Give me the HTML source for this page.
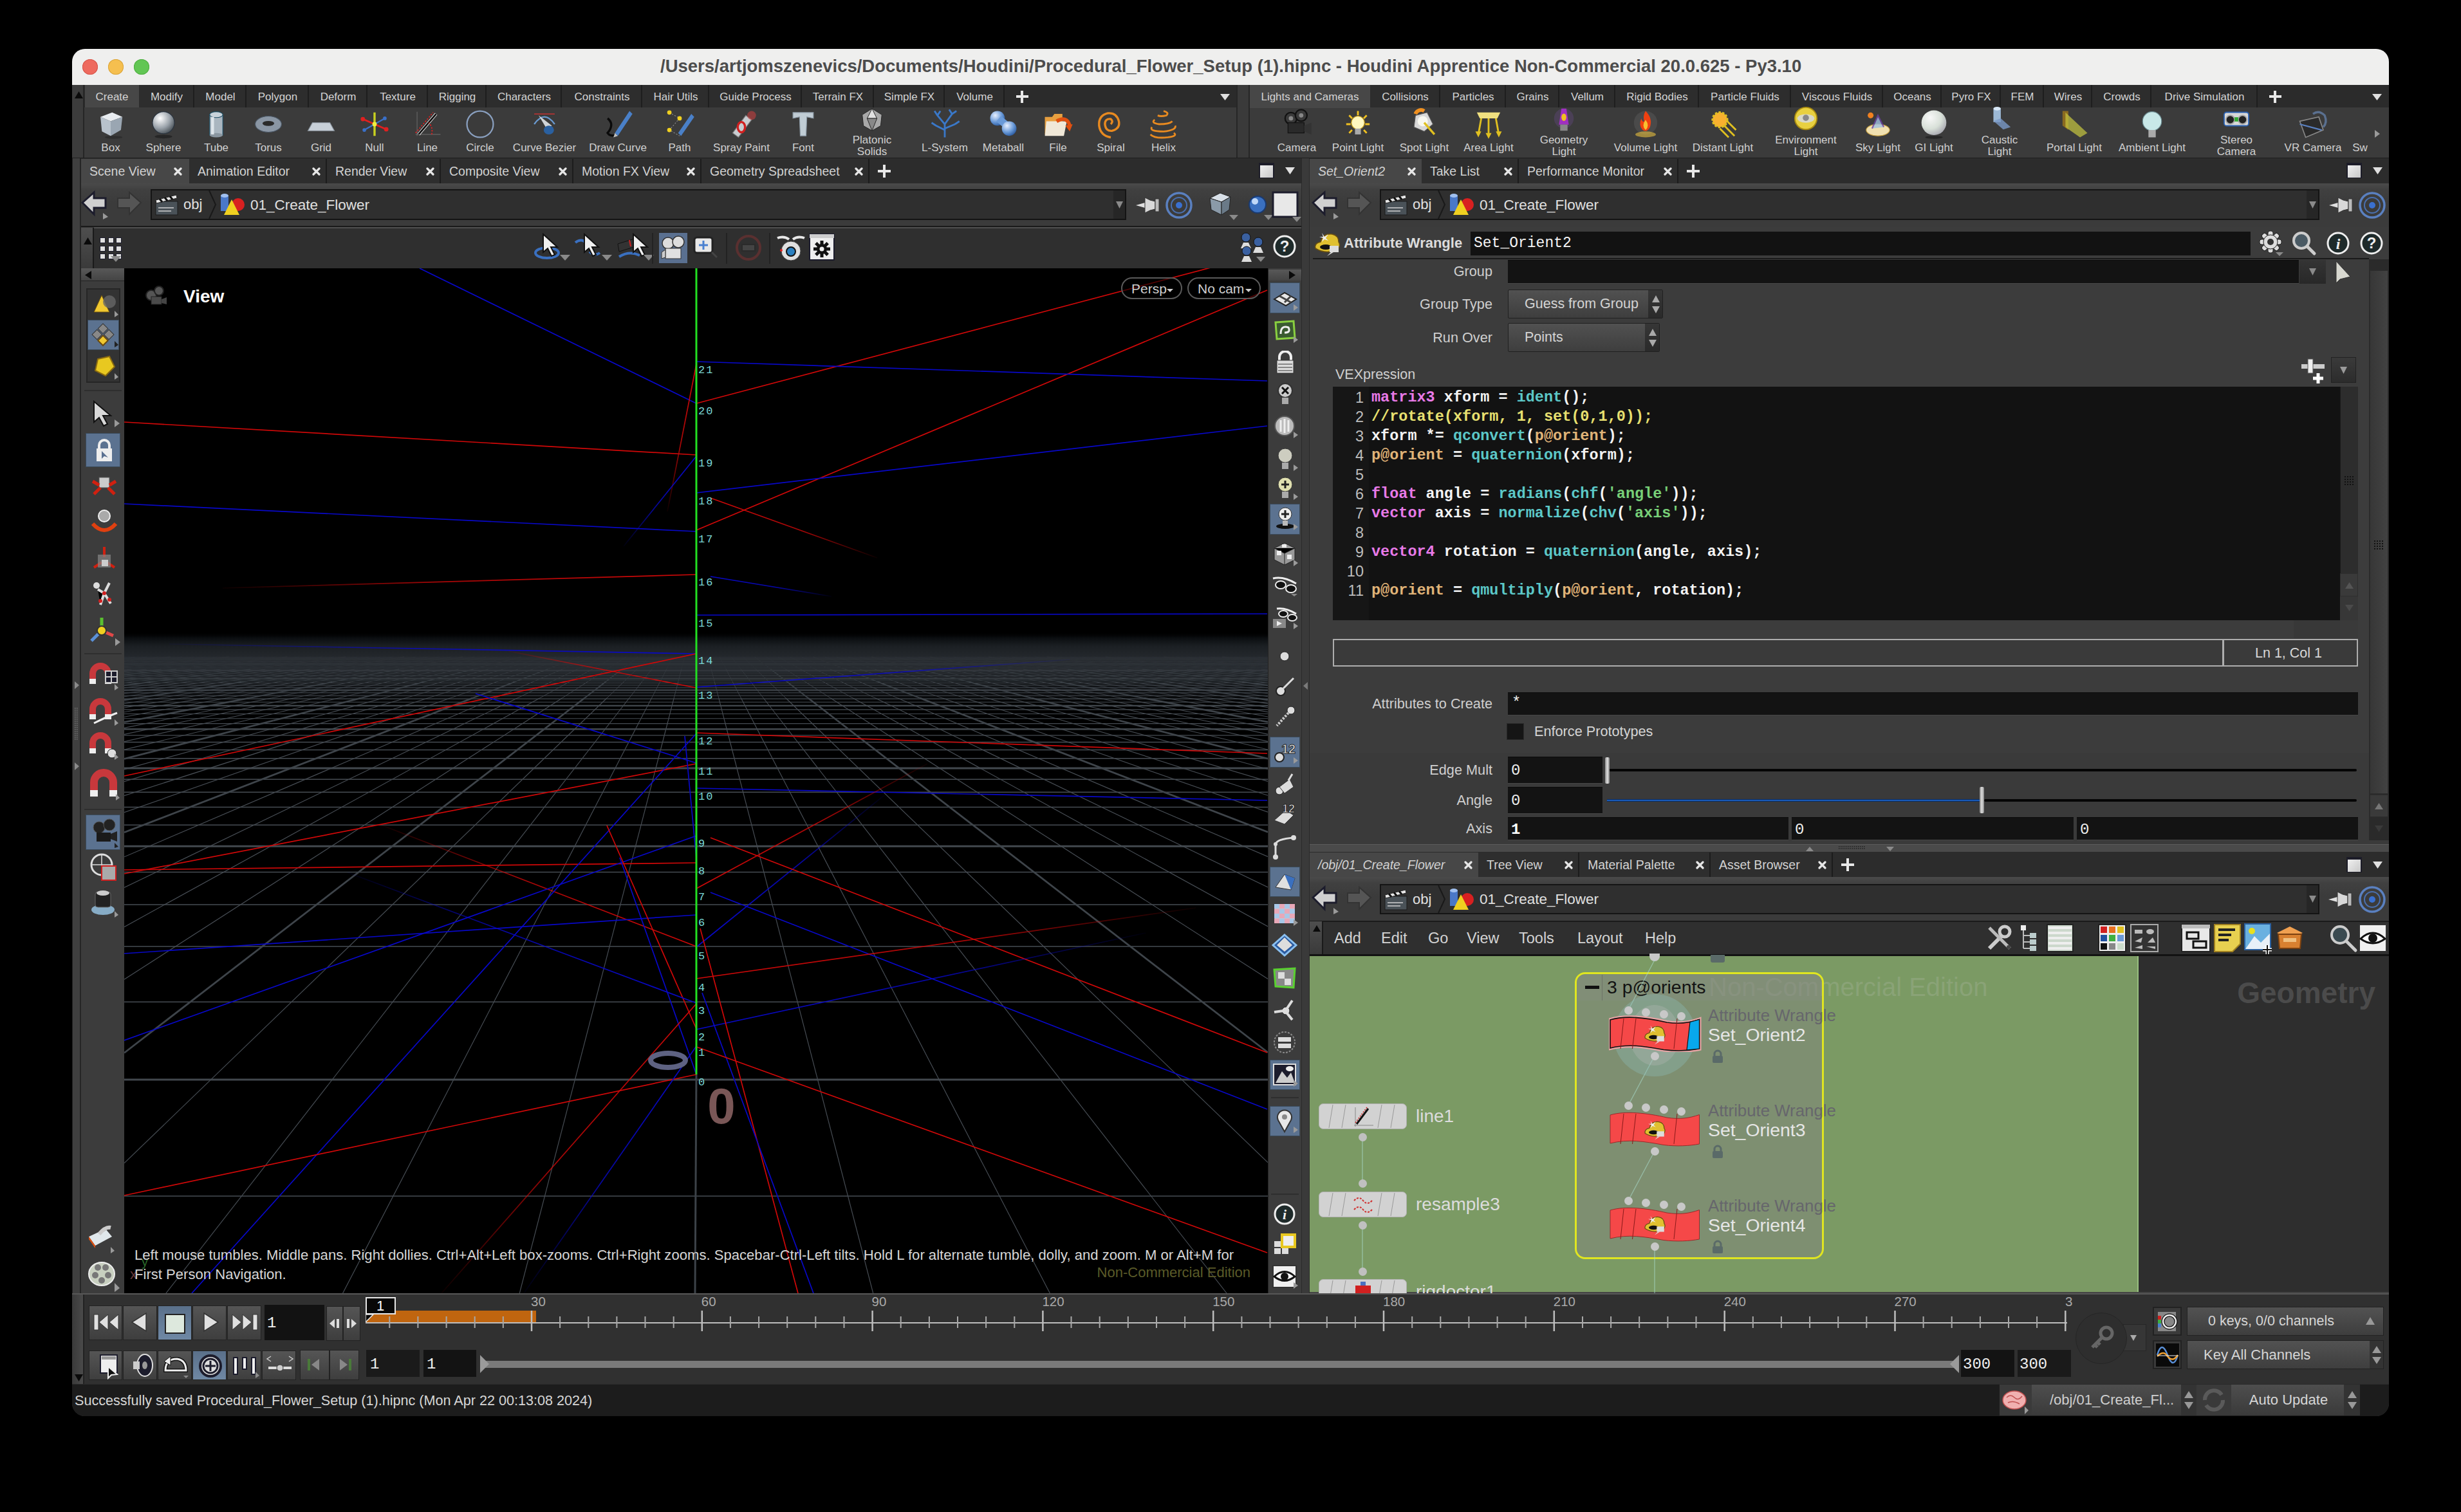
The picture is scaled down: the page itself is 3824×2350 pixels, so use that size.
<!DOCTYPE html>
<html><head><meta charset="utf-8"><title>Houdini</title>
<style>
html,body{margin:0;padding:0;background:#000;width:3824px;height:2350px;overflow:hidden;}
#win{position:absolute;left:0;top:0;width:3824px;height:2350px;}
#clip{position:absolute;left:112px;top:76px;width:3600px;height:2125px;border-radius:20px;overflow:hidden;background:#3a3a3a;}
#inner{position:absolute;left:-112px;top:-76px;width:3824px;height:2350px;}
</style></head><body><div id="win"><div id="clip"><div id="inner">
<div style="position:absolute;left:112px;top:76px;width:3600px;height:56px;background:#efefee;"></div>
<div style="position:absolute;left:128px;top:92px;width:24px;height:24px;background:#ee6a5e;border-radius:50%;box-shadow:inset 0 0 0 1px #d5564b;"></div>
<div style="position:absolute;left:168px;top:92px;width:24px;height:24px;background:#f5bf4f;border-radius:50%;box-shadow:inset 0 0 0 1px #d9a43b;"></div>
<div style="position:absolute;left:208px;top:92px;width:24px;height:24px;background:#62c654;border-radius:50%;box-shadow:inset 0 0 0 1px #4fae41;"></div>
<div style="position:absolute;top:85.0px;height:35px;line-height:35px;font-family:'Liberation Sans', sans-serif;font-size:27.5px;color:#4c4c4c;font-weight:bold;font-style:normal;white-space:pre;left:1026.0px;">/Users/artjomszenevics/Documents/Houdini/Procedural_Flower_Setup (1).hipnc - Houdini Apprentice Non-Commercial 20.0.625 - Py3.10</div>
<div style="position:absolute;left:112px;top:132px;width:3600px;height:114px;background:#3b3b3b;"></div>
<div style="position:absolute;left:112px;top:132px;width:19px;height:114px;background:#3c3c3c;border-right:2px solid #262626;box-sizing:border-box;"></div>
<svg style="position:absolute;left:115.5px;top:141.5px;" width="13" height="11" viewBox="0 0 13 11"><polygon points="0,11 13,11 6.5,0" fill="#0a0a0a"/></svg>
<div style="position:absolute;left:131px;top:132px;width:1790px;height:35px;background:#2b2b2b;"></div>
<div style="position:absolute;left:132px;top:132px;width:84px;height:36px;background:#474747;"></div>
<div style="position:absolute;top:139.5px;height:22px;line-height:22px;font-family:'Liberation Sans', sans-serif;font-size:17px;color:#d4d4d4;font-weight:normal;font-style:normal;white-space:pre;left:-826.0px;width:2000px;text-align:center;">Create</div>
<div style="position:absolute;left:216px;top:132px;width:86px;height:35px;background:#2d2d2d;border-right:2px solid #1e1e1e;box-sizing:border-box;"></div>
<div style="position:absolute;top:139.5px;height:22px;line-height:22px;font-family:'Liberation Sans', sans-serif;font-size:17px;color:#d4d4d4;font-weight:normal;font-style:normal;white-space:pre;left:-741.0px;width:2000px;text-align:center;">Modify</div>
<div style="position:absolute;left:302px;top:132px;width:81px;height:35px;background:#2d2d2d;border-right:2px solid #1e1e1e;box-sizing:border-box;"></div>
<div style="position:absolute;top:139.5px;height:22px;line-height:22px;font-family:'Liberation Sans', sans-serif;font-size:17px;color:#d4d4d4;font-weight:normal;font-style:normal;white-space:pre;left:-657.5px;width:2000px;text-align:center;">Model</div>
<div style="position:absolute;left:383px;top:132px;width:97px;height:35px;background:#2d2d2d;border-right:2px solid #1e1e1e;box-sizing:border-box;"></div>
<div style="position:absolute;top:139.5px;height:22px;line-height:22px;font-family:'Liberation Sans', sans-serif;font-size:17px;color:#d4d4d4;font-weight:normal;font-style:normal;white-space:pre;left:-568.5px;width:2000px;text-align:center;">Polygon</div>
<div style="position:absolute;left:480px;top:132px;width:91px;height:35px;background:#2d2d2d;border-right:2px solid #1e1e1e;box-sizing:border-box;"></div>
<div style="position:absolute;top:139.5px;height:22px;line-height:22px;font-family:'Liberation Sans', sans-serif;font-size:17px;color:#d4d4d4;font-weight:normal;font-style:normal;white-space:pre;left:-474.5px;width:2000px;text-align:center;">Deform</div>
<div style="position:absolute;left:571px;top:132px;width:94px;height:35px;background:#2d2d2d;border-right:2px solid #1e1e1e;box-sizing:border-box;"></div>
<div style="position:absolute;top:139.5px;height:22px;line-height:22px;font-family:'Liberation Sans', sans-serif;font-size:17px;color:#d4d4d4;font-weight:normal;font-style:normal;white-space:pre;left:-382.0px;width:2000px;text-align:center;">Texture</div>
<div style="position:absolute;left:665px;top:132px;width:91px;height:35px;background:#2d2d2d;border-right:2px solid #1e1e1e;box-sizing:border-box;"></div>
<div style="position:absolute;top:139.5px;height:22px;line-height:22px;font-family:'Liberation Sans', sans-serif;font-size:17px;color:#d4d4d4;font-weight:normal;font-style:normal;white-space:pre;left:-289.5px;width:2000px;text-align:center;">Rigging</div>
<div style="position:absolute;left:756px;top:132px;width:117px;height:35px;background:#2d2d2d;border-right:2px solid #1e1e1e;box-sizing:border-box;"></div>
<div style="position:absolute;top:139.5px;height:22px;line-height:22px;font-family:'Liberation Sans', sans-serif;font-size:17px;color:#d4d4d4;font-weight:normal;font-style:normal;white-space:pre;left:-185.5px;width:2000px;text-align:center;">Characters</div>
<div style="position:absolute;left:873px;top:132px;width:125px;height:35px;background:#2d2d2d;border-right:2px solid #1e1e1e;box-sizing:border-box;"></div>
<div style="position:absolute;top:139.5px;height:22px;line-height:22px;font-family:'Liberation Sans', sans-serif;font-size:17px;color:#d4d4d4;font-weight:normal;font-style:normal;white-space:pre;left:-64.5px;width:2000px;text-align:center;">Constraints</div>
<div style="position:absolute;left:998px;top:132px;width:104px;height:35px;background:#2d2d2d;border-right:2px solid #1e1e1e;box-sizing:border-box;"></div>
<div style="position:absolute;top:139.5px;height:22px;line-height:22px;font-family:'Liberation Sans', sans-serif;font-size:17px;color:#d4d4d4;font-weight:normal;font-style:normal;white-space:pre;left:50.0px;width:2000px;text-align:center;">Hair Utils</div>
<div style="position:absolute;left:1102px;top:132px;width:144px;height:35px;background:#2d2d2d;border-right:2px solid #1e1e1e;box-sizing:border-box;"></div>
<div style="position:absolute;top:139.5px;height:22px;line-height:22px;font-family:'Liberation Sans', sans-serif;font-size:17px;color:#d4d4d4;font-weight:normal;font-style:normal;white-space:pre;left:174.0px;width:2000px;text-align:center;">Guide Process</div>
<div style="position:absolute;left:1246px;top:132px;width:112px;height:35px;background:#2d2d2d;border-right:2px solid #1e1e1e;box-sizing:border-box;"></div>
<div style="position:absolute;top:139.5px;height:22px;line-height:22px;font-family:'Liberation Sans', sans-serif;font-size:17px;color:#d4d4d4;font-weight:normal;font-style:normal;white-space:pre;left:302.0px;width:2000px;text-align:center;">Terrain FX</div>
<div style="position:absolute;left:1358px;top:132px;width:110px;height:35px;background:#2d2d2d;border-right:2px solid #1e1e1e;box-sizing:border-box;"></div>
<div style="position:absolute;top:139.5px;height:22px;line-height:22px;font-family:'Liberation Sans', sans-serif;font-size:17px;color:#d4d4d4;font-weight:normal;font-style:normal;white-space:pre;left:413.0px;width:2000px;text-align:center;">Simple FX</div>
<div style="position:absolute;left:1468px;top:132px;width:93px;height:35px;background:#2d2d2d;border-right:2px solid #1e1e1e;box-sizing:border-box;"></div>
<div style="position:absolute;top:139.5px;height:22px;line-height:22px;font-family:'Liberation Sans', sans-serif;font-size:17px;color:#d4d4d4;font-weight:normal;font-style:normal;white-space:pre;left:514.5px;width:2000px;text-align:center;">Volume</div>
<div style="position:absolute;left:1578.5px;top:147.75px;width:19.0px;height:4.5px;background:#e8e8e8;"></div>
<div style="position:absolute;left:1585.75px;top:140.5px;width:4.5px;height:19.0px;background:#e8e8e8;"></div>
<svg style="position:absolute;left:1895.5px;top:146.0px;" width="15" height="10" viewBox="0 0 15 10"><polygon points="0,0 15,0 7.5,10" fill="#e0e0e0"/></svg>
<div style="position:absolute;left:131px;top:167px;width:1790px;height:79px;background:#3b3b3b;"></div>
<div style="position:absolute;left:1921px;top:132px;width:21px;height:114px;background:#3a3a3a;border-left:2px solid #262626;border-right:2px solid #262626;box-sizing:border-box;"></div>
<div style="position:absolute;left:1942px;top:132px;width:1770px;height:35px;background:#2b2b2b;"></div>
<div style="position:absolute;left:1942px;top:132px;width:187px;height:36px;background:#474747;"></div>
<div style="position:absolute;top:139.5px;height:22px;line-height:22px;font-family:'Liberation Sans', sans-serif;font-size:17px;color:#d4d4d4;font-weight:normal;font-style:normal;white-space:pre;left:1035.5px;width:2000px;text-align:center;">Lights and Cameras</div>
<div style="position:absolute;left:2129px;top:132px;width:109px;height:35px;background:#2d2d2d;border-right:2px solid #1e1e1e;box-sizing:border-box;"></div>
<div style="position:absolute;top:139.5px;height:22px;line-height:22px;font-family:'Liberation Sans', sans-serif;font-size:17px;color:#d4d4d4;font-weight:normal;font-style:normal;white-space:pre;left:1183.5px;width:2000px;text-align:center;">Collisions</div>
<div style="position:absolute;left:2238px;top:132px;width:102px;height:35px;background:#2d2d2d;border-right:2px solid #1e1e1e;box-sizing:border-box;"></div>
<div style="position:absolute;top:139.5px;height:22px;line-height:22px;font-family:'Liberation Sans', sans-serif;font-size:17px;color:#d4d4d4;font-weight:normal;font-style:normal;white-space:pre;left:1289.0px;width:2000px;text-align:center;">Particles</div>
<div style="position:absolute;left:2340px;top:132px;width:83px;height:35px;background:#2d2d2d;border-right:2px solid #1e1e1e;box-sizing:border-box;"></div>
<div style="position:absolute;top:139.5px;height:22px;line-height:22px;font-family:'Liberation Sans', sans-serif;font-size:17px;color:#d4d4d4;font-weight:normal;font-style:normal;white-space:pre;left:1381.5px;width:2000px;text-align:center;">Grains</div>
<div style="position:absolute;left:2423px;top:132px;width:87px;height:35px;background:#2d2d2d;border-right:2px solid #1e1e1e;box-sizing:border-box;"></div>
<div style="position:absolute;top:139.5px;height:22px;line-height:22px;font-family:'Liberation Sans', sans-serif;font-size:17px;color:#d4d4d4;font-weight:normal;font-style:normal;white-space:pre;left:1466.5px;width:2000px;text-align:center;">Vellum</div>
<div style="position:absolute;left:2510px;top:132px;width:130px;height:35px;background:#2d2d2d;border-right:2px solid #1e1e1e;box-sizing:border-box;"></div>
<div style="position:absolute;top:139.5px;height:22px;line-height:22px;font-family:'Liberation Sans', sans-serif;font-size:17px;color:#d4d4d4;font-weight:normal;font-style:normal;white-space:pre;left:1575.0px;width:2000px;text-align:center;">Rigid Bodies</div>
<div style="position:absolute;left:2640px;top:132px;width:143px;height:35px;background:#2d2d2d;border-right:2px solid #1e1e1e;box-sizing:border-box;"></div>
<div style="position:absolute;top:139.5px;height:22px;line-height:22px;font-family:'Liberation Sans', sans-serif;font-size:17px;color:#d4d4d4;font-weight:normal;font-style:normal;white-space:pre;left:1711.5px;width:2000px;text-align:center;">Particle Fluids</div>
<div style="position:absolute;left:2783px;top:132px;width:143px;height:35px;background:#2d2d2d;border-right:2px solid #1e1e1e;box-sizing:border-box;"></div>
<div style="position:absolute;top:139.5px;height:22px;line-height:22px;font-family:'Liberation Sans', sans-serif;font-size:17px;color:#d4d4d4;font-weight:normal;font-style:normal;white-space:pre;left:1854.5px;width:2000px;text-align:center;">Viscous Fluids</div>
<div style="position:absolute;left:2926px;top:132px;width:91px;height:35px;background:#2d2d2d;border-right:2px solid #1e1e1e;box-sizing:border-box;"></div>
<div style="position:absolute;top:139.5px;height:22px;line-height:22px;font-family:'Liberation Sans', sans-serif;font-size:17px;color:#d4d4d4;font-weight:normal;font-style:normal;white-space:pre;left:1971.5px;width:2000px;text-align:center;">Oceans</div>
<div style="position:absolute;left:3017px;top:132px;width:92px;height:35px;background:#2d2d2d;border-right:2px solid #1e1e1e;box-sizing:border-box;"></div>
<div style="position:absolute;top:139.5px;height:22px;line-height:22px;font-family:'Liberation Sans', sans-serif;font-size:17px;color:#d4d4d4;font-weight:normal;font-style:normal;white-space:pre;left:2063.0px;width:2000px;text-align:center;">Pyro FX</div>
<div style="position:absolute;left:3109px;top:132px;width:67px;height:35px;background:#2d2d2d;border-right:2px solid #1e1e1e;box-sizing:border-box;"></div>
<div style="position:absolute;top:139.5px;height:22px;line-height:22px;font-family:'Liberation Sans', sans-serif;font-size:17px;color:#d4d4d4;font-weight:normal;font-style:normal;white-space:pre;left:2142.5px;width:2000px;text-align:center;">FEM</div>
<div style="position:absolute;left:3176px;top:132px;width:75px;height:35px;background:#2d2d2d;border-right:2px solid #1e1e1e;box-sizing:border-box;"></div>
<div style="position:absolute;top:139.5px;height:22px;line-height:22px;font-family:'Liberation Sans', sans-serif;font-size:17px;color:#d4d4d4;font-weight:normal;font-style:normal;white-space:pre;left:2213.5px;width:2000px;text-align:center;">Wires</div>
<div style="position:absolute;left:3251px;top:132px;width:92px;height:35px;background:#2d2d2d;border-right:2px solid #1e1e1e;box-sizing:border-box;"></div>
<div style="position:absolute;top:139.5px;height:22px;line-height:22px;font-family:'Liberation Sans', sans-serif;font-size:17px;color:#d4d4d4;font-weight:normal;font-style:normal;white-space:pre;left:2297.0px;width:2000px;text-align:center;">Crowds</div>
<div style="position:absolute;left:3343px;top:132px;width:165px;height:35px;background:#2d2d2d;border-right:2px solid #1e1e1e;box-sizing:border-box;"></div>
<div style="position:absolute;top:139.5px;height:22px;line-height:22px;font-family:'Liberation Sans', sans-serif;font-size:17px;color:#d4d4d4;font-weight:normal;font-style:normal;white-space:pre;left:2425.5px;width:2000px;text-align:center;">Drive Simulation</div>
<div style="position:absolute;left:3525.5px;top:147.75px;width:19.0px;height:4.5px;background:#e8e8e8;"></div>
<div style="position:absolute;left:3532.75px;top:140.5px;width:4.5px;height:19.0px;background:#e8e8e8;"></div>
<svg style="position:absolute;left:3685.5px;top:146.0px;" width="15" height="10" viewBox="0 0 15 10"><polygon points="0,0 15,0 7.5,10" fill="#e0e0e0"/></svg>
<div style="position:absolute;left:112px;top:245px;width:3600px;height:2px;background:#1e1e1e;"></div>
<div style="position:absolute;top:219.0px;height:22px;line-height:22px;font-family:'Liberation Sans', sans-serif;font-size:17px;color:#d0d0d0;font-weight:normal;font-style:normal;white-space:pre;left:-828.0px;width:2000px;text-align:center;">Box</div>
<div style="position:absolute;top:219.0px;height:22px;line-height:22px;font-family:'Liberation Sans', sans-serif;font-size:17px;color:#d0d0d0;font-weight:normal;font-style:normal;white-space:pre;left:-746.0px;width:2000px;text-align:center;">Sphere</div>
<div style="position:absolute;top:219.0px;height:22px;line-height:22px;font-family:'Liberation Sans', sans-serif;font-size:17px;color:#d0d0d0;font-weight:normal;font-style:normal;white-space:pre;left:-664.0px;width:2000px;text-align:center;">Tube</div>
<div style="position:absolute;top:219.0px;height:22px;line-height:22px;font-family:'Liberation Sans', sans-serif;font-size:17px;color:#d0d0d0;font-weight:normal;font-style:normal;white-space:pre;left:-583.0px;width:2000px;text-align:center;">Torus</div>
<div style="position:absolute;top:219.0px;height:22px;line-height:22px;font-family:'Liberation Sans', sans-serif;font-size:17px;color:#d0d0d0;font-weight:normal;font-style:normal;white-space:pre;left:-501.0px;width:2000px;text-align:center;">Grid</div>
<div style="position:absolute;top:219.0px;height:22px;line-height:22px;font-family:'Liberation Sans', sans-serif;font-size:17px;color:#d0d0d0;font-weight:normal;font-style:normal;white-space:pre;left:-418.0px;width:2000px;text-align:center;">Null</div>
<div style="position:absolute;top:219.0px;height:22px;line-height:22px;font-family:'Liberation Sans', sans-serif;font-size:17px;color:#d0d0d0;font-weight:normal;font-style:normal;white-space:pre;left:-336.0px;width:2000px;text-align:center;">Line</div>
<div style="position:absolute;top:219.0px;height:22px;line-height:22px;font-family:'Liberation Sans', sans-serif;font-size:17px;color:#d0d0d0;font-weight:normal;font-style:normal;white-space:pre;left:-254.0px;width:2000px;text-align:center;">Circle</div>
<div style="position:absolute;top:219.0px;height:22px;line-height:22px;font-family:'Liberation Sans', sans-serif;font-size:17px;color:#d0d0d0;font-weight:normal;font-style:normal;white-space:pre;left:-154.0px;width:2000px;text-align:center;">Curve Bezier</div>
<div style="position:absolute;top:219.0px;height:22px;line-height:22px;font-family:'Liberation Sans', sans-serif;font-size:17px;color:#d0d0d0;font-weight:normal;font-style:normal;white-space:pre;left:-40.0px;width:2000px;text-align:center;">Draw Curve</div>
<div style="position:absolute;top:219.0px;height:22px;line-height:22px;font-family:'Liberation Sans', sans-serif;font-size:17px;color:#d0d0d0;font-weight:normal;font-style:normal;white-space:pre;left:56.0px;width:2000px;text-align:center;">Path</div>
<div style="position:absolute;top:219.0px;height:22px;line-height:22px;font-family:'Liberation Sans', sans-serif;font-size:17px;color:#d0d0d0;font-weight:normal;font-style:normal;white-space:pre;left:152.0px;width:2000px;text-align:center;">Spray Paint</div>
<div style="position:absolute;top:219.0px;height:22px;line-height:22px;font-family:'Liberation Sans', sans-serif;font-size:17px;color:#d0d0d0;font-weight:normal;font-style:normal;white-space:pre;left:248.0px;width:2000px;text-align:center;">Font</div>
<div style="position:absolute;top:206.5px;height:22px;line-height:22px;font-family:'Liberation Sans', sans-serif;font-size:17px;color:#d0d0d0;font-weight:normal;font-style:normal;white-space:pre;left:355.0px;width:2000px;text-align:center;">Platonic</div>
<div style="position:absolute;top:224.5px;height:22px;line-height:22px;font-family:'Liberation Sans', sans-serif;font-size:17px;color:#d0d0d0;font-weight:normal;font-style:normal;white-space:pre;left:355.0px;width:2000px;text-align:center;">Solids</div>
<div style="position:absolute;top:219.0px;height:22px;line-height:22px;font-family:'Liberation Sans', sans-serif;font-size:17px;color:#d0d0d0;font-weight:normal;font-style:normal;white-space:pre;left:468.0px;width:2000px;text-align:center;">L-System</div>
<div style="position:absolute;top:219.0px;height:22px;line-height:22px;font-family:'Liberation Sans', sans-serif;font-size:17px;color:#d0d0d0;font-weight:normal;font-style:normal;white-space:pre;left:559.0px;width:2000px;text-align:center;">Metaball</div>
<div style="position:absolute;top:219.0px;height:22px;line-height:22px;font-family:'Liberation Sans', sans-serif;font-size:17px;color:#d0d0d0;font-weight:normal;font-style:normal;white-space:pre;left:644.0px;width:2000px;text-align:center;">File</div>
<div style="position:absolute;top:219.0px;height:22px;line-height:22px;font-family:'Liberation Sans', sans-serif;font-size:17px;color:#d0d0d0;font-weight:normal;font-style:normal;white-space:pre;left:726.0px;width:2000px;text-align:center;">Spiral</div>
<div style="position:absolute;top:219.0px;height:22px;line-height:22px;font-family:'Liberation Sans', sans-serif;font-size:17px;color:#d0d0d0;font-weight:normal;font-style:normal;white-space:pre;left:808.0px;width:2000px;text-align:center;">Helix</div>
<div style="position:absolute;top:219.0px;height:22px;line-height:22px;font-family:'Liberation Sans', sans-serif;font-size:17px;color:#d0d0d0;font-weight:normal;font-style:normal;white-space:pre;left:1015.0px;width:2000px;text-align:center;">Camera</div>
<div style="position:absolute;top:219.0px;height:22px;line-height:22px;font-family:'Liberation Sans', sans-serif;font-size:17px;color:#d0d0d0;font-weight:normal;font-style:normal;white-space:pre;left:1110.0px;width:2000px;text-align:center;">Point Light</div>
<div style="position:absolute;top:219.0px;height:22px;line-height:22px;font-family:'Liberation Sans', sans-serif;font-size:17px;color:#d0d0d0;font-weight:normal;font-style:normal;white-space:pre;left:1213.0px;width:2000px;text-align:center;">Spot Light</div>
<div style="position:absolute;top:219.0px;height:22px;line-height:22px;font-family:'Liberation Sans', sans-serif;font-size:17px;color:#d0d0d0;font-weight:normal;font-style:normal;white-space:pre;left:1313.0px;width:2000px;text-align:center;">Area Light</div>
<div style="position:absolute;top:206.5px;height:22px;line-height:22px;font-family:'Liberation Sans', sans-serif;font-size:17px;color:#d0d0d0;font-weight:normal;font-style:normal;white-space:pre;left:1430.0px;width:2000px;text-align:center;">Geometry</div>
<div style="position:absolute;top:224.5px;height:22px;line-height:22px;font-family:'Liberation Sans', sans-serif;font-size:17px;color:#d0d0d0;font-weight:normal;font-style:normal;white-space:pre;left:1430.0px;width:2000px;text-align:center;">Light</div>
<div style="position:absolute;top:219.0px;height:22px;line-height:22px;font-family:'Liberation Sans', sans-serif;font-size:17px;color:#d0d0d0;font-weight:normal;font-style:normal;white-space:pre;left:1557.0px;width:2000px;text-align:center;">Volume Light</div>
<div style="position:absolute;top:219.0px;height:22px;line-height:22px;font-family:'Liberation Sans', sans-serif;font-size:17px;color:#d0d0d0;font-weight:normal;font-style:normal;white-space:pre;left:1677.0px;width:2000px;text-align:center;">Distant Light</div>
<div style="position:absolute;top:206.5px;height:22px;line-height:22px;font-family:'Liberation Sans', sans-serif;font-size:17px;color:#d0d0d0;font-weight:normal;font-style:normal;white-space:pre;left:1806.0px;width:2000px;text-align:center;">Environment</div>
<div style="position:absolute;top:224.5px;height:22px;line-height:22px;font-family:'Liberation Sans', sans-serif;font-size:17px;color:#d0d0d0;font-weight:normal;font-style:normal;white-space:pre;left:1806.0px;width:2000px;text-align:center;">Light</div>
<div style="position:absolute;top:219.0px;height:22px;line-height:22px;font-family:'Liberation Sans', sans-serif;font-size:17px;color:#d0d0d0;font-weight:normal;font-style:normal;white-space:pre;left:1918.0px;width:2000px;text-align:center;">Sky Light</div>
<div style="position:absolute;top:219.0px;height:22px;line-height:22px;font-family:'Liberation Sans', sans-serif;font-size:17px;color:#d0d0d0;font-weight:normal;font-style:normal;white-space:pre;left:2005.0px;width:2000px;text-align:center;">GI Light</div>
<div style="position:absolute;top:206.5px;height:22px;line-height:22px;font-family:'Liberation Sans', sans-serif;font-size:17px;color:#d0d0d0;font-weight:normal;font-style:normal;white-space:pre;left:2107.0px;width:2000px;text-align:center;">Caustic</div>
<div style="position:absolute;top:224.5px;height:22px;line-height:22px;font-family:'Liberation Sans', sans-serif;font-size:17px;color:#d0d0d0;font-weight:normal;font-style:normal;white-space:pre;left:2107.0px;width:2000px;text-align:center;">Light</div>
<div style="position:absolute;top:219.0px;height:22px;line-height:22px;font-family:'Liberation Sans', sans-serif;font-size:17px;color:#d0d0d0;font-weight:normal;font-style:normal;white-space:pre;left:2223.0px;width:2000px;text-align:center;">Portal Light</div>
<div style="position:absolute;top:219.0px;height:22px;line-height:22px;font-family:'Liberation Sans', sans-serif;font-size:17px;color:#d0d0d0;font-weight:normal;font-style:normal;white-space:pre;left:2344.0px;width:2000px;text-align:center;">Ambient Light</div>
<div style="position:absolute;top:206.5px;height:22px;line-height:22px;font-family:'Liberation Sans', sans-serif;font-size:17px;color:#d0d0d0;font-weight:normal;font-style:normal;white-space:pre;left:2475.0px;width:2000px;text-align:center;">Stereo</div>
<div style="position:absolute;top:224.5px;height:22px;line-height:22px;font-family:'Liberation Sans', sans-serif;font-size:17px;color:#d0d0d0;font-weight:normal;font-style:normal;white-space:pre;left:2475.0px;width:2000px;text-align:center;">Camera</div>
<div style="position:absolute;top:219.0px;height:22px;line-height:22px;font-family:'Liberation Sans', sans-serif;font-size:17px;color:#d0d0d0;font-weight:normal;font-style:normal;white-space:pre;left:2594.0px;width:2000px;text-align:center;">VR Camera</div>
<div style="position:absolute;top:219.0px;height:22px;line-height:22px;font-family:'Liberation Sans', sans-serif;font-size:17px;color:#d0d0d0;font-weight:normal;font-style:normal;white-space:pre;left:2667.0px;width:2000px;text-align:center;">Sw</div>
<svg style="position:absolute;left:3690.0px;top:202.0px;" width="8" height="12" viewBox="0 0 8 12"><polygon points="0,0 0,12 8,6.0" fill="#9a9a9a"/></svg>
<svg style="position:absolute;left:150px;top:171px;transform:scale(1.1363636363636365);transform-origin:center;" width="44" height="44" viewBox="0 0 44 44"><polygon points="8,12 24,6 38,12 22,18" fill="#e8ecf0"/><polygon points="8,12 22,18 22,38 10,32" fill="#b8c2cc"/><polygon points="22,18 38,12 36,30 22,38" fill="#9aa6b2"/><ellipse cx="26" cy="40" rx="12" ry="2" fill="#222" opacity="0.5"/></svg>
<svg style="position:absolute;left:232px;top:171px;transform:scale(1.1363636363636365);transform-origin:center;" width="44" height="44" viewBox="0 0 44 44"><defs><radialGradient id="g1" cx="0.35" cy="0.3" r="0.75"><stop offset="0" stop-color="#ffffff"/><stop offset="0.6" stop-color="#9aa2aa"/><stop offset="1" stop-color="#4a5258"/></radialGradient></defs><circle cx="22" cy="20" r="15" fill="url(#g1)" stroke="#2a3440" stroke-width="1"/><ellipse cx="22" cy="39" rx="12" ry="2.5" fill="#111" opacity="0.5"/></svg>
<svg style="position:absolute;left:314px;top:171px;transform:scale(1.1363636363636365);transform-origin:center;" width="44" height="44" viewBox="0 0 44 44"><rect x="13" y="9" width="18" height="28" fill="#aab6c0" stroke="#1a4a60" stroke-width="1"/><ellipse cx="22" cy="9" rx="9" ry="4" fill="#c8d2da" stroke="#1a4a60" stroke-width="1"/><ellipse cx="22" cy="37" rx="9" ry="3" fill="#8a96a0"/><rect x="15" y="12" width="4" height="24" fill="#dde4ea"/></svg>
<svg style="position:absolute;left:395px;top:171px;transform:scale(1.1363636363636365);transform-origin:center;" width="44" height="44" viewBox="0 0 44 44"><ellipse cx="22" cy="22" rx="18" ry="11" fill="#8a96a4" stroke="#4a5664" stroke-width="1"/><ellipse cx="22" cy="21" rx="8" ry="3.5" fill="#2a2a2a"/></svg>
<svg style="position:absolute;left:477px;top:171px;transform:scale(1.1363636363636365);transform-origin:center;" width="44" height="44" viewBox="0 0 44 44"><polygon points="10,20 34,20 40,31 4,31" fill="#c8d0d8" stroke="#8a949e" stroke-width="1"/></svg>
<svg style="position:absolute;left:560px;top:171px;transform:scale(1.1363636363636365);transform-origin:center;" width="44" height="44" viewBox="0 0 44 44"><line x1="22" y1="6" x2="22" y2="38" stroke="#c8d020" stroke-width="3"/><line x1="6" y1="15" x2="38" y2="29" stroke="#e02020" stroke-width="2.5"/><line x1="8" y1="30" x2="36" y2="14" stroke="#3a70c8" stroke-width="2"/><circle cx="6" cy="15" r="3" fill="#e02020"/><circle cx="38" cy="29" r="3" fill="#e02020"/><circle cx="8" cy="30" r="2.5" fill="#3a70c8"/><circle cx="36" cy="14" r="2.5" fill="#3a70c8"/><circle cx="22" cy="22" r="3" fill="#f0f040"/></svg>
<svg style="position:absolute;left:642px;top:171px;transform:scale(1.1363636363636365);transform-origin:center;" width="44" height="44" viewBox="0 0 44 44"><line x1="8" y1="5" x2="8" y2="38" stroke="#666" stroke-width="1"/><line x1="6" y1="36" x2="40" y2="36" stroke="#666" stroke-width="1"/><line x1="10" y1="36" x2="34" y2="8" stroke="#f0f0f0" stroke-width="4"/><line x1="10" y1="36" x2="34" y2="8" stroke="#111" stroke-width="2.5"/><path d="M6,34 L30,6" stroke="#e02020" stroke-width="1.5" stroke-dasharray="2,2"/><path d="M28,36 Q30,26 24,20" stroke="#e02020" stroke-width="1.5" fill="none" stroke-dasharray="2,2"/></svg>
<svg style="position:absolute;left:724px;top:171px;transform:scale(1.1363636363636365);transform-origin:center;" width="44" height="44" viewBox="0 0 44 44"><circle cx="22" cy="22" r="18" fill="none" stroke="#8aa0c0" stroke-width="2"/></svg>
<svg style="position:absolute;left:824px;top:171px;transform:scale(1.1363636363636365);transform-origin:center;" width="44" height="44" viewBox="0 0 44 44"><path d="M8,22 Q22,2 36,22" stroke="#6a9ad0" stroke-width="2" fill="none"/><line x1="8" y1="8" x2="36" y2="8" stroke="#e03030" stroke-width="1"/><polygon points="14,10 26,30 32,24" fill="#d0d4d8"/><ellipse cx="28" cy="30" rx="7" ry="6" fill="#2a60a0"/></svg>
<svg style="position:absolute;left:938px;top:171px;transform:scale(1.1363636363636365);transform-origin:center;" width="44" height="44" viewBox="0 0 44 44"><path d="M8,14 Q18,22 8,34 Q12,40 22,36" stroke="#0a0a0a" stroke-width="3" fill="none"/><polygon points="38,4 42,8 22,38 18,34" fill="#4a80c8"/><polygon points="18,34 22,38 16,40" fill="#c0c0c0"/></svg>
<svg style="position:absolute;left:1034px;top:171px;transform:scale(1.1363636363636365);transform-origin:center;" width="44" height="44" viewBox="0 0 44 44"><path d="M8,6 L22,14 L8,30 L22,38" stroke="#888" stroke-width="1" fill="none" stroke-dasharray="2,2"/><circle cx="8" cy="6" r="3" fill="#f0d020"/><circle cx="22" cy="14" r="3" fill="#f0d020"/><circle cx="8" cy="30" r="3" fill="#f0d020"/><polygon points="38,8 42,12 24,38 20,34" fill="#4a80c8"/></svg>
<svg style="position:absolute;left:1130px;top:171px;transform:scale(1.1363636363636365);transform-origin:center;" width="44" height="44" viewBox="0 0 44 44"><polygon points="10,34 28,10 36,16 18,40" fill="#c8ccd0" stroke="#777" stroke-width="1"/><ellipse cx="22" cy="26" rx="5" ry="7" fill="none" stroke="#d02020" stroke-width="3"/><circle cx="36" cy="10" r="6" fill="#e04040" opacity="0.5"/></svg>
<svg style="position:absolute;left:1226px;top:171px;transform:scale(1.1363636363636365);transform-origin:center;" width="44" height="44" viewBox="0 0 44 44"><path d="M8,6 L36,6 L36,14 L27,12 L26,38 L18,38 L17,12 L8,14 Z" fill="#c0ccd4" stroke="#8a98a4" stroke-width="1"/></svg>
<svg style="position:absolute;left:1333px;top:164px;transform:scale(0.9545454545454546);transform-origin:center;" width="44" height="44" viewBox="0 0 44 44"><polygon points="22,4 38,14 36,32 22,40 8,32 6,14" fill="#a8a8a8" stroke="#222" stroke-width="1"/><polygon points="22,4 30,20 14,20" fill="#e0e0e0" stroke="#222" stroke-width="1"/><polygon points="14,20 30,20 22,40" fill="#888" stroke="#222" stroke-width="1"/></svg>
<svg style="position:absolute;left:1446px;top:171px;transform:scale(1.1363636363636365);transform-origin:center;" width="44" height="44" viewBox="0 0 44 44"><path d="M22,40 L22,22 L12,10 M22,22 L32,8 M22,30 L10,24 M22,28 L36,22 M12,10 L8,4 M12,10 L16,4 M32,8 L28,2 M32,8 L38,4 M10,24 L4,20 M36,22 L42,18" stroke="#3a78c8" stroke-width="2.5" fill="none"/></svg>
<svg style="position:absolute;left:1537px;top:171px;transform:scale(1.1363636363636365);transform-origin:center;" width="44" height="44" viewBox="0 0 44 44"><defs><radialGradient id="g2" cx="0.35" cy="0.3" r="0.75"><stop offset="0" stop-color="#e8f0ff"/><stop offset="0.6" stop-color="#6a9ad8"/><stop offset="1" stop-color="#2a5aa0"/></radialGradient></defs><circle cx="14" cy="14" r="10" fill="url(#g2)"/><rect x="14" y="14" width="14" height="10" transform="rotate(40 21 19)" fill="#6a9ad8"/><circle cx="30" cy="28" r="10" fill="url(#g2)"/></svg>
<svg style="position:absolute;left:1622px;top:171px;transform:scale(1.1363636363636365);transform-origin:center;" width="44" height="44" viewBox="0 0 44 44"><path d="M4,12 L14,12 L17,8 L28,8 L28,36 L4,36 Z" fill="#e8a040"/><polygon points="6,18 34,18 30,38 4,38" fill="#f0e8d8"/><path d="M20,18 Q34,10 38,24" stroke="#e05010" stroke-width="5" fill="none"/><polygon points="32,24 42,22 38,32" fill="#e05010"/></svg>
<svg style="position:absolute;left:1704px;top:171px;transform:scale(1.1363636363636365);transform-origin:center;" width="44" height="44" viewBox="0 0 44 44"><path d="M22,22 Q26,18 22,15 Q14,14 14,22 Q15,32 24,31 Q35,28 33,18 Q30,6 18,7 Q5,10 6,24 Q8,38 22,40" stroke="#e88a20" stroke-width="3" fill="none"/></svg>
<svg style="position:absolute;left:1786px;top:171px;transform:scale(1.1363636363636365);transform-origin:center;" width="44" height="44" viewBox="0 0 44 44"><path d="M22,4 Q30,6 26,10 Q18,12 14,10 M10,16 Q4,20 16,22 Q30,22 34,18 M6,26 Q2,32 22,32 Q40,30 38,24 M4,36 Q10,42 28,40 Q42,38 36,34" stroke="#e88a20" stroke-width="2.5" fill="none"/></svg>
<svg style="position:absolute;left:1993px;top:171px;transform:scale(1.1363636363636365);transform-origin:center;" width="44" height="44" viewBox="0 0 44 44"><circle cx="14" cy="14" r="8" fill="#3a3a3a" stroke="#111" stroke-width="2"/><circle cx="28" cy="10" r="8" fill="#3a3a3a" stroke="#111" stroke-width="2"/><rect x="10" y="20" width="22" height="14" fill="#2a2a2a" stroke="#111"/><polygon points="32,24 42,20 42,36 32,32" fill="#333"/><circle cx="14" cy="14" r="3" fill="#888"/><circle cx="28" cy="10" r="3" fill="#888"/></svg>
<svg style="position:absolute;left:2088px;top:171px;transform:scale(1.1363636363636365);transform-origin:center;" width="44" height="44" viewBox="0 0 44 44"><path d="M22,4 L22,10 M6,22 L12,22 M32,22 L38,22 M10,10 L14,14 M34,10 L30,14 M10,34 L14,30 M34,34 L30,30" stroke="#f0c020" stroke-width="2.5"/><circle cx="22" cy="20" r="9" fill="#fff8c0" stroke="#c8a020"/><rect x="18" y="28" width="8" height="8" fill="#aaa"/></svg>
<svg style="position:absolute;left:2191px;top:171px;transform:scale(1.1363636363636365);transform-origin:center;" width="44" height="44" viewBox="0 0 44 44"><polygon points="10,10 26,6 34,22 22,32 8,26" fill="#d8d8d8" stroke="#555"/><circle cx="20" cy="18" r="7" fill="#f8f8f0"/><path d="M10,8 A8,8 0 0 1 22,4" stroke="#f09020" stroke-width="5" fill="none"/><line x1="22" y1="20" x2="36" y2="36" stroke="#e0c020" stroke-width="3"/></svg>
<svg style="position:absolute;left:2291px;top:171px;transform:scale(1.1363636363636365);transform-origin:center;" width="44" height="44" viewBox="0 0 44 44"><polygon points="6,6 38,6 34,14 10,14" fill="#f0e080"/><path d="M12,14 L8,36 M22,14 L22,38 M32,14 L36,36" stroke="#e0c020" stroke-width="2.5"/><polygon points="4,32 12,32 8,40" fill="#e0c020"/><polygon points="18,34 26,34 22,42" fill="#e0c020"/><polygon points="32,32 40,32 36,40" fill="#e0c020"/></svg>
<svg style="position:absolute;left:2408px;top:164px;transform:scale(0.9545454545454546);transform-origin:center;" width="44" height="44" viewBox="0 0 44 44"><circle cx="22" cy="20" r="16" fill="#6a4a8a" opacity="0.35"/><polygon points="18,4 26,4 30,30 14,30" fill="#a030c0"/><ellipse cx="22" cy="18" rx="4" ry="6" fill="#f0c020"/><rect x="16" y="30" width="12" height="10" fill="#888"/></svg>
<svg style="position:absolute;left:2535px;top:171px;transform:scale(1.1363636363636365);transform-origin:center;" width="44" height="44" viewBox="0 0 44 44"><circle cx="22" cy="20" r="16" fill="#5a5a5a" opacity="0.5"/><ellipse cx="22" cy="36" rx="14" ry="4" fill="#e8c040" opacity="0.6"/><path d="M22,4 Q32,14 28,26 Q24,34 18,30 Q12,24 16,14 Q18,20 20,18 Q18,10 22,4 Z" fill="#f04010"/><path d="M22,16 Q28,24 22,30 Q16,24 22,16Z" fill="#f8c030"/></svg>
<svg style="position:absolute;left:2655px;top:171px;transform:scale(1.1363636363636365);transform-origin:center;" width="44" height="44" viewBox="0 0 44 44"><circle cx="18" cy="16" r="10" fill="#f8b030" stroke="#e0c020" stroke-width="3" stroke-dasharray="3,2"/><path d="M24,24 L38,38 M18,28 L30,40 M28,18 L40,30" stroke="#e0c020" stroke-width="2.5"/></svg>
<svg style="position:absolute;left:2784px;top:164px;transform:scale(0.9545454545454546);transform-origin:center;" width="44" height="44" viewBox="0 0 44 44"><circle cx="22" cy="20" r="18" fill="#e8d040" stroke="#a88a10" stroke-width="2"/><ellipse cx="22" cy="20" rx="14" ry="7" fill="#d8d8c8"/><circle cx="22" cy="19" r="5" fill="#888"/></svg>
<svg style="position:absolute;left:2896px;top:171px;transform:scale(1.1363636363636365);transform-origin:center;" width="44" height="44" viewBox="0 0 44 44"><ellipse cx="22" cy="30" rx="16" ry="8" fill="#f0e0b0" stroke="#c8a040"/><path d="M14,28 L22,10 L30,26" stroke="#6a40a0" stroke-width="2" fill="#a0c0e0" opacity="0.8"/><circle cx="12" cy="10" r="4" fill="#f08020"/></svg>
<svg style="position:absolute;left:2983px;top:171px;transform:scale(1.1363636363636365);transform-origin:center;" width="44" height="44" viewBox="0 0 44 44"><defs><radialGradient id="g3" cx="0.35" cy="0.3" r="0.75"><stop offset="0" stop-color="#f8f8f8"/><stop offset="0.6" stop-color="#d8e0d8"/><stop offset="1" stop-color="#a8a8b0"/></radialGradient></defs><circle cx="22" cy="20" r="17" fill="url(#g3)"/><ellipse cx="22" cy="40" rx="12" ry="2" fill="#111" opacity="0.5"/></svg>
<svg style="position:absolute;left:3085px;top:164px;transform:scale(0.9545454545454546);transform-origin:center;" width="44" height="44" viewBox="0 0 44 44"><rect x="12" y="4" width="12" height="22" fill="#a8c8e8" opacity="0.9"/><ellipse cx="18" cy="4" rx="6" ry="3" fill="#d8e8f8"/><polygon points="12,24 24,20 40,34 28,38" fill="#7a9ac8" opacity="0.8"/></svg>
<svg style="position:absolute;left:3201px;top:171px;transform:scale(1.1363636363636365);transform-origin:center;" width="44" height="44" viewBox="0 0 44 44"><polygon points="6,4 14,4 14,30 6,24" fill="#8a6a20"/><polygon points="10,6 40,34 30,40 10,26" fill="#c8c840" opacity="0.7"/></svg>
<svg style="position:absolute;left:3322px;top:171px;transform:scale(1.1363636363636365);transform-origin:center;" width="44" height="44" viewBox="0 0 44 44"><circle cx="22" cy="18" r="13" fill="#c8e8e8" stroke="#6a8a90"/><rect x="17" y="30" width="10" height="10" fill="#aaa"/></svg>
<svg style="position:absolute;left:3453px;top:164px;transform:scale(0.9545454545454546);transform-origin:center;" width="44" height="44" viewBox="0 0 44 44"><rect x="2" y="10" width="40" height="22" rx="4" fill="#d8d8d8" stroke="#2a60b0" stroke-width="2"/><circle cx="12" cy="22" r="7" fill="#222" stroke="#aaa" stroke-width="2"/><circle cx="32" cy="22" r="7" fill="#222" stroke="#aaa" stroke-width="2"/><rect x="19" y="18" width="6" height="7" fill="#3a3" /></svg>
<svg style="position:absolute;left:3572px;top:171px;transform:scale(1.1363636363636365);transform-origin:center;" width="44" height="44" viewBox="0 0 44 44"><path d="M22,8 Q30,2 38,10 Q42,20 36,26" stroke="#5a7090" stroke-width="3" fill="none"/><polygon points="4,18 30,12 36,30 12,40" fill="#2a2a2a" stroke="#888" stroke-width="1.5"/><path d="M4,22 L34,30" stroke="#5a80c0" stroke-width="2"/></svg>
<div style="position:absolute;left:112px;top:246px;width:14px;height:1764px;background:#3f3f3f;border-left:1px solid #222;border-right:2px solid #262626;box-sizing:border-box;"></div>
<svg style="position:absolute;left:116px;top:1100px;" width="6" height="52" viewBox="0 0 6 52"><rect x="0" y="0" width="1.5" height="1.5" fill="#777"/><rect x="0" y="3" width="1.5" height="1.5" fill="#777"/><rect x="0" y="6" width="1.5" height="1.5" fill="#777"/><rect x="0" y="9" width="1.5" height="1.5" fill="#777"/><rect x="0" y="12" width="1.5" height="1.5" fill="#777"/><rect x="0" y="15" width="1.5" height="1.5" fill="#777"/><rect x="0" y="18" width="1.5" height="1.5" fill="#777"/><rect x="0" y="21" width="1.5" height="1.5" fill="#777"/><rect x="0" y="24" width="1.5" height="1.5" fill="#777"/><rect x="0" y="27" width="1.5" height="1.5" fill="#777"/><rect x="0" y="30" width="1.5" height="1.5" fill="#777"/><rect x="0" y="33" width="1.5" height="1.5" fill="#777"/><rect x="0" y="36" width="1.5" height="1.5" fill="#777"/><rect x="0" y="39" width="1.5" height="1.5" fill="#777"/><rect x="0" y="42" width="1.5" height="1.5" fill="#777"/><rect x="0" y="45" width="1.5" height="1.5" fill="#777"/><rect x="0" y="48" width="1.5" height="1.5" fill="#777"/><rect x="3" y="0" width="1.5" height="1.5" fill="#777"/><rect x="3" y="3" width="1.5" height="1.5" fill="#777"/><rect x="3" y="6" width="1.5" height="1.5" fill="#777"/><rect x="3" y="9" width="1.5" height="1.5" fill="#777"/><rect x="3" y="12" width="1.5" height="1.5" fill="#777"/><rect x="3" y="15" width="1.5" height="1.5" fill="#777"/><rect x="3" y="18" width="1.5" height="1.5" fill="#777"/><rect x="3" y="21" width="1.5" height="1.5" fill="#777"/><rect x="3" y="24" width="1.5" height="1.5" fill="#777"/><rect x="3" y="27" width="1.5" height="1.5" fill="#777"/><rect x="3" y="30" width="1.5" height="1.5" fill="#777"/><rect x="3" y="33" width="1.5" height="1.5" fill="#777"/><rect x="3" y="36" width="1.5" height="1.5" fill="#777"/><rect x="3" y="39" width="1.5" height="1.5" fill="#777"/><rect x="3" y="42" width="1.5" height="1.5" fill="#777"/><rect x="3" y="45" width="1.5" height="1.5" fill="#777"/><rect x="3" y="48" width="1.5" height="1.5" fill="#777"/></svg>
<div style="position:absolute;left:126px;top:246px;width:1896px;height:39px;background:#2c2c2c;"></div>
<div style="position:absolute;left:126px;top:247px;width:168px;height:38px;background:#474747;"></div>
<div style="position:absolute;top:253.5px;height:25px;line-height:25px;font-family:'Liberation Sans', sans-serif;font-size:19.5px;color:#d2d2d2;font-weight:normal;font-style:normal;white-space:pre;left:139.0px;">Scene View</div>
<svg style="position:absolute;left:269.5px;top:259.5px;" width="13" height="13" viewBox="0 0 13 13"><path d="M2,2 L11,11 M11,2 L2,11" stroke="#e6e6e6" stroke-width="3.2" stroke-linecap="round"/></svg>
<div style="position:absolute;left:294px;top:247px;width:214px;height:38px;background:#2e2e2e;border-right:2px solid #1c1c1c;box-sizing:border-box;"></div>
<div style="position:absolute;top:253.5px;height:25px;line-height:25px;font-family:'Liberation Sans', sans-serif;font-size:19.5px;color:#d2d2d2;font-weight:normal;font-style:normal;white-space:pre;left:307.0px;">Animation Editor</div>
<svg style="position:absolute;left:484.5px;top:259.5px;" width="13" height="13" viewBox="0 0 13 13"><path d="M2,2 L11,11 M11,2 L2,11" stroke="#e6e6e6" stroke-width="3.2" stroke-linecap="round"/></svg>
<div style="position:absolute;left:508px;top:247px;width:177px;height:38px;background:#2e2e2e;border-right:2px solid #1c1c1c;box-sizing:border-box;"></div>
<div style="position:absolute;top:253.5px;height:25px;line-height:25px;font-family:'Liberation Sans', sans-serif;font-size:19.5px;color:#d2d2d2;font-weight:normal;font-style:normal;white-space:pre;left:521.0px;">Render View</div>
<svg style="position:absolute;left:661.5px;top:259.5px;" width="13" height="13" viewBox="0 0 13 13"><path d="M2,2 L11,11 M11,2 L2,11" stroke="#e6e6e6" stroke-width="3.2" stroke-linecap="round"/></svg>
<div style="position:absolute;left:685px;top:247px;width:206px;height:38px;background:#2e2e2e;border-right:2px solid #1c1c1c;box-sizing:border-box;"></div>
<div style="position:absolute;top:253.5px;height:25px;line-height:25px;font-family:'Liberation Sans', sans-serif;font-size:19.5px;color:#d2d2d2;font-weight:normal;font-style:normal;white-space:pre;left:698.0px;">Composite View</div>
<svg style="position:absolute;left:867.5px;top:259.5px;" width="13" height="13" viewBox="0 0 13 13"><path d="M2,2 L11,11 M11,2 L2,11" stroke="#e6e6e6" stroke-width="3.2" stroke-linecap="round"/></svg>
<div style="position:absolute;left:891px;top:247px;width:199px;height:38px;background:#2e2e2e;border-right:2px solid #1c1c1c;box-sizing:border-box;"></div>
<div style="position:absolute;top:253.5px;height:25px;line-height:25px;font-family:'Liberation Sans', sans-serif;font-size:19.5px;color:#d2d2d2;font-weight:normal;font-style:normal;white-space:pre;left:904.0px;">Motion FX View</div>
<svg style="position:absolute;left:1066.5px;top:259.5px;" width="13" height="13" viewBox="0 0 13 13"><path d="M2,2 L11,11 M11,2 L2,11" stroke="#e6e6e6" stroke-width="3.2" stroke-linecap="round"/></svg>
<div style="position:absolute;left:1090px;top:247px;width:261px;height:38px;background:#2e2e2e;border-right:2px solid #1c1c1c;box-sizing:border-box;"></div>
<div style="position:absolute;top:253.5px;height:25px;line-height:25px;font-family:'Liberation Sans', sans-serif;font-size:19.5px;color:#d2d2d2;font-weight:normal;font-style:normal;white-space:pre;left:1103.0px;">Geometry Spreadsheet</div>
<svg style="position:absolute;left:1327.5px;top:259.5px;" width="13" height="13" viewBox="0 0 13 13"><path d="M2,2 L11,11 M11,2 L2,11" stroke="#e6e6e6" stroke-width="3.2" stroke-linecap="round"/></svg>
<div style="position:absolute;left:1364.0px;top:263.75px;width:20.0px;height:4.5px;background:#e8e8e8;"></div>
<div style="position:absolute;left:1371.75px;top:256.0px;width:4.5px;height:20.0px;background:#e8e8e8;"></div>
<div style="position:absolute;left:1956px;top:253px;width:24px;height:24px;background:#1c1c28;"></div>
<div style="position:absolute;left:1958px;top:257px;width:20px;height:19px;background:#d8d8d8;background:linear-gradient(135deg,#f0f0f0,#c8c8c8);"></div>
<svg style="position:absolute;left:1996.5px;top:259.5px;" width="15" height="11" viewBox="0 0 15 11"><polygon points="0,0 15,0 7.5,11" fill="#e0e0e0"/></svg>
<div style="position:absolute;left:126px;top:285px;width:1896px;height:68px;background:#3b3b3b;background:linear-gradient(#4a4a4a 0px,#404040 10px,#3b3b3b 30px);"></div>
<svg style="position:absolute;left:126px;top:295px;" width="48" height="46" viewBox="0 0 48 46"><polygon points="2,20 20,4 20,13 38,13 38,28 20,28 20,38" fill="#d0d0d0" stroke="#1c1c2c" stroke-width="3"/><polygon points="34,36 42,42 34,46" fill="#9a9a9a"/></svg>
<svg style="position:absolute;left:175px;top:295px;" width="48" height="46" viewBox="0 0 48 46"><polygon points="44,20 26,4 26,13 8,13 8,28 26,28 26,38" fill="#555" stroke="#333" stroke-width="2"/></svg>
<div style="position:absolute;left:234px;top:294px;width:1516px;height:48px;background:#2f2f2f;border:2px solid #141414;box-sizing:border-box;"></div>
<svg style="position:absolute;left:240px;top:299px;" width="38" height="36" viewBox="0 0 38 36"><rect x="2" y="14" width="34" height="21" fill="#4a5258" stroke="#1a1a1a"/><polygon points="2,12 34,4 35,9 3,17" fill="#e8e8e8" stroke="#222"/><path d="M8,10 L12,15 M16,8 L20,13 M24,6 L28,11" stroke="#111" stroke-width="3"/><path d="M6,24 L30,24 M6,29 L26,29" stroke="#d0d0d0" stroke-width="1.5"/></svg>
<div style="position:absolute;top:304.0px;height:28px;line-height:28px;font-family:'Liberation Sans', sans-serif;font-size:22px;color:#e0e0e0;font-weight:normal;font-style:normal;white-space:pre;left:285.0px;">obj</div>
<svg style="position:absolute;left:323px;top:296px;" width="14" height="44" viewBox="0 0 14 44"><path d="M2,0 L12,22.0 L2,44" stroke="#191919" stroke-width="2" fill="none"/></svg>
<svg style="position:absolute;left:340px;top:298px;" width="42" height="40" viewBox="0 0 42 40"><rect x="3" y="6" width="12" height="24" fill="#4a78c8"/><ellipse cx="9" cy="6" rx="6" ry="3" fill="#a0c0f0"/><circle cx="30" cy="20" r="10" fill="#d82020"/><polygon points="20,12 32,36 8,36" fill="#f0d020"/></svg>
<div style="position:absolute;top:303.5px;height:29px;line-height:29px;font-family:'Liberation Sans', sans-serif;font-size:22.5px;color:#e0e0e0;font-weight:normal;font-style:normal;white-space:pre;left:389.0px;">01_Create_Flower</div>
<div style="position:absolute;left:1730px;top:296px;width:18px;height:44px;background:#262626;"></div>
<svg style="position:absolute;left:1733.5px;top:312.5px;" width="11" height="11" viewBox="0 0 11 11"><polygon points="0,0 11,0 5.5,11" fill="#8a8a8a"/></svg>
<svg style="position:absolute;left:1765px;top:301px;" width="40" height="36" viewBox="0 0 40 36"><polygon points="0,18 14,14 14,22" fill="#e0e0e0"/><polygon points="14,6 22,10 30,12 30,24 22,26 14,30" fill="#d8d8d8" stroke="#333"/><rect x="30" y="8" width="6" height="20" fill="#bbb" stroke="#333"/></svg>
<svg style="position:absolute;left:1811px;top:298px;" width="42" height="42" viewBox="0 0 42 42"><circle cx="21" cy="21" r="19" fill="none" stroke="#5a80c0" stroke-width="3.5"/><circle cx="21" cy="21" r="12" fill="none" stroke="#4a70b0" stroke-width="2"/><circle cx="21" cy="21" r="5" fill="#3a70d0"/></svg>
<svg style="position:absolute;left:1876px;top:298px;" width="50" height="46" viewBox="0 0 50 46"><polygon points="4,10 20,2 36,8 22,16" fill="#d8e0e8" stroke="#222"/><polygon points="4,10 22,16 22,36 6,28" fill="#8a9aa8" stroke="#222"/><polygon points="22,16 36,8 34,28 22,36" fill="#6a7a88" stroke="#222"/><polygon points="34,36 48,36 41,44" fill="#8a8a8a"/></svg>
<svg style="position:absolute;left:1930px;top:298px;" width="52" height="46" viewBox="0 0 52 46"><circle cx="24" cy="20" r="13" fill="#3a70c0" stroke="#1a3a70" stroke-width="2"/><circle cx="20" cy="15" r="5" fill="#c0d8f8"/><polygon points="34,36 48,36 41,44" fill="#8a8a8a"/></svg>
<svg style="position:absolute;left:1976px;top:297px;" width="48" height="50" viewBox="0 0 48 50"><rect x="2" y="2" width="38" height="38" fill="#e8e8e8" stroke="#1c1c2c" stroke-width="3"/><polygon points="32,40 46,40 39,48" fill="#8a8a8a"/></svg>
<div style="position:absolute;left:126px;top:351px;width:1896px;height:2px;background:#1a1a1a;"></div>
<div style="position:absolute;left:126px;top:354px;width:20px;height:63px;background:#444;background:linear-gradient(#4e4e4e,#3a3a3a);border-right:2px solid #1a1a1a;box-sizing:border-box;"></div>
<svg style="position:absolute;left:129.5px;top:368.5px;" width="13" height="11" viewBox="0 0 13 11"><polygon points="0,11 13,11 6.5,0" fill="#0a0a0a"/></svg>
<div style="position:absolute;left:146px;top:353px;width:1876px;height:64px;background:#2f2f2f;border-top:2px solid #505050;box-sizing:border-box;"></div>
<div style="position:absolute;left:156.0px;top:370.0px;width:7.0px;height:7.0px;background:#e0e0e0;box-shadow:0 0 0 1px #1c1c2c;"></div>
<div style="position:absolute;left:168.5px;top:370.0px;width:7.0px;height:7.0px;background:#e0e0e0;box-shadow:0 0 0 1px #1c1c2c;"></div>
<div style="position:absolute;left:181.0px;top:370.0px;width:7.0px;height:7.0px;background:#e0e0e0;box-shadow:0 0 0 1px #1c1c2c;"></div>
<div style="position:absolute;left:156.0px;top:382.5px;width:7.0px;height:7.0px;background:#e0e0e0;box-shadow:0 0 0 1px #1c1c2c;"></div>
<div style="position:absolute;left:168.5px;top:382.5px;width:7.0px;height:7.0px;background:#e0e0e0;box-shadow:0 0 0 1px #1c1c2c;"></div>
<div style="position:absolute;left:181.0px;top:382.5px;width:7.0px;height:7.0px;background:#e0e0e0;box-shadow:0 0 0 1px #1c1c2c;"></div>
<div style="position:absolute;left:156.0px;top:395.0px;width:7.0px;height:7.0px;background:#e0e0e0;box-shadow:0 0 0 1px #1c1c2c;"></div>
<div style="position:absolute;left:168.5px;top:395.0px;width:7.0px;height:7.0px;background:#e0e0e0;box-shadow:0 0 0 1px #1c1c2c;"></div>
<div style="position:absolute;left:181.0px;top:395.0px;width:7.0px;height:7.0px;background:#e0e0e0;box-shadow:0 0 0 1px #1c1c2c;"></div>
<svg style="position:absolute;left:172px;top:398px;" width="16" height="10" viewBox="0 0 16 10"><polygon points="0,0 16,0 8,9" fill="#8a8a8a"/></svg>
<svg style="position:absolute;left:828px;top:367px;" width="50" height="40" viewBox="0 0 50 40"><ellipse cx="22" cy="26" rx="18" ry="8" fill="none" stroke="#3a70c0" stroke-width="4"/></svg>
<svg style="position:absolute;left:842px;top:362px;" width="30" height="40" viewBox="0 0 30 40"><polygon points="2,2 2,30 9,24 15,36 20,34 14,22 24,22" fill="#f0f0f0" stroke="#111" stroke-width="2"/></svg>
<svg style="position:absolute;left:870px;top:396px;" width="16" height="10" viewBox="0 0 16 10"><polygon points="0,0 16,0 8,9" fill="#8a8a8a"/></svg>
<svg style="position:absolute;left:892px;top:365px;" width="50" height="42" viewBox="0 0 50 42"><path d="M2,12 Q12,4 20,14 M24,26 Q32,34 40,28" stroke="#3a70c0" stroke-width="4" fill="none"/></svg>
<svg style="position:absolute;left:906px;top:362px;" width="30" height="40" viewBox="0 0 30 40"><polygon points="2,2 2,30 9,24 15,36 20,34 14,22 24,22" fill="#f0f0f0" stroke="#111" stroke-width="2"/></svg>
<svg style="position:absolute;left:935px;top:396px;" width="16" height="10" viewBox="0 0 16 10"><polygon points="0,0 16,0 8,9" fill="#8a8a8a"/></svg>
<svg style="position:absolute;left:958px;top:365px;" width="44" height="42" viewBox="0 0 44 42"><polygon points="2,14 28,6 30,18 4,26" fill="#333" stroke="#111"/><path d="M20,8 L22,18" stroke="#d02020" stroke-width="2"/><path d="M4,34 Q20,24 36,32" stroke="#3a70c0" stroke-width="4" fill="none"/></svg>
<svg style="position:absolute;left:982px;top:362px;" width="30" height="40" viewBox="0 0 30 40"><polygon points="2,2 2,30 9,24 15,36 20,34 14,22 24,22" fill="#f0f0f0" stroke="#111" stroke-width="2"/></svg>
<svg style="position:absolute;left:1000px;top:396px;" width="16" height="10" viewBox="0 0 16 10"><polygon points="0,0 16,0 8,9" fill="#8a8a8a"/></svg>
<div style="position:absolute;left:1013px;top:362px;width:2px;height:48px;background:#222;"></div>
<div style="position:absolute;left:1024px;top:362px;width:44px;height:47px;background:#5a7090;"></div>
<svg style="position:absolute;left:1026px;top:366px;" width="42" height="40" viewBox="0 0 42 40"><circle cx="12" cy="12" r="9" fill="#ddd" stroke="#333" stroke-width="1.5"/><circle cx="28" cy="10" r="9" fill="#ddd" stroke="#333" stroke-width="1.5"/><rect x="8" y="20" width="24" height="16" fill="#e0e0e0" stroke="#333"/><polygon points="2,26 8,22 8,34 2,36" fill="#ccc" stroke="#333"/></svg>
<svg style="position:absolute;left:1076px;top:366px;" width="42" height="40" viewBox="0 0 42 40"><rect x="3" y="3" width="28" height="24" rx="4" fill="#e8e8e8" stroke="#222" stroke-width="3"/><path d="M10,15 L24,15 M17,8 L17,22" stroke="#4a80d0" stroke-width="3"/><line x1="30" y1="26" x2="38" y2="34" stroke="#444" stroke-width="3"/></svg>
<div style="position:absolute;left:1128px;top:362px;width:2px;height:48px;background:#222;"></div>
<svg style="position:absolute;left:1141px;top:363px;" width="44" height="44" viewBox="0 0 44 44"><circle cx="22" cy="22" r="18" fill="none" stroke="#5a3030" stroke-width="4"/><rect x="12" y="17" width="20" height="10" fill="#444" stroke="#2a2a2a" stroke-width="2"/></svg>
<div style="position:absolute;left:1195px;top:362px;width:2px;height:48px;background:#222;"></div>
<svg style="position:absolute;left:1206px;top:362px;" width="46" height="46" viewBox="0 0 46 46"><path d="M2,8 Q12,4 20,10 M26,10 Q34,4 44,8" stroke="#e8e8e8" stroke-width="4" fill="none"/><circle cx="23" cy="28" r="15" fill="#e0e0e0" stroke="#444"/><circle cx="23" cy="29" r="7" fill="#2a80c0" stroke="#111" stroke-width="2"/><circle cx="8" cy="27" r="2" fill="#e02020"/></svg>
<svg style="position:absolute;left:1256px;top:362px;" width="42" height="44" viewBox="0 0 42 44"><rect x="2" y="2" width="38" height="40" fill="#eee" stroke="#1c1c2c" stroke-width="2"/><rect x="2" y="2" width="38" height="6" fill="#ccc"/><g transform="translate(21,25)" fill="#111"><circle r="8"/><rect x="-2.5" y="-13" width="5" height="8" transform="rotate(0)"/><rect x="-2.5" y="-13" width="5" height="8" transform="rotate(45)"/><rect x="-2.5" y="-13" width="5" height="8" transform="rotate(90)"/><rect x="-2.5" y="-13" width="5" height="8" transform="rotate(135)"/><rect x="-2.5" y="-13" width="5" height="8" transform="rotate(180)"/><rect x="-2.5" y="-13" width="5" height="8" transform="rotate(225)"/><rect x="-2.5" y="-13" width="5" height="8" transform="rotate(270)"/><rect x="-2.5" y="-13" width="5" height="8" transform="rotate(315)"/></g><circle cx="21" cy="25" r="3.5" fill="#eee"/></svg>
<svg style="position:absolute;left:1922px;top:360px;" width="56" height="50" viewBox="0 0 56 50"><circle cx="14" cy="9" r="7" fill="#3a60a0" stroke="#111"/><polygon points="6,26 22,26 18,17 10,17" fill="#ddd"/><circle cx="33" cy="16" r="7" fill="#3a60a0" stroke="#111"/><polygon points="25,33 41,33 37,24 29,24" fill="#ddd"/><circle cx="15" cy="30" r="7" fill="#3a60a0" stroke="#111"/><polygon points="7,47 23,47 19,38 11,38" fill="#ddd"/><polygon points="30,39 44,39 37,47" fill="#8a8a8a"/></svg>
<svg style="position:absolute;left:1977px;top:364px;" width="38" height="38" viewBox="0 0 38 38"><circle cx="19" cy="19" r="16" fill="#1e2a2a" stroke="#eee" stroke-width="3"/><text x="19" y="27" font-family="Liberation Sans" font-weight="bold" font-size="24" fill="#eee" text-anchor="middle">?</text></svg>
<div style="position:absolute;left:2022px;top:246px;width:13px;height:1764px;background:#3a3a3a;border-left:1px solid #2a2a2a;border-right:1px solid #2a2a2a;box-sizing:border-box;"></div>
<svg style="position:absolute;left:2024.5px;top:1060.0px;" width="7" height="12" viewBox="0 0 7 12"><polygon points="7,0 7,12 0,6.0" fill="#7a7a7a"/></svg>
<svg style="position:absolute;left:193px;top:417px;" width="1777" height="1593" viewBox="0 0 1777 1593"><rect x="0" y="0" width="1777" height="1593" fill="#000"/><defs><linearGradient id="haze" x1="0" y1="0" x2="0" y2="1"><stop offset="0" stop-color="#000" stop-opacity="0"/><stop offset="0.25" stop-color="#0b0e11" stop-opacity="1"/><stop offset="0.55" stop-color="#1b1f23" stop-opacity="1"/><stop offset="1" stop-color="#24282d" stop-opacity="1"/></linearGradient></defs><rect x="0" y="565" width="1777" height="40" fill="url(#haze)"/><defs><linearGradient id="haze2" x1="0" y1="0" x2="0" y2="1"><stop offset="0" stop-color="#24282d"/><stop offset="0.5" stop-color="#14171a"/><stop offset="1" stop-color="#000"/></linearGradient></defs><rect x="0" y="605" width="1777" height="78" fill="url(#haze2)"/><g><line x1="0" y1="1441.9" x2="1777" y2="1441.9" stroke="#464c53" stroke-width="1.5"/><line x1="0" y1="1261.0" x2="1777" y2="1261.0" stroke="#42484e" stroke-width="3.0"/><line x1="0" y1="1140.2" x2="1777" y2="1140.2" stroke="#464c53" stroke-width="1.5"/><line x1="0" y1="1053.9" x2="1777" y2="1053.9" stroke="#464c53" stroke-width="1.5"/><line x1="0" y1="989.1" x2="1777" y2="989.1" stroke="#464c53" stroke-width="1.5"/><line x1="0" y1="938.6" x2="1777" y2="938.6" stroke="#464c53" stroke-width="1.5"/><line x1="0" y1="898.2" x2="1777" y2="898.2" stroke="#42484e" stroke-width="3.0"/><line x1="0" y1="865.2" x2="1777" y2="865.2" stroke="#464c53" stroke-width="1.5"/><line x1="0" y1="837.6" x2="1777" y2="837.6" stroke="#464c53" stroke-width="1.5"/><line x1="0" y1="814.3" x2="1777" y2="814.3" stroke="#464c53" stroke-width="1.5"/><line x1="0" y1="794.3" x2="1777" y2="794.3" stroke="#464c53" stroke-width="1.5"/><line x1="0" y1="777.0" x2="1777" y2="777.0" stroke="#42484e" stroke-width="3.0"/><line x1="0" y1="761.8" x2="1777" y2="761.8" stroke="#464c53" stroke-width="1.5"/><line x1="0" y1="748.4" x2="1777" y2="748.4" stroke="#464c53" stroke-width="1.4620310535395769"/><line x1="0" y1="736.5" x2="1777" y2="736.5" stroke="#464c53" stroke-width="1.3808975834292285"/><line x1="0" y1="725.9" x2="1777" y2="725.9" stroke="#464c53" stroke-width="1.3082954654479164"/><line x1="0" y1="716.3" x2="1777" y2="716.3" stroke="#42484e" stroke-width="2.4858925597235695"/><line x1="0" y1="707.6" x2="1777" y2="707.6" stroke="#464c53" stroke-width="1.1838148829207078"/><line x1="0" y1="699.7" x2="1777" y2="699.7" stroke="#464c53" stroke-width="1.1300541672630846"/><line x1="0" y1="692.5" x2="1777" y2="692.5" stroke="#464c53" stroke-width="1.125"/><line x1="0" y1="685.9" x2="1777" y2="685.9" stroke="#464c53" stroke-width="1.125"/><line x1="0" y1="679.9" x2="1777" y2="679.9" stroke="#42484e" stroke-width="2.25"/><line x1="0" y1="674.3" x2="1777" y2="674.3" stroke="#454b52" stroke-width="1.125"/><line x1="0" y1="669.1" x2="1777" y2="669.1" stroke="#444a51" stroke-width="1.125"/><line x1="0" y1="664.3" x2="1777" y2="664.3" stroke="#43494f" stroke-width="1.125"/><line x1="0" y1="659.8" x2="1777" y2="659.8" stroke="#41474e" stroke-width="1.125"/><line x1="0" y1="655.6" x2="1777" y2="655.6" stroke="#3d4248" stroke-width="2.25"/><line x1="0" y1="651.7" x2="1777" y2="651.7" stroke="#3e444b" stroke-width="1.125"/><line x1="0" y1="648.0" x2="1777" y2="648.0" stroke="#3d4349" stroke-width="1.125"/><line x1="0" y1="644.5" x2="1777" y2="644.5" stroke="#3c4147" stroke-width="1.125"/><line x1="0" y1="641.3" x2="1777" y2="641.3" stroke="#3a4046" stroke-width="1.125"/><line x1="0" y1="638.2" x2="1777" y2="638.2" stroke="#373c41" stroke-width="2.25"/><line x1="0" y1="635.3" x2="1777" y2="635.3" stroke="#383d43" stroke-width="1.125"/><line x1="0" y1="632.6" x2="1777" y2="632.6" stroke="#373c42" stroke-width="1.125"/><line x1="0" y1="630.0" x2="1777" y2="630.0" stroke="#363b41" stroke-width="1.125"/><line x1="0" y1="627.5" x2="1777" y2="627.5" stroke="#34393f" stroke-width="1.125"/><line x1="0" y1="625.2" x2="1777" y2="625.2" stroke="#32363c" stroke-width="2.25"/><line x1="0" y1="623.0" x2="1777" y2="623.0" stroke="#32373d" stroke-width="1.125"/><line x1="0" y1="620.9" x2="1777" y2="620.9" stroke="#31363c" stroke-width="1.125"/><line x1="0" y1="618.8" x2="1777" y2="618.8" stroke="#30353b" stroke-width="1.125"/><line x1="0" y1="616.9" x2="1777" y2="616.9" stroke="#2f343a" stroke-width="1.125"/><line x1="0" y1="615.1" x2="1777" y2="615.1" stroke="#2d3237" stroke-width="2.25"/><line x1="0" y1="613.3" x2="1777" y2="613.3" stroke="#2e3238" stroke-width="1.125"/><line x1="0" y1="611.6" x2="1777" y2="611.6" stroke="#2d3137" stroke-width="1.125"/><line x1="0" y1="610.0" x2="1777" y2="610.0" stroke="#2c3136" stroke-width="1.125"/><line x1="0" y1="608.5" x2="1777" y2="608.5" stroke="#2b3035" stroke-width="1.125"/><line x1="0" y1="607.0" x2="1777" y2="607.0" stroke="#2a2e33" stroke-width="2.25"/><line x1="0" y1="605.5" x2="1777" y2="605.5" stroke="#2a2e34" stroke-width="1.125"/><line x1="0" y1="604.2" x2="1777" y2="604.2" stroke="#292d33" stroke-width="1.125"/><line x1="17.4" y1="604.0" x2="0.0" y2="605.4" stroke="#2e3238" stroke-width="0.60"/><line x1="35.6" y1="604.0" x2="0.0" y2="606.9" stroke="#2e3238" stroke-width="0.60"/><line x1="53.7" y1="604.0" x2="0.0" y2="608.5" stroke="#2e3238" stroke-width="0.60"/><line x1="71.9" y1="604.0" x2="0.0" y2="610.2" stroke="#2c3035" stroke-width="1.40"/><line x1="90.0" y1="604.0" x2="0.0" y2="611.9" stroke="#2e3238" stroke-width="0.60"/><line x1="108.2" y1="604.0" x2="0.0" y2="613.7" stroke="#2e3238" stroke-width="0.60"/><line x1="126.4" y1="604.0" x2="0.0" y2="615.6" stroke="#2e3238" stroke-width="0.60"/><line x1="144.5" y1="604.0" x2="0.0" y2="617.6" stroke="#2e3238" stroke-width="0.60"/><line x1="162.7" y1="604.0" x2="0.0" y2="619.7" stroke="#2c3035" stroke-width="1.40"/><line x1="180.8" y1="604.0" x2="0.0" y2="621.9" stroke="#2e3238" stroke-width="0.60"/><line x1="199.0" y1="604.0" x2="11.7" y2="623.0" stroke="#2e3238" stroke-width="0.60"/><line x1="11.7" y1="623.0" x2="0.0" y2="624.2" stroke="#373c42" stroke-width="0.72"/><line x1="217.2" y1="604.0" x2="34.8" y2="623.0" stroke="#2e3238" stroke-width="0.60"/><line x1="34.8" y1="623.0" x2="0.0" y2="626.6" stroke="#373c42" stroke-width="0.72"/><line x1="235.3" y1="604.0" x2="57.9" y2="623.0" stroke="#2e3238" stroke-width="0.60"/><line x1="57.9" y1="623.0" x2="0.0" y2="629.2" stroke="#373c42" stroke-width="0.72"/><line x1="253.5" y1="604.0" x2="81.0" y2="623.0" stroke="#2c3035" stroke-width="1.40"/><line x1="81.0" y1="623.0" x2="0.0" y2="631.9" stroke="#32383d" stroke-width="1.68"/><line x1="271.6" y1="604.0" x2="104.1" y2="623.0" stroke="#2e3238" stroke-width="0.60"/><line x1="104.1" y1="623.0" x2="0.0" y2="634.8" stroke="#373c42" stroke-width="0.72"/><line x1="289.8" y1="604.0" x2="127.1" y2="623.0" stroke="#2e3238" stroke-width="0.60"/><line x1="127.1" y1="623.0" x2="0.0" y2="637.9" stroke="#373c42" stroke-width="0.72"/><line x1="307.9" y1="604.0" x2="150.2" y2="623.0" stroke="#2e3238" stroke-width="0.60"/><line x1="150.2" y1="623.0" x2="0.0" y2="641.1" stroke="#373c42" stroke-width="0.72"/><line x1="326.1" y1="604.0" x2="173.3" y2="623.0" stroke="#2e3238" stroke-width="0.60"/><line x1="173.3" y1="623.0" x2="12.5" y2="643.0" stroke="#373c42" stroke-width="0.72"/><line x1="12.5" y1="643.0" x2="0.0" y2="644.6" stroke="#40454c" stroke-width="0.90"/><line x1="344.3" y1="604.0" x2="196.4" y2="623.0" stroke="#2c3035" stroke-width="1.40"/><line x1="196.4" y1="623.0" x2="40.8" y2="643.0" stroke="#32383d" stroke-width="1.68"/><line x1="40.8" y1="643.0" x2="0.0" y2="648.2" stroke="#393f45" stroke-width="2.10"/><line x1="362.4" y1="604.0" x2="219.5" y2="623.0" stroke="#2e3238" stroke-width="0.60"/><line x1="219.5" y1="623.0" x2="69.0" y2="643.0" stroke="#373c42" stroke-width="0.72"/><line x1="69.0" y1="643.0" x2="0.0" y2="652.2" stroke="#40454c" stroke-width="0.90"/><line x1="380.6" y1="604.0" x2="242.6" y2="623.0" stroke="#2e3238" stroke-width="0.60"/><line x1="242.6" y1="623.0" x2="97.3" y2="643.0" stroke="#373c42" stroke-width="0.72"/><line x1="97.3" y1="643.0" x2="0.0" y2="656.4" stroke="#40454c" stroke-width="0.90"/><line x1="398.7" y1="604.0" x2="265.7" y2="623.0" stroke="#2e3238" stroke-width="0.60"/><line x1="265.7" y1="623.0" x2="125.6" y2="643.0" stroke="#373c42" stroke-width="0.72"/><line x1="125.6" y1="643.0" x2="0.0" y2="660.9" stroke="#40454c" stroke-width="0.90"/><line x1="416.9" y1="604.0" x2="288.7" y2="623.0" stroke="#2e3238" stroke-width="0.60"/><line x1="288.7" y1="623.0" x2="153.9" y2="643.0" stroke="#373c42" stroke-width="0.72"/><line x1="153.9" y1="643.0" x2="0.0" y2="665.8" stroke="#40454c" stroke-width="0.90"/><line x1="435.0" y1="604.0" x2="311.8" y2="623.0" stroke="#2c3035" stroke-width="1.40"/><line x1="311.8" y1="623.0" x2="182.1" y2="643.0" stroke="#32383d" stroke-width="1.68"/><line x1="182.1" y1="643.0" x2="20.0" y2="668.0" stroke="#393f45" stroke-width="2.10"/><line x1="20.0" y1="668.0" x2="0.0" y2="671.1" stroke="#3e444a" stroke-width="2.52"/><line x1="453.2" y1="604.0" x2="334.9" y2="623.0" stroke="#2e3238" stroke-width="0.60"/><line x1="334.9" y1="623.0" x2="210.4" y2="643.0" stroke="#373c42" stroke-width="0.72"/><line x1="210.4" y1="643.0" x2="54.8" y2="668.0" stroke="#40454c" stroke-width="0.90"/><line x1="54.8" y1="668.0" x2="0.0" y2="676.8" stroke="#464c53" stroke-width="1.08"/><line x1="471.4" y1="604.0" x2="358.0" y2="623.0" stroke="#2e3238" stroke-width="0.60"/><line x1="358.0" y1="623.0" x2="238.7" y2="643.0" stroke="#373c42" stroke-width="0.72"/><line x1="238.7" y1="643.0" x2="89.5" y2="668.0" stroke="#40454c" stroke-width="0.90"/><line x1="89.5" y1="668.0" x2="0.0" y2="683.0" stroke="#464c53" stroke-width="1.08"/><line x1="489.5" y1="604.0" x2="381.1" y2="623.0" stroke="#2e3238" stroke-width="0.60"/><line x1="381.1" y1="623.0" x2="267.0" y2="643.0" stroke="#373c42" stroke-width="0.72"/><line x1="267.0" y1="643.0" x2="124.3" y2="668.0" stroke="#40454c" stroke-width="0.90"/><line x1="124.3" y1="668.0" x2="0.0" y2="689.8" stroke="#464c53" stroke-width="1.08"/><line x1="507.7" y1="604.0" x2="404.2" y2="623.0" stroke="#2e3238" stroke-width="0.60"/><line x1="404.2" y1="623.0" x2="295.2" y2="643.0" stroke="#373c42" stroke-width="0.72"/><line x1="295.2" y1="643.0" x2="159.0" y2="668.0" stroke="#40454c" stroke-width="0.90"/><line x1="159.0" y1="668.0" x2="0.0" y2="697.2" stroke="#464c53" stroke-width="1.08"/><line x1="525.8" y1="604.0" x2="427.3" y2="623.0" stroke="#2c3035" stroke-width="1.40"/><line x1="427.3" y1="623.0" x2="323.5" y2="643.0" stroke="#32383d" stroke-width="1.68"/><line x1="323.5" y1="643.0" x2="193.8" y2="668.0" stroke="#393f45" stroke-width="2.10"/><line x1="193.8" y1="668.0" x2="12.2" y2="703.0" stroke="#3e444a" stroke-width="2.52"/><line x1="12.2" y1="703.0" x2="0.0" y2="705.4" stroke="#3e444a" stroke-width="2.80"/><line x1="544.0" y1="604.0" x2="450.4" y2="623.0" stroke="#2e3238" stroke-width="0.60"/><line x1="450.4" y1="623.0" x2="351.8" y2="643.0" stroke="#373c42" stroke-width="0.72"/><line x1="351.8" y1="643.0" x2="228.6" y2="668.0" stroke="#40454c" stroke-width="0.90"/><line x1="228.6" y1="668.0" x2="56.1" y2="703.0" stroke="#464c53" stroke-width="1.08"/><line x1="56.1" y1="703.0" x2="0.0" y2="714.4" stroke="#464c53" stroke-width="1.20"/><line x1="562.2" y1="604.0" x2="473.4" y2="623.0" stroke="#2e3238" stroke-width="0.60"/><line x1="473.4" y1="623.0" x2="380.1" y2="643.0" stroke="#373c42" stroke-width="0.72"/><line x1="380.1" y1="643.0" x2="263.3" y2="668.0" stroke="#40454c" stroke-width="0.90"/><line x1="263.3" y1="668.0" x2="99.9" y2="703.0" stroke="#464c53" stroke-width="1.08"/><line x1="99.9" y1="703.0" x2="0.0" y2="724.4" stroke="#464c53" stroke-width="1.20"/><line x1="580.3" y1="604.0" x2="496.5" y2="623.0" stroke="#2e3238" stroke-width="0.60"/><line x1="496.5" y1="623.0" x2="408.3" y2="643.0" stroke="#373c42" stroke-width="0.72"/><line x1="408.3" y1="643.0" x2="298.1" y2="668.0" stroke="#40454c" stroke-width="0.90"/><line x1="298.1" y1="668.0" x2="143.7" y2="703.0" stroke="#464c53" stroke-width="1.08"/><line x1="143.7" y1="703.0" x2="0.0" y2="735.6" stroke="#464c53" stroke-width="1.20"/><line x1="598.5" y1="604.0" x2="519.6" y2="623.0" stroke="#2e3238" stroke-width="0.60"/><line x1="519.6" y1="623.0" x2="436.6" y2="643.0" stroke="#373c42" stroke-width="0.72"/><line x1="436.6" y1="643.0" x2="332.8" y2="668.0" stroke="#40454c" stroke-width="0.90"/><line x1="332.8" y1="668.0" x2="187.6" y2="703.0" stroke="#464c53" stroke-width="1.08"/><line x1="187.6" y1="703.0" x2="0.0" y2="748.2" stroke="#464c53" stroke-width="1.20"/><line x1="616.6" y1="604.0" x2="542.7" y2="623.0" stroke="#2c3035" stroke-width="1.40"/><line x1="542.7" y1="623.0" x2="464.9" y2="643.0" stroke="#32383d" stroke-width="1.68"/><line x1="464.9" y1="643.0" x2="367.6" y2="668.0" stroke="#393f45" stroke-width="2.10"/><line x1="367.6" y1="668.0" x2="231.4" y2="703.0" stroke="#3e444a" stroke-width="2.52"/><line x1="231.4" y1="703.0" x2="0.0" y2="762.5" stroke="#3e444a" stroke-width="2.80"/><line x1="634.8" y1="604.0" x2="565.8" y2="623.0" stroke="#2e3238" stroke-width="0.60"/><line x1="565.8" y1="623.0" x2="493.2" y2="643.0" stroke="#373c42" stroke-width="0.72"/><line x1="493.2" y1="643.0" x2="402.4" y2="668.0" stroke="#40454c" stroke-width="0.90"/><line x1="402.4" y1="668.0" x2="275.3" y2="703.0" stroke="#464c53" stroke-width="1.08"/><line x1="275.3" y1="703.0" x2="0.0" y2="778.8" stroke="#464c53" stroke-width="1.20"/><line x1="652.9" y1="604.0" x2="588.9" y2="623.0" stroke="#2e3238" stroke-width="0.60"/><line x1="588.9" y1="623.0" x2="521.4" y2="643.0" stroke="#373c42" stroke-width="0.72"/><line x1="521.4" y1="643.0" x2="437.1" y2="668.0" stroke="#40454c" stroke-width="0.90"/><line x1="437.1" y1="668.0" x2="319.1" y2="703.0" stroke="#464c53" stroke-width="1.08"/><line x1="319.1" y1="703.0" x2="0.0" y2="797.6" stroke="#464c53" stroke-width="1.20"/><line x1="671.1" y1="604.0" x2="612.0" y2="623.0" stroke="#2e3238" stroke-width="0.60"/><line x1="612.0" y1="623.0" x2="549.7" y2="643.0" stroke="#373c42" stroke-width="0.72"/><line x1="549.7" y1="643.0" x2="471.9" y2="668.0" stroke="#40454c" stroke-width="0.90"/><line x1="471.9" y1="668.0" x2="362.9" y2="703.0" stroke="#464c53" stroke-width="1.08"/><line x1="362.9" y1="703.0" x2="0.0" y2="819.6" stroke="#464c53" stroke-width="1.20"/><line x1="689.3" y1="604.0" x2="635.0" y2="623.0" stroke="#2e3238" stroke-width="0.60"/><line x1="635.0" y1="623.0" x2="578.0" y2="643.0" stroke="#373c42" stroke-width="0.72"/><line x1="578.0" y1="643.0" x2="506.6" y2="668.0" stroke="#40454c" stroke-width="0.90"/><line x1="506.6" y1="668.0" x2="406.8" y2="703.0" stroke="#464c53" stroke-width="1.08"/><line x1="406.8" y1="703.0" x2="0.0" y2="845.6" stroke="#464c53" stroke-width="1.20"/><line x1="707.4" y1="604.0" x2="658.1" y2="623.0" stroke="#2c3035" stroke-width="1.40"/><line x1="658.1" y1="623.0" x2="606.3" y2="643.0" stroke="#32383d" stroke-width="1.68"/><line x1="606.3" y1="643.0" x2="541.4" y2="668.0" stroke="#393f45" stroke-width="2.10"/><line x1="541.4" y1="668.0" x2="450.6" y2="703.0" stroke="#3e444a" stroke-width="2.52"/><line x1="450.6" y1="703.0" x2="0.0" y2="876.7" stroke="#3e444a" stroke-width="2.80"/><line x1="725.6" y1="604.0" x2="681.2" y2="623.0" stroke="#2e3238" stroke-width="0.60"/><line x1="681.2" y1="623.0" x2="634.5" y2="643.0" stroke="#373c42" stroke-width="0.72"/><line x1="634.5" y1="643.0" x2="576.2" y2="668.0" stroke="#40454c" stroke-width="0.90"/><line x1="576.2" y1="668.0" x2="494.5" y2="703.0" stroke="#464c53" stroke-width="1.08"/><line x1="494.5" y1="703.0" x2="0.0" y2="914.8" stroke="#464c53" stroke-width="1.20"/><line x1="743.7" y1="604.0" x2="704.3" y2="623.0" stroke="#2e3238" stroke-width="0.60"/><line x1="704.3" y1="623.0" x2="662.8" y2="643.0" stroke="#373c42" stroke-width="0.72"/><line x1="662.8" y1="643.0" x2="610.9" y2="668.0" stroke="#40454c" stroke-width="0.90"/><line x1="610.9" y1="668.0" x2="538.3" y2="703.0" stroke="#464c53" stroke-width="1.08"/><line x1="538.3" y1="703.0" x2="0.0" y2="962.4" stroke="#464c53" stroke-width="1.20"/><line x1="761.9" y1="604.0" x2="727.4" y2="623.0" stroke="#2e3238" stroke-width="0.60"/><line x1="727.4" y1="623.0" x2="691.1" y2="643.0" stroke="#373c42" stroke-width="0.72"/><line x1="691.1" y1="643.0" x2="645.7" y2="668.0" stroke="#40454c" stroke-width="0.90"/><line x1="645.7" y1="668.0" x2="582.1" y2="703.0" stroke="#464c53" stroke-width="1.08"/><line x1="582.1" y1="703.0" x2="0.0" y2="1023.6" stroke="#464c53" stroke-width="1.20"/><line x1="780.1" y1="604.0" x2="750.5" y2="623.0" stroke="#2e3238" stroke-width="0.60"/><line x1="750.5" y1="623.0" x2="719.4" y2="643.0" stroke="#373c42" stroke-width="0.72"/><line x1="719.4" y1="643.0" x2="680.4" y2="668.0" stroke="#40454c" stroke-width="0.90"/><line x1="680.4" y1="668.0" x2="626.0" y2="703.0" stroke="#464c53" stroke-width="1.08"/><line x1="626.0" y1="703.0" x2="0.0" y2="1105.2" stroke="#464c53" stroke-width="1.20"/><line x1="798.2" y1="604.0" x2="773.6" y2="623.0" stroke="#2c3035" stroke-width="1.40"/><line x1="773.6" y1="623.0" x2="747.6" y2="643.0" stroke="#32383d" stroke-width="1.68"/><line x1="747.6" y1="643.0" x2="715.2" y2="668.0" stroke="#393f45" stroke-width="2.10"/><line x1="715.2" y1="668.0" x2="669.8" y2="703.0" stroke="#3e444a" stroke-width="2.52"/><line x1="669.8" y1="703.0" x2="0.0" y2="1219.4" stroke="#3e444a" stroke-width="2.80"/><line x1="816.4" y1="604.0" x2="796.7" y2="623.0" stroke="#2e3238" stroke-width="0.60"/><line x1="796.7" y1="623.0" x2="775.9" y2="643.0" stroke="#373c42" stroke-width="0.72"/><line x1="775.9" y1="643.0" x2="750.0" y2="668.0" stroke="#40454c" stroke-width="0.90"/><line x1="750.0" y1="668.0" x2="713.6" y2="703.0" stroke="#464c53" stroke-width="1.08"/><line x1="713.6" y1="703.0" x2="0.0" y2="1390.8" stroke="#464c53" stroke-width="1.20"/><line x1="834.5" y1="604.0" x2="819.7" y2="623.0" stroke="#2e3238" stroke-width="0.60"/><line x1="819.7" y1="623.0" x2="804.2" y2="643.0" stroke="#373c42" stroke-width="0.72"/><line x1="804.2" y1="643.0" x2="784.7" y2="668.0" stroke="#40454c" stroke-width="0.90"/><line x1="784.7" y1="668.0" x2="757.5" y2="703.0" stroke="#464c53" stroke-width="1.08"/><line x1="757.5" y1="703.0" x2="64.9" y2="1593.0" stroke="#464c53" stroke-width="1.20"/><line x1="852.7" y1="604.0" x2="842.8" y2="623.0" stroke="#2e3238" stroke-width="0.60"/><line x1="842.8" y1="623.0" x2="832.5" y2="643.0" stroke="#373c42" stroke-width="0.72"/><line x1="832.5" y1="643.0" x2="819.5" y2="668.0" stroke="#40454c" stroke-width="0.90"/><line x1="819.5" y1="668.0" x2="801.3" y2="703.0" stroke="#464c53" stroke-width="1.08"/><line x1="801.3" y1="703.0" x2="339.6" y2="1593.0" stroke="#464c53" stroke-width="1.20"/><line x1="870.8" y1="604.0" x2="865.9" y2="623.0" stroke="#2e3238" stroke-width="0.60"/><line x1="865.9" y1="623.0" x2="860.7" y2="643.0" stroke="#373c42" stroke-width="0.72"/><line x1="860.7" y1="643.0" x2="854.2" y2="668.0" stroke="#40454c" stroke-width="0.90"/><line x1="854.2" y1="668.0" x2="845.2" y2="703.0" stroke="#464c53" stroke-width="1.08"/><line x1="845.2" y1="703.0" x2="614.3" y2="1593.0" stroke="#464c53" stroke-width="1.20"/><line x1="907.2" y1="604.0" x2="912.1" y2="623.0" stroke="#2e3238" stroke-width="0.60"/><line x1="912.1" y1="623.0" x2="917.3" y2="643.0" stroke="#373c42" stroke-width="0.72"/><line x1="917.3" y1="643.0" x2="923.8" y2="668.0" stroke="#40454c" stroke-width="0.90"/><line x1="923.8" y1="668.0" x2="932.8" y2="703.0" stroke="#464c53" stroke-width="1.08"/><line x1="932.8" y1="703.0" x2="1163.7" y2="1593.0" stroke="#464c53" stroke-width="1.20"/><line x1="925.3" y1="604.0" x2="935.2" y2="623.0" stroke="#2e3238" stroke-width="0.60"/><line x1="935.2" y1="623.0" x2="945.5" y2="643.0" stroke="#373c42" stroke-width="0.72"/><line x1="945.5" y1="643.0" x2="958.5" y2="668.0" stroke="#40454c" stroke-width="0.90"/><line x1="958.5" y1="668.0" x2="976.7" y2="703.0" stroke="#464c53" stroke-width="1.08"/><line x1="976.7" y1="703.0" x2="1438.4" y2="1593.0" stroke="#464c53" stroke-width="1.20"/><line x1="943.5" y1="604.0" x2="958.3" y2="623.0" stroke="#2e3238" stroke-width="0.60"/><line x1="958.3" y1="623.0" x2="973.8" y2="643.0" stroke="#373c42" stroke-width="0.72"/><line x1="973.8" y1="643.0" x2="993.3" y2="668.0" stroke="#40454c" stroke-width="0.90"/><line x1="993.3" y1="668.0" x2="1020.5" y2="703.0" stroke="#464c53" stroke-width="1.08"/><line x1="1020.5" y1="703.0" x2="1713.1" y2="1593.0" stroke="#464c53" stroke-width="1.20"/><line x1="961.6" y1="604.0" x2="981.3" y2="623.0" stroke="#2e3238" stroke-width="0.60"/><line x1="981.3" y1="623.0" x2="1002.1" y2="643.0" stroke="#373c42" stroke-width="0.72"/><line x1="1002.1" y1="643.0" x2="1028.0" y2="668.0" stroke="#40454c" stroke-width="0.90"/><line x1="1028.0" y1="668.0" x2="1064.4" y2="703.0" stroke="#464c53" stroke-width="1.08"/><line x1="1064.4" y1="703.0" x2="1777.0" y2="1389.8" stroke="#464c53" stroke-width="1.20"/><line x1="979.8" y1="604.0" x2="1004.4" y2="623.0" stroke="#2c3035" stroke-width="1.40"/><line x1="1004.4" y1="623.0" x2="1030.4" y2="643.0" stroke="#32383d" stroke-width="1.68"/><line x1="1030.4" y1="643.0" x2="1062.8" y2="668.0" stroke="#393f45" stroke-width="2.10"/><line x1="1062.8" y1="668.0" x2="1108.2" y2="703.0" stroke="#3e444a" stroke-width="2.52"/><line x1="1108.2" y1="703.0" x2="1777.0" y2="1218.7" stroke="#3e444a" stroke-width="2.80"/><line x1="997.9" y1="604.0" x2="1027.5" y2="623.0" stroke="#2e3238" stroke-width="0.60"/><line x1="1027.5" y1="623.0" x2="1058.6" y2="643.0" stroke="#373c42" stroke-width="0.72"/><line x1="1058.6" y1="643.0" x2="1097.6" y2="668.0" stroke="#40454c" stroke-width="0.90"/><line x1="1097.6" y1="668.0" x2="1152.0" y2="703.0" stroke="#464c53" stroke-width="1.08"/><line x1="1152.0" y1="703.0" x2="1777.0" y2="1104.5" stroke="#464c53" stroke-width="1.20"/><line x1="1016.1" y1="604.0" x2="1050.6" y2="623.0" stroke="#2e3238" stroke-width="0.60"/><line x1="1050.6" y1="623.0" x2="1086.9" y2="643.0" stroke="#373c42" stroke-width="0.72"/><line x1="1086.9" y1="643.0" x2="1132.3" y2="668.0" stroke="#40454c" stroke-width="0.90"/><line x1="1132.3" y1="668.0" x2="1195.9" y2="703.0" stroke="#464c53" stroke-width="1.08"/><line x1="1195.9" y1="703.0" x2="1777.0" y2="1023.0" stroke="#464c53" stroke-width="1.20"/><line x1="1034.3" y1="604.0" x2="1073.7" y2="623.0" stroke="#2e3238" stroke-width="0.60"/><line x1="1073.7" y1="623.0" x2="1115.2" y2="643.0" stroke="#373c42" stroke-width="0.72"/><line x1="1115.2" y1="643.0" x2="1167.1" y2="668.0" stroke="#40454c" stroke-width="0.90"/><line x1="1167.1" y1="668.0" x2="1239.7" y2="703.0" stroke="#464c53" stroke-width="1.08"/><line x1="1239.7" y1="703.0" x2="1777.0" y2="961.9" stroke="#464c53" stroke-width="1.20"/><line x1="1052.4" y1="604.0" x2="1096.8" y2="623.0" stroke="#2e3238" stroke-width="0.60"/><line x1="1096.8" y1="623.0" x2="1143.5" y2="643.0" stroke="#373c42" stroke-width="0.72"/><line x1="1143.5" y1="643.0" x2="1201.8" y2="668.0" stroke="#40454c" stroke-width="0.90"/><line x1="1201.8" y1="668.0" x2="1283.5" y2="703.0" stroke="#464c53" stroke-width="1.08"/><line x1="1283.5" y1="703.0" x2="1777.0" y2="914.4" stroke="#464c53" stroke-width="1.20"/><line x1="1070.6" y1="604.0" x2="1119.9" y2="623.0" stroke="#2c3035" stroke-width="1.40"/><line x1="1119.9" y1="623.0" x2="1171.7" y2="643.0" stroke="#32383d" stroke-width="1.68"/><line x1="1171.7" y1="643.0" x2="1236.6" y2="668.0" stroke="#393f45" stroke-width="2.10"/><line x1="1236.6" y1="668.0" x2="1327.4" y2="703.0" stroke="#3e444a" stroke-width="2.52"/><line x1="1327.4" y1="703.0" x2="1777.0" y2="876.3" stroke="#3e444a" stroke-width="2.80"/><line x1="1088.7" y1="604.0" x2="1143.0" y2="623.0" stroke="#2e3238" stroke-width="0.60"/><line x1="1143.0" y1="623.0" x2="1200.0" y2="643.0" stroke="#373c42" stroke-width="0.72"/><line x1="1200.0" y1="643.0" x2="1271.4" y2="668.0" stroke="#40454c" stroke-width="0.90"/><line x1="1271.4" y1="668.0" x2="1371.2" y2="703.0" stroke="#464c53" stroke-width="1.08"/><line x1="1371.2" y1="703.0" x2="1777.0" y2="845.2" stroke="#464c53" stroke-width="1.20"/><line x1="1106.9" y1="604.0" x2="1166.0" y2="623.0" stroke="#2e3238" stroke-width="0.60"/><line x1="1166.0" y1="623.0" x2="1228.3" y2="643.0" stroke="#373c42" stroke-width="0.72"/><line x1="1228.3" y1="643.0" x2="1306.1" y2="668.0" stroke="#40454c" stroke-width="0.90"/><line x1="1306.1" y1="668.0" x2="1415.1" y2="703.0" stroke="#464c53" stroke-width="1.08"/><line x1="1415.1" y1="703.0" x2="1777.0" y2="819.3" stroke="#464c53" stroke-width="1.20"/><line x1="1125.1" y1="604.0" x2="1189.1" y2="623.0" stroke="#2e3238" stroke-width="0.60"/><line x1="1189.1" y1="623.0" x2="1256.6" y2="643.0" stroke="#373c42" stroke-width="0.72"/><line x1="1256.6" y1="643.0" x2="1340.9" y2="668.0" stroke="#40454c" stroke-width="0.90"/><line x1="1340.9" y1="668.0" x2="1458.9" y2="703.0" stroke="#464c53" stroke-width="1.08"/><line x1="1458.9" y1="703.0" x2="1777.0" y2="797.3" stroke="#464c53" stroke-width="1.20"/><line x1="1143.2" y1="604.0" x2="1212.2" y2="623.0" stroke="#2e3238" stroke-width="0.60"/><line x1="1212.2" y1="623.0" x2="1284.8" y2="643.0" stroke="#373c42" stroke-width="0.72"/><line x1="1284.8" y1="643.0" x2="1375.6" y2="668.0" stroke="#40454c" stroke-width="0.90"/><line x1="1375.6" y1="668.0" x2="1502.7" y2="703.0" stroke="#464c53" stroke-width="1.08"/><line x1="1502.7" y1="703.0" x2="1777.0" y2="778.5" stroke="#464c53" stroke-width="1.20"/><line x1="1161.4" y1="604.0" x2="1235.3" y2="623.0" stroke="#2c3035" stroke-width="1.40"/><line x1="1235.3" y1="623.0" x2="1313.1" y2="643.0" stroke="#32383d" stroke-width="1.68"/><line x1="1313.1" y1="643.0" x2="1410.4" y2="668.0" stroke="#393f45" stroke-width="2.10"/><line x1="1410.4" y1="668.0" x2="1546.6" y2="703.0" stroke="#3e444a" stroke-width="2.52"/><line x1="1546.6" y1="703.0" x2="1777.0" y2="762.2" stroke="#3e444a" stroke-width="2.80"/><line x1="1179.5" y1="604.0" x2="1258.4" y2="623.0" stroke="#2e3238" stroke-width="0.60"/><line x1="1258.4" y1="623.0" x2="1341.4" y2="643.0" stroke="#373c42" stroke-width="0.72"/><line x1="1341.4" y1="643.0" x2="1445.2" y2="668.0" stroke="#40454c" stroke-width="0.90"/><line x1="1445.2" y1="668.0" x2="1590.4" y2="703.0" stroke="#464c53" stroke-width="1.08"/><line x1="1590.4" y1="703.0" x2="1777.0" y2="748.0" stroke="#464c53" stroke-width="1.20"/><line x1="1197.7" y1="604.0" x2="1281.5" y2="623.0" stroke="#2e3238" stroke-width="0.60"/><line x1="1281.5" y1="623.0" x2="1369.7" y2="643.0" stroke="#373c42" stroke-width="0.72"/><line x1="1369.7" y1="643.0" x2="1479.9" y2="668.0" stroke="#40454c" stroke-width="0.90"/><line x1="1479.9" y1="668.0" x2="1634.3" y2="703.0" stroke="#464c53" stroke-width="1.08"/><line x1="1634.3" y1="703.0" x2="1777.0" y2="735.4" stroke="#464c53" stroke-width="1.20"/><line x1="1215.8" y1="604.0" x2="1304.6" y2="623.0" stroke="#2e3238" stroke-width="0.60"/><line x1="1304.6" y1="623.0" x2="1397.9" y2="643.0" stroke="#373c42" stroke-width="0.72"/><line x1="1397.9" y1="643.0" x2="1514.7" y2="668.0" stroke="#40454c" stroke-width="0.90"/><line x1="1514.7" y1="668.0" x2="1678.1" y2="703.0" stroke="#464c53" stroke-width="1.08"/><line x1="1678.1" y1="703.0" x2="1777.0" y2="724.2" stroke="#464c53" stroke-width="1.20"/><line x1="1234.0" y1="604.0" x2="1327.6" y2="623.0" stroke="#2e3238" stroke-width="0.60"/><line x1="1327.6" y1="623.0" x2="1426.2" y2="643.0" stroke="#373c42" stroke-width="0.72"/><line x1="1426.2" y1="643.0" x2="1549.4" y2="668.0" stroke="#40454c" stroke-width="0.90"/><line x1="1549.4" y1="668.0" x2="1721.9" y2="703.0" stroke="#464c53" stroke-width="1.08"/><line x1="1721.9" y1="703.0" x2="1777.0" y2="714.2" stroke="#464c53" stroke-width="1.20"/><line x1="1252.2" y1="604.0" x2="1350.7" y2="623.0" stroke="#2c3035" stroke-width="1.40"/><line x1="1350.7" y1="623.0" x2="1454.5" y2="643.0" stroke="#32383d" stroke-width="1.68"/><line x1="1454.5" y1="643.0" x2="1584.2" y2="668.0" stroke="#393f45" stroke-width="2.10"/><line x1="1584.2" y1="668.0" x2="1765.8" y2="703.0" stroke="#3e444a" stroke-width="2.52"/><line x1="1765.8" y1="703.0" x2="1777.0" y2="705.2" stroke="#3e444a" stroke-width="2.80"/><line x1="1270.3" y1="604.0" x2="1373.8" y2="623.0" stroke="#2e3238" stroke-width="0.60"/><line x1="1373.8" y1="623.0" x2="1482.8" y2="643.0" stroke="#373c42" stroke-width="0.72"/><line x1="1482.8" y1="643.0" x2="1619.0" y2="668.0" stroke="#40454c" stroke-width="0.90"/><line x1="1619.0" y1="668.0" x2="1777.0" y2="697.0" stroke="#464c53" stroke-width="1.08"/><line x1="1288.5" y1="604.0" x2="1396.9" y2="623.0" stroke="#2e3238" stroke-width="0.60"/><line x1="1396.9" y1="623.0" x2="1511.0" y2="643.0" stroke="#373c42" stroke-width="0.72"/><line x1="1511.0" y1="643.0" x2="1653.7" y2="668.0" stroke="#40454c" stroke-width="0.90"/><line x1="1653.7" y1="668.0" x2="1777.0" y2="689.6" stroke="#464c53" stroke-width="1.08"/><line x1="1306.6" y1="604.0" x2="1420.0" y2="623.0" stroke="#2e3238" stroke-width="0.60"/><line x1="1420.0" y1="623.0" x2="1539.3" y2="643.0" stroke="#373c42" stroke-width="0.72"/><line x1="1539.3" y1="643.0" x2="1688.5" y2="668.0" stroke="#40454c" stroke-width="0.90"/><line x1="1688.5" y1="668.0" x2="1777.0" y2="682.8" stroke="#464c53" stroke-width="1.08"/><line x1="1324.8" y1="604.0" x2="1443.1" y2="623.0" stroke="#2e3238" stroke-width="0.60"/><line x1="1443.1" y1="623.0" x2="1567.6" y2="643.0" stroke="#373c42" stroke-width="0.72"/><line x1="1567.6" y1="643.0" x2="1723.2" y2="668.0" stroke="#40454c" stroke-width="0.90"/><line x1="1723.2" y1="668.0" x2="1777.0" y2="676.6" stroke="#464c53" stroke-width="1.08"/><line x1="1343.0" y1="604.0" x2="1466.2" y2="623.0" stroke="#2c3035" stroke-width="1.40"/><line x1="1466.2" y1="623.0" x2="1595.9" y2="643.0" stroke="#32383d" stroke-width="1.68"/><line x1="1595.9" y1="643.0" x2="1758.0" y2="668.0" stroke="#393f45" stroke-width="2.10"/><line x1="1758.0" y1="668.0" x2="1777.0" y2="670.9" stroke="#3e444a" stroke-width="2.52"/><line x1="1361.1" y1="604.0" x2="1489.3" y2="623.0" stroke="#2e3238" stroke-width="0.60"/><line x1="1489.3" y1="623.0" x2="1624.1" y2="643.0" stroke="#373c42" stroke-width="0.72"/><line x1="1624.1" y1="643.0" x2="1777.0" y2="665.7" stroke="#40454c" stroke-width="0.90"/><line x1="1379.3" y1="604.0" x2="1512.3" y2="623.0" stroke="#2e3238" stroke-width="0.60"/><line x1="1512.3" y1="623.0" x2="1652.4" y2="643.0" stroke="#373c42" stroke-width="0.72"/><line x1="1652.4" y1="643.0" x2="1777.0" y2="660.8" stroke="#40454c" stroke-width="0.90"/><line x1="1397.4" y1="604.0" x2="1535.4" y2="623.0" stroke="#2e3238" stroke-width="0.60"/><line x1="1535.4" y1="623.0" x2="1680.7" y2="643.0" stroke="#373c42" stroke-width="0.72"/><line x1="1680.7" y1="643.0" x2="1777.0" y2="656.3" stroke="#40454c" stroke-width="0.90"/><line x1="1415.6" y1="604.0" x2="1558.5" y2="623.0" stroke="#2e3238" stroke-width="0.60"/><line x1="1558.5" y1="623.0" x2="1709.0" y2="643.0" stroke="#373c42" stroke-width="0.72"/><line x1="1709.0" y1="643.0" x2="1777.0" y2="652.0" stroke="#40454c" stroke-width="0.90"/><line x1="1433.7" y1="604.0" x2="1581.6" y2="623.0" stroke="#2c3035" stroke-width="1.40"/><line x1="1581.6" y1="623.0" x2="1737.2" y2="643.0" stroke="#32383d" stroke-width="1.68"/><line x1="1737.2" y1="643.0" x2="1777.0" y2="648.1" stroke="#393f45" stroke-width="2.10"/><line x1="1451.9" y1="604.0" x2="1604.7" y2="623.0" stroke="#2e3238" stroke-width="0.60"/><line x1="1604.7" y1="623.0" x2="1765.5" y2="643.0" stroke="#373c42" stroke-width="0.72"/><line x1="1765.5" y1="643.0" x2="1777.0" y2="644.4" stroke="#40454c" stroke-width="0.90"/><line x1="1470.1" y1="604.0" x2="1627.8" y2="623.0" stroke="#2e3238" stroke-width="0.60"/><line x1="1627.8" y1="623.0" x2="1777.0" y2="641.0" stroke="#373c42" stroke-width="0.72"/><line x1="1488.2" y1="604.0" x2="1650.9" y2="623.0" stroke="#2e3238" stroke-width="0.60"/><line x1="1650.9" y1="623.0" x2="1777.0" y2="637.7" stroke="#373c42" stroke-width="0.72"/><line x1="1506.4" y1="604.0" x2="1673.9" y2="623.0" stroke="#2e3238" stroke-width="0.60"/><line x1="1673.9" y1="623.0" x2="1777.0" y2="634.7" stroke="#373c42" stroke-width="0.72"/><line x1="1524.5" y1="604.0" x2="1697.0" y2="623.0" stroke="#2c3035" stroke-width="1.40"/><line x1="1697.0" y1="623.0" x2="1777.0" y2="631.8" stroke="#32383d" stroke-width="1.68"/><line x1="1542.7" y1="604.0" x2="1720.1" y2="623.0" stroke="#2e3238" stroke-width="0.60"/><line x1="1720.1" y1="623.0" x2="1777.0" y2="629.1" stroke="#373c42" stroke-width="0.72"/><line x1="1560.8" y1="604.0" x2="1743.2" y2="623.0" stroke="#2e3238" stroke-width="0.60"/><line x1="1743.2" y1="623.0" x2="1777.0" y2="626.5" stroke="#373c42" stroke-width="0.72"/><line x1="1579.0" y1="604.0" x2="1766.3" y2="623.0" stroke="#2e3238" stroke-width="0.60"/><line x1="1766.3" y1="623.0" x2="1777.0" y2="624.1" stroke="#373c42" stroke-width="0.72"/><line x1="1597.2" y1="604.0" x2="1777.0" y2="621.8" stroke="#2e3238" stroke-width="0.60"/><line x1="1615.3" y1="604.0" x2="1777.0" y2="619.6" stroke="#2c3035" stroke-width="1.40"/><line x1="1633.5" y1="604.0" x2="1777.0" y2="617.5" stroke="#2e3238" stroke-width="0.60"/><line x1="1651.6" y1="604.0" x2="1777.0" y2="615.5" stroke="#2e3238" stroke-width="0.60"/><line x1="1669.8" y1="604.0" x2="1777.0" y2="613.6" stroke="#2e3238" stroke-width="0.60"/><line x1="1688.0" y1="604.0" x2="1777.0" y2="611.8" stroke="#2e3238" stroke-width="0.60"/><line x1="1706.1" y1="604.0" x2="1777.0" y2="610.1" stroke="#2c3035" stroke-width="1.40"/><line x1="1724.3" y1="604.0" x2="1777.0" y2="608.4" stroke="#2e3238" stroke-width="0.60"/><line x1="1742.4" y1="604.0" x2="1777.0" y2="606.8" stroke="#2e3238" stroke-width="0.60"/><line x1="1760.6" y1="604.0" x2="1777.0" y2="605.3" stroke="#2e3238" stroke-width="0.60"/></g><defs><linearGradient id="fog" x1="0" y1="0" x2="0" y2="1"><stop offset="0" stop-color="#23272c" stop-opacity="0.6"/><stop offset="1" stop-color="#23272c" stop-opacity="0"/></linearGradient></defs><line x1="889.0" y1="1253" x2="887.0" y2="1593" stroke="#3c4248" stroke-width="3"/><line x1="459" y1="0" x2="889" y2="210" stroke="#0808c8" stroke-width="1.7"/><line x1="0" y1="239" x2="889" y2="290" stroke="#d00808" stroke-width="1.7"/><line x1="0" y1="366" x2="889" y2="409" stroke="#0808c8" stroke-width="1.7"/><line x1="889" y1="476" x2="153" y2="497" stroke="url(#lf3)" stroke-width="1.7"/><line x1="889" y1="149" x2="844" y2="378" stroke="url(#lf4)" stroke-width="1.7"/><line x1="889" y1="292" x2="776" y2="432" stroke="url(#lf5)" stroke-width="1.7"/><line x1="889" y1="210" x2="1707" y2="-6" stroke="#d00808" stroke-width="1.7"/><line x1="889" y1="407" x2="1776" y2="34" stroke="#d00808" stroke-width="1.7"/><line x1="889" y1="145" x2="1776" y2="175" stroke="#0808c8" stroke-width="1.7"/><line x1="889" y1="349" x2="1776" y2="245" stroke="#0808c8" stroke-width="1.7"/><line x1="911" y1="357" x2="1170" y2="450" stroke="url(#lf10)" stroke-width="1.7"/><line x1="911" y1="479" x2="1099" y2="510" stroke="url(#lf11)" stroke-width="1.7"/><line x1="889" y1="539" x2="1776" y2="537" stroke="#0808c8" stroke-width="1.7"/><line x1="889" y1="599" x2="70" y2="584" stroke="url(#lf13)" stroke-width="1.7"/><line x1="889" y1="652" x2="597" y2="595" stroke="url(#lf14)" stroke-width="1.7"/><line x1="0" y1="789" x2="889" y2="599" stroke="#d00808" stroke-width="1.7"/><line x1="546" y1="661" x2="889" y2="769" stroke="#0808c8" stroke-width="1.7"/><line x1="0" y1="941" x2="889" y2="770" stroke="#d00808" stroke-width="1.7"/><line x1="0" y1="935" x2="889" y2="924" stroke="#d00808" stroke-width="1.7"/><line x1="889" y1="1054" x2="396" y2="864" stroke="url(#lf19)" stroke-width="1.7"/><line x1="0" y1="1065" x2="889" y2="1005" stroke="#0808c8" stroke-width="1.7"/><line x1="889" y1="882" x2="0" y2="1200" stroke="#0808c8" stroke-width="1.7"/><line x1="889" y1="723" x2="105" y2="1593" stroke="#0808c8" stroke-width="1.7"/><line x1="871" y1="727" x2="889" y2="917" stroke="#0808c8" stroke-width="1.7"/><line x1="750" y1="866" x2="889" y2="1182" stroke="#d00808" stroke-width="1.7"/><line x1="770" y1="916" x2="889" y2="1253" stroke="#0808c8" stroke-width="1.7"/><line x1="889" y1="1142" x2="347" y2="939" stroke="url(#lf26)" stroke-width="1.7"/><line x1="0" y1="1441" x2="889" y2="1253" stroke="#d00808" stroke-width="1.7"/><line x1="889" y1="1143" x2="493" y2="1593" stroke="url(#lf28)" stroke-width="1.7"/><line x1="889" y1="1209" x2="621" y2="1593" stroke="url(#lf29)" stroke-width="1.7"/><line x1="889" y1="722" x2="1776" y2="754" stroke="#d00808" stroke-width="1.7"/><line x1="889" y1="808" x2="1776" y2="827" stroke="#0808c8" stroke-width="1.7"/><line x1="889" y1="651" x2="1470" y2="608" stroke="url(#lf32)" stroke-width="1.7"/><line x1="889" y1="964" x2="1248" y2="770" stroke="url(#lf33)" stroke-width="1.7"/><line x1="889" y1="1055" x2="1181" y2="819" stroke="url(#lf34)" stroke-width="1.7"/><line x1="911" y1="885" x2="1776" y2="1219" stroke="#d00808" stroke-width="1.7"/><line x1="911" y1="970" x2="1776" y2="1307" stroke="#0808c8" stroke-width="1.7"/><line x1="889" y1="1104" x2="1665" y2="994" stroke="url(#lf37)" stroke-width="1.7"/><line x1="889" y1="1183" x2="1587" y2="1033" stroke="url(#lf38)" stroke-width="1.7"/><line x1="895" y1="1026" x2="1047" y2="1593" stroke="#d00808" stroke-width="1.7"/><line x1="898" y1="1126" x2="1071" y2="1593" stroke="#0808c8" stroke-width="1.7"/><line x1="889" y1="1210" x2="1776" y2="1530" stroke="#d00808" stroke-width="1.7"/><defs><linearGradient id="lf3" gradientUnits="userSpaceOnUse" x1="889" y1="476" x2="153" y2="497"><stop offset="0" stop-color="#d00808" stop-opacity="1"/><stop offset="0.55" stop-color="#d00808" stop-opacity="0.8"/><stop offset="1" stop-color="#d00808" stop-opacity="0.05"/></linearGradient><linearGradient id="lf4" gradientUnits="userSpaceOnUse" x1="889" y1="149" x2="844" y2="378"><stop offset="0" stop-color="#d00808" stop-opacity="1"/><stop offset="0.55" stop-color="#d00808" stop-opacity="0.8"/><stop offset="1" stop-color="#d00808" stop-opacity="0.05"/></linearGradient><linearGradient id="lf5" gradientUnits="userSpaceOnUse" x1="889" y1="292" x2="776" y2="432"><stop offset="0" stop-color="#0808c8" stop-opacity="1"/><stop offset="0.55" stop-color="#0808c8" stop-opacity="0.8"/><stop offset="1" stop-color="#0808c8" stop-opacity="0.05"/></linearGradient><linearGradient id="lf10" gradientUnits="userSpaceOnUse" x1="911" y1="357" x2="1170" y2="450"><stop offset="0" stop-color="#d00808" stop-opacity="1"/><stop offset="0.55" stop-color="#d00808" stop-opacity="0.8"/><stop offset="1" stop-color="#d00808" stop-opacity="0.05"/></linearGradient><linearGradient id="lf11" gradientUnits="userSpaceOnUse" x1="911" y1="479" x2="1099" y2="510"><stop offset="0" stop-color="#0808c8" stop-opacity="1"/><stop offset="0.55" stop-color="#0808c8" stop-opacity="0.8"/><stop offset="1" stop-color="#0808c8" stop-opacity="0.05"/></linearGradient><linearGradient id="lf13" gradientUnits="userSpaceOnUse" x1="889" y1="599" x2="70" y2="584"><stop offset="0" stop-color="#0808c8" stop-opacity="1"/><stop offset="0.55" stop-color="#0808c8" stop-opacity="0.8"/><stop offset="1" stop-color="#0808c8" stop-opacity="0.05"/></linearGradient><linearGradient id="lf14" gradientUnits="userSpaceOnUse" x1="889" y1="652" x2="597" y2="595"><stop offset="0" stop-color="#d00808" stop-opacity="1"/><stop offset="0.55" stop-color="#d00808" stop-opacity="0.8"/><stop offset="1" stop-color="#d00808" stop-opacity="0.05"/></linearGradient><linearGradient id="lf19" gradientUnits="userSpaceOnUse" x1="889" y1="1054" x2="396" y2="864"><stop offset="0" stop-color="#d00808" stop-opacity="1"/><stop offset="0.55" stop-color="#d00808" stop-opacity="0.8"/><stop offset="1" stop-color="#d00808" stop-opacity="0.05"/></linearGradient><linearGradient id="lf26" gradientUnits="userSpaceOnUse" x1="889" y1="1142" x2="347" y2="939"><stop offset="0" stop-color="#0808c8" stop-opacity="1"/><stop offset="0.55" stop-color="#0808c8" stop-opacity="0.8"/><stop offset="1" stop-color="#0808c8" stop-opacity="0.05"/></linearGradient><linearGradient id="lf28" gradientUnits="userSpaceOnUse" x1="889" y1="1143" x2="493" y2="1593"><stop offset="0" stop-color="#d00808" stop-opacity="1"/><stop offset="0.55" stop-color="#d00808" stop-opacity="0.8"/><stop offset="1" stop-color="#d00808" stop-opacity="0.05"/></linearGradient><linearGradient id="lf29" gradientUnits="userSpaceOnUse" x1="889" y1="1209" x2="621" y2="1593"><stop offset="0" stop-color="#0808c8" stop-opacity="1"/><stop offset="0.55" stop-color="#0808c8" stop-opacity="0.8"/><stop offset="1" stop-color="#0808c8" stop-opacity="0.05"/></linearGradient><linearGradient id="lf32" gradientUnits="userSpaceOnUse" x1="889" y1="651" x2="1470" y2="608"><stop offset="0" stop-color="#0808c8" stop-opacity="1"/><stop offset="0.55" stop-color="#0808c8" stop-opacity="0.8"/><stop offset="1" stop-color="#0808c8" stop-opacity="0.05"/></linearGradient><linearGradient id="lf33" gradientUnits="userSpaceOnUse" x1="889" y1="964" x2="1248" y2="770"><stop offset="0" stop-color="#d00808" stop-opacity="1"/><stop offset="0.55" stop-color="#d00808" stop-opacity="0.8"/><stop offset="1" stop-color="#d00808" stop-opacity="0.05"/></linearGradient><linearGradient id="lf34" gradientUnits="userSpaceOnUse" x1="889" y1="1055" x2="1181" y2="819"><stop offset="0" stop-color="#0808c8" stop-opacity="1"/><stop offset="0.55" stop-color="#0808c8" stop-opacity="0.8"/><stop offset="1" stop-color="#0808c8" stop-opacity="0.05"/></linearGradient><linearGradient id="lf37" gradientUnits="userSpaceOnUse" x1="889" y1="1104" x2="1665" y2="994"><stop offset="0" stop-color="#d00808" stop-opacity="1"/><stop offset="0.55" stop-color="#d00808" stop-opacity="0.8"/><stop offset="1" stop-color="#d00808" stop-opacity="0.05"/></linearGradient><linearGradient id="lf38" gradientUnits="userSpaceOnUse" x1="889" y1="1183" x2="1587" y2="1033"><stop offset="0" stop-color="#0808c8" stop-opacity="1"/><stop offset="0.55" stop-color="#0808c8" stop-opacity="0.8"/><stop offset="1" stop-color="#0808c8" stop-opacity="0.05"/></linearGradient></defs><line x1="889.0" y1="0" x2="889.0" y2="1253" stroke="#22e022" stroke-width="3"/><text x="892" y="1270" font-family="Liberation Mono" font-size="17" letter-spacing="2" fill="#7ad8d8">0</text><text x="892" y="1224" font-family="Liberation Mono" font-size="17" letter-spacing="2" fill="#7ad8d8">1</text><text x="892" y="1200" font-family="Liberation Mono" font-size="17" letter-spacing="2" fill="#7ad8d8">2</text><text x="892" y="1159" font-family="Liberation Mono" font-size="17" letter-spacing="2" fill="#7ad8d8">3</text><text x="892" y="1123" font-family="Liberation Mono" font-size="17" letter-spacing="2" fill="#7ad8d8">4</text><text x="892" y="1074" font-family="Liberation Mono" font-size="17" letter-spacing="2" fill="#7ad8d8">5</text><text x="892" y="1022" font-family="Liberation Mono" font-size="17" letter-spacing="2" fill="#7ad8d8">6</text><text x="892" y="982" font-family="Liberation Mono" font-size="17" letter-spacing="2" fill="#7ad8d8">7</text><text x="892" y="942" font-family="Liberation Mono" font-size="17" letter-spacing="2" fill="#7ad8d8">8</text><text x="892" y="899" font-family="Liberation Mono" font-size="17" letter-spacing="2" fill="#7ad8d8">9</text><text x="892" y="826" font-family="Liberation Mono" font-size="17" letter-spacing="2" fill="#7ad8d8">10</text><text x="892" y="787" font-family="Liberation Mono" font-size="17" letter-spacing="2" fill="#7ad8d8">11</text><text x="892" y="740" font-family="Liberation Mono" font-size="17" letter-spacing="2" fill="#7ad8d8">12</text><text x="892" y="669" font-family="Liberation Mono" font-size="17" letter-spacing="2" fill="#7ad8d8">13</text><text x="892" y="615" font-family="Liberation Mono" font-size="17" letter-spacing="2" fill="#7ad8d8">14</text><text x="892" y="557" font-family="Liberation Mono" font-size="17" letter-spacing="2" fill="#7ad8d8">15</text><text x="892" y="493" font-family="Liberation Mono" font-size="17" letter-spacing="2" fill="#7ad8d8">16</text><text x="892" y="426" font-family="Liberation Mono" font-size="17" letter-spacing="2" fill="#7ad8d8">17</text><text x="892" y="367" font-family="Liberation Mono" font-size="17" letter-spacing="2" fill="#7ad8d8">18</text><text x="892" y="308" font-family="Liberation Mono" font-size="17" letter-spacing="2" fill="#7ad8d8">19</text><text x="892" y="227" font-family="Liberation Mono" font-size="17" letter-spacing="2" fill="#7ad8d8">20</text><text x="892" y="163" font-family="Liberation Mono" font-size="17" letter-spacing="2" fill="#7ad8d8">21</text><ellipse cx="845" cy="1231" rx="27" ry="11" fill="none" stroke="#5e6282" stroke-width="8"/><text x="928" y="1329" font-family="Liberation Sans" font-weight="bold" font-size="78" fill="#7a5757" text-anchor="middle">0</text><text x="9" y="1571" font-family="Liberation Sans" font-size="22" fill="#6a3a3a">x</text><text x="27" y="1551" font-family="Liberation Sans" font-size="20" fill="#2a6a2a">y</text></svg>
<svg style="position:absolute;left:225px;top:443px;" width="36" height="36" viewBox="0 0 36 36"><circle cx="10" cy="16" r="8" fill="#555" stroke="#222" stroke-width="2"/><circle cx="22" cy="9" r="7" fill="#555" stroke="#222" stroke-width="2"/><rect x="10" y="18" width="16" height="12" fill="#4a4a4a" stroke="#222"/><polygon points="26,22 34,19 34,30 26,28" fill="#444"/></svg>
<div style="position:absolute;top:443.0px;height:36px;line-height:36px;font-family:'Liberation Sans', sans-serif;font-size:28px;color:#ffffff;font-weight:bold;font-style:normal;white-space:pre;left:285.0px;">View</div>
<div style="position:absolute;left:1742px;top:431px;width:95px;height:34px;background:rgba(0,0,0,0.6);border:2px solid #5a5a5a;border-radius:17px;box-sizing:border-box;"></div>
<div style="position:absolute;top:434.5px;height:27px;line-height:27px;font-family:'Liberation Sans', sans-serif;font-size:21px;color:#cfcfcf;font-weight:normal;font-style:normal;white-space:pre;left:1758.0px;">Persp</div>
<svg style="position:absolute;left:1813px;top:449px;" width="10" height="6" viewBox="0 0 10 6"><polygon points="0,0 10,0 5,5" fill="#cfcfcf"/></svg>
<div style="position:absolute;left:1845px;top:431px;width:114px;height:34px;background:rgba(0,0,0,0.6);border:2px solid #5a5a5a;border-radius:17px;box-sizing:border-box;"></div>
<div style="position:absolute;top:434.5px;height:27px;line-height:27px;font-family:'Liberation Sans', sans-serif;font-size:21px;color:#cfcfcf;font-weight:normal;font-style:normal;white-space:pre;left:1861.0px;">No cam</div>
<svg style="position:absolute;left:1935px;top:449px;" width="10" height="6" viewBox="0 0 10 6"><polygon points="0,0 10,0 5,5" fill="#cfcfcf"/></svg>
<div style="position:absolute;top:1937.0px;height:28px;line-height:28px;font-family:'Liberation Sans', sans-serif;font-size:22.1px;color:#d6d6d6;font-weight:normal;font-style:normal;white-space:pre;left:209.0px;">Left mouse tumbles. Middle pans. Right dollies. Ctrl+Alt+Left box-zooms. Ctrl+Right zooms. Spacebar-Ctrl-Left tilts. Hold L for alternate tumble, dolly, and zoom. M or Alt+M for</div>
<div style="position:absolute;top:1967.0px;height:28px;line-height:28px;font-family:'Liberation Sans', sans-serif;font-size:22.1px;color:#d6d6d6;font-weight:normal;font-style:normal;white-space:pre;left:209.0px;">First Person Navigation.</div>
<div style="position:absolute;top:1964.0px;height:28px;line-height:28px;font-family:'Liberation Sans', sans-serif;font-size:22px;color:#5a5a28;font-weight:normal;font-style:normal;white-space:pre;left:-57.0px;width:2000px;text-align:right;">Non-Commercial Edition</div>
<div style="position:absolute;left:126px;top:417px;width:67px;height:1593px;background:#3c3c3c;"></div>
<div style="position:absolute;left:126px;top:417px;width:67px;height:20px;background:#4a4a4a;background:linear-gradient(#585858,#444);border-bottom:1px solid #222;box-sizing:border-box;"></div>
<svg style="position:absolute;left:132.0px;top:420.5px;" width="10" height="13" viewBox="0 0 10 13"><polygon points="10,0 10,13 0,6.5" fill="#0a0a0a"/></svg>
<div style="position:absolute;left:134px;top:448px;width:53px;height:147px;background:#333;border:2px solid #262626;box-sizing:border-box;"></div>
<div style="position:absolute;left:136px;top:497px;width:49px;height:47px;background:#5b7290;border:1px solid #3a4a5a;box-sizing:border-box;"></div>
<svg style="position:absolute;left:140px;top:455px;" width="44" height="38" viewBox="0 0 44 38"><polygon points="18,4 6,30 30,30" fill="#f0c830" stroke="#6a5010"/><circle cx="30" cy="14" r="10" fill="#666" opacity="0.8"/><polygon points="38,28 44,34 38,38" fill="#9a9a9a"/></svg>
<svg style="position:absolute;left:140px;top:500px;" width="44" height="42" viewBox="0 0 44 42"><g transform="rotate(45 20 20)"><rect x="8" y="8" width="11" height="11" fill="#888" stroke="#333"/><rect x="21" y="8" width="11" height="11" fill="#888" stroke="#333"/><rect x="8" y="21" width="11" height="11" fill="#888" stroke="#333"/><rect x="21" y="21" width="11" height="11" fill="#f0c830" stroke="#6a4a10" stroke-width="2"/></g><polygon points="38,30 44,36 38,40" fill="#222"/></svg>
<svg style="position:absolute;left:140px;top:550px;" width="44" height="42" viewBox="0 0 44 42"><polygon points="12,8 30,4 38,20 24,34 8,26" fill="#e8c820" stroke="#8a6a10" stroke-width="2"/><polygon points="38,30 44,36 38,40" fill="#9a9a9a"/></svg>
<div style="position:absolute;left:131px;top:606px;width:58px;height:2px;background:#2e2e2e;"></div>
<svg style="position:absolute;left:142px;top:622px;" width="40" height="44" viewBox="0 0 40 44"><polygon points="4,2 4,34 12,27 19,40 25,37 18,24 30,24" fill="#d8d8d8" stroke="#111" stroke-width="2"/></svg>
<svg style="position:absolute;left:178.0px;top:652.0px;" width="8" height="12" viewBox="0 0 8 12"><polygon points="0,0 0,12 8,6.0" fill="#9a9a9a"/></svg>
<div style="position:absolute;left:133px;top:673px;width:54px;height:53px;background:#5b7290;border:1px solid #3a4a5a;box-sizing:border-box;"></div>
<svg style="position:absolute;left:142px;top:680px;" width="40" height="40" viewBox="0 0 40 40"><path d="M12,18 L12,12 A8,8 0 0 1 28,12 L28,18" stroke="#eee" stroke-width="4" fill="none"/><rect x="8" y="17" width="24" height="20" fill="#eee"/><polygon points="16,21 16,33 20,29 26,31" fill="#5a7090"/></svg>
<svg style="position:absolute;left:138px;top:734px;" width="48" height="40" viewBox="0 0 48 40"><rect x="16" y="8" width="16" height="16" fill="#ccc" stroke="#555"/><path d="M6,14 L16,20 M42,14 L32,20 M8,34 L18,24 M40,34 L30,24" stroke="#d02010" stroke-width="5"/></svg>
<svg style="position:absolute;left:138px;top:790px;" width="48" height="44" viewBox="0 0 48 44"><circle cx="24" cy="12" r="9" fill="#aaa" stroke="#eee" stroke-width="2"/><path d="M6,24 Q24,44 42,24" stroke="#e04010" stroke-width="6" fill="none"/></svg>
<svg style="position:absolute;left:138px;top:846px;" width="48" height="44" viewBox="0 0 48 44"><path d="M24,4 L24,20 M8,36 L20,28 M40,36 L28,28" stroke="#d02010" stroke-width="4"/><rect x="14" y="16" width="20" height="20" fill="#888" opacity="0.7"/><rect x="20" y="24" width="10" height="10" fill="#ccc"/></svg>
<svg style="position:absolute;left:140px;top:900px;" width="44" height="44" viewBox="0 0 44 44"><circle cx="10" cy="10" r="5" fill="#ddd"/><path d="M12,16 L22,22 L16,40 M22,22 L30,6 M22,22 L32,38" stroke="#ddd" stroke-width="4"/><circle cx="22" cy="22" r="3" fill="#d02020"/><circle cx="16" cy="34" r="3" fill="#d02020"/><circle cx="30" cy="32" r="3" fill="#d02020"/></svg>
<svg style="position:absolute;left:136px;top:956px;" width="48" height="48" viewBox="0 0 48 48"><line x1="22" y1="24" x2="22" y2="4" stroke="#5ac030" stroke-width="5"/><line x1="22" y1="24" x2="40" y2="32" stroke="#e04848" stroke-width="5"/><line x1="22" y1="24" x2="6" y2="40" stroke="#5a90d8" stroke-width="5"/><circle cx="22" cy="24" r="7" fill="#f0d020" stroke="#333" stroke-width="2"/></svg>
<svg style="position:absolute;left:179.0px;top:992.0px;" width="8" height="12" viewBox="0 0 8 12"><polygon points="0,0 0,12 8,6.0" fill="#9a9a9a"/></svg>
<div style="position:absolute;left:131px;top:1015px;width:58px;height:2px;background:#2e2e2e;"></div>
<svg style="position:absolute;left:136px;top:1029px;" width="52" height="48" viewBox="0 0 52 48"><path d="M8,28 L8,18 A12,12 0 0 1 32,18 L32,28" stroke="#c8383c" stroke-width="10" fill="none"/><rect x="3" y="26" width="10" height="8" fill="#eee"/><rect x="27" y="26" width="10" height="8" fill="#eee"/><rect x="28" y="14" width="18" height="18" fill="#1c1c2c" stroke="#ccc" stroke-width="2"/><path d="M37,14 L37,32 M28,23 L46,23" stroke="#ccc" stroke-width="2"/><polygon points="42,34 48,40 42,44" fill="#9a9a9a"/></svg>
<svg style="position:absolute;left:136px;top:1084px;" width="52" height="48" viewBox="0 0 52 48"><path d="M8,28 L8,18 A12,12 0 0 1 32,18 L32,28" stroke="#c8383c" stroke-width="10" fill="none"/><rect x="3" y="26" width="10" height="8" fill="#eee"/><rect x="27" y="26" width="10" height="8" fill="#eee"/><path d="M10,40 Q30,30 46,24" stroke="#eee" stroke-width="3" fill="none"/><polygon points="42,34 48,40 42,44" fill="#9a9a9a"/></svg>
<svg style="position:absolute;left:136px;top:1137px;" width="52" height="48" viewBox="0 0 52 48"><path d="M8,28 L8,18 A12,12 0 0 1 32,18 L32,28" stroke="#c8383c" stroke-width="10" fill="none"/><rect x="3" y="26" width="10" height="8" fill="#eee"/><rect x="27" y="26" width="10" height="8" fill="#eee"/><circle cx="38" cy="34" r="7" fill="#ddd" stroke="#222"/><polygon points="42,34 48,40 42,44" fill="#9a9a9a"/></svg>
<svg style="position:absolute;left:136px;top:1194px;" width="52" height="54" viewBox="0 0 52 54"><path d="M10,36 L10,22 A15,15 0 0 1 40,22 L40,36" stroke="#c8383c" stroke-width="12" fill="none"/><rect x="4" y="34" width="12" height="10" fill="#eee"/><rect x="34" y="34" width="12" height="10" fill="#eee"/><polygon points="44,40 50,46 44,50" fill="#9a9a9a"/></svg>
<div style="position:absolute;left:131px;top:1257px;width:58px;height:2px;background:#2e2e2e;"></div>
<div style="position:absolute;left:133px;top:1266px;width:54px;height:55px;background:#5b7290;border:1px solid #3a4a5a;box-sizing:border-box;"></div>
<svg style="position:absolute;left:140px;top:1272px;" width="46" height="46" viewBox="0 0 46 46"><circle cx="14" cy="14" r="9" fill="#222" stroke="#555"/><circle cx="30" cy="10" r="9" fill="#222" stroke="#555"/><rect x="10" y="22" width="22" height="14" fill="#1a1a1a"/><polygon points="32,24 42,20 42,36 32,32" fill="#222"/><polygon points="38,38 44,44 38,46" fill="#222"/></svg>
<svg style="position:absolute;left:138px;top:1322px;" width="48" height="50" viewBox="0 0 48 50"><circle cx="20" cy="22" r="16" fill="none" stroke="#ddd" stroke-width="3"/><path d="M4,22 L36,22 M20,6 L20,38" stroke="#ddd" stroke-width="1.5"/><rect x="20" y="24" width="22" height="22" fill="#aaa" stroke="#d02020" stroke-width="2"/></svg>
<svg style="position:absolute;left:138px;top:1378px;" width="48" height="50" viewBox="0 0 48 50"><ellipse cx="22" cy="36" rx="18" ry="8" fill="#9ac8e8" opacity="0.8"/><rect x="10" y="8" width="24" height="24" rx="4" fill="#222" stroke="#666"/><ellipse cx="22" cy="10" rx="10" ry="4" fill="#ccc"/><polygon points="40,38 46,44 40,48" fill="#9a9a9a"/></svg>
<svg style="position:absolute;left:134px;top:1900px;" width="50" height="50" viewBox="0 0 50 50"><polygon points="4,22 30,10 40,22 14,36" fill="#e0e8ec"/><polygon points="4,22 14,36 14,40 4,26" fill="#e05010"/><path d="M20,18 Q30,6 38,8" stroke="#ccc" stroke-width="6"/><polygon points="38,38 44,44 38,48" fill="#9a9a9a"/></svg>
<svg style="position:absolute;left:134px;top:1958px;" width="54" height="50" viewBox="0 0 54 50"><ellipse cx="24" cy="22" rx="20" ry="18" fill="#c8d0c0" stroke="#eee" stroke-width="2"/><circle cx="18" cy="12" r="5" fill="#777"/><circle cx="30" cy="12" r="5" fill="#777"/><circle cx="14" cy="24" r="5" fill="#777"/><circle cx="34" cy="24" r="5" fill="#777"/><circle cx="24" cy="32" r="5" fill="#777"/><polygon points="44,36 52,44 44,50" fill="#9a9a9a"/></svg>
<svg style="position:absolute;left:115.5px;top:1059.0px;" width="7" height="12" viewBox="0 0 7 12"><polygon points="0,0 0,12 7,6.0" fill="#8a8a8a"/></svg>
<svg style="position:absolute;left:115.5px;top:1185.0px;" width="7" height="12" viewBox="0 0 7 12"><polygon points="0,0 0,12 7,6.0" fill="#8a8a8a"/></svg>
<div style="position:absolute;left:1970px;top:417px;width:52px;height:1593px;background:#3c3c3c;border-left:1px solid #222;box-sizing:border-box;"></div>
<div style="position:absolute;left:1971px;top:419px;width:51px;height:17px;background:#4a4a4a;background:linear-gradient(#585858,#444);"></div>
<svg style="position:absolute;left:2003.0px;top:420.5px;" width="10" height="13" viewBox="0 0 10 13"><polygon points="0,0 0,13 10,6.5" fill="#0a0a0a"/></svg>
<div style="position:absolute;left:1973px;top:439px;width:47px;height:48px;background:#5b7290;border:1px solid #3a4a5a;box-sizing:border-box;"></div>
<div style="position:absolute;left:1973px;top:783px;width:47px;height:48px;background:#5b7290;border:1px solid #3a4a5a;box-sizing:border-box;"></div>
<div style="position:absolute;left:1973px;top:1145px;width:47px;height:48px;background:#5b7290;border:1px solid #3a4a5a;box-sizing:border-box;"></div>
<div style="position:absolute;left:1973px;top:1347px;width:47px;height:47px;background:#5b7290;border:1px solid #3a4a5a;box-sizing:border-box;"></div>
<div style="position:absolute;left:1973px;top:1647px;width:47px;height:47px;background:#5b7290;border:1px solid #3a4a5a;box-sizing:border-box;"></div>
<div style="position:absolute;left:1973px;top:1719px;width:47px;height:47px;background:#5b7290;border:1px solid #3a4a5a;box-sizing:border-box;"></div>
<svg style="position:absolute;left:1976px;top:445px;" width="42" height="38" viewBox="0 0 42 38"><polygon points="4,20 20,10 38,20 22,30" fill="#e8e8e8" stroke="#222" stroke-width="2"/><path d="M12,15 L30,25 M20,25 L30,15" stroke="#444" stroke-width="3"/><polygon points="34,28 41,33 34,38" fill="#9a9a9a"/></svg>
<svg style="position:absolute;left:1976px;top:495px;" width="42" height="38" viewBox="0 0 42 38"><polygon points="6,6 34,4 36,30 8,32" fill="#3a5a30" stroke="#8ad040" stroke-width="3"/><path d="M14,24 Q14,10 26,14 Q30,22 20,22" stroke="#eee" stroke-width="3" fill="none"/><polygon points="34,28 41,33 34,38" fill="#9a9a9a"/></svg>
<svg style="position:absolute;left:1976px;top:545px;" width="42" height="38" viewBox="0 0 42 38"><path d="M12,16 L12,10 A9,9 0 0 1 30,10 L30,16" stroke="#eee" stroke-width="4" fill="none"/><rect x="8" y="15" width="26" height="20" fill="#ddd" stroke="#333"/><path d="M10,21 L32,21 M10,26 L32,26 M10,31 L32,31" stroke="#888" stroke-width="2"/></svg>
<svg style="position:absolute;left:1976px;top:593px;" width="42" height="38" viewBox="0 0 42 38"><circle cx="21" cy="14" r="11" fill="#ccc" stroke="#333" stroke-width="2"/><path d="M16,9 L26,19 M26,9 L16,19" stroke="#111" stroke-width="3"/><rect x="16" y="25" width="10" height="10" fill="#aaa"/></svg>
<svg style="position:absolute;left:1976px;top:643px;" width="42" height="38" viewBox="0 0 42 38"><circle cx="20" cy="19" r="15" fill="#bbb" stroke="#555" stroke-width="2"/><path d="M14,10 L14,28 M20,8 L20,30 M26,10 L26,28" stroke="#eee" stroke-width="3"/><polygon points="34,28 41,33 34,38" fill="#9a9a9a"/></svg>
<svg style="position:absolute;left:1976px;top:694px;" width="42" height="38" viewBox="0 0 42 38"><circle cx="21" cy="14" r="11" fill="#cdcdc0" stroke="#333"/><rect x="16" y="25" width="10" height="10" fill="#aaa"/><polygon points="34,28 41,33 34,38" fill="#9a9a9a"/></svg>
<svg style="position:absolute;left:1976px;top:739px;" width="42" height="38" viewBox="0 0 42 38"><circle cx="21" cy="14" r="11" fill="#e0e0b0" stroke="#333"/><path d="M21,8 L21,20 M15,14 L27,14" stroke="#222" stroke-width="3"/><rect x="16" y="25" width="10" height="10" fill="#aaa"/><polygon points="34,28 41,33 34,38" fill="#9a9a9a"/></svg>
<svg style="position:absolute;left:1976px;top:786px;" width="42" height="38" viewBox="0 0 42 38"><circle cx="21" cy="13" r="10" fill="#eee" stroke="#333"/><path d="M21,7 L21,19 M15,13 L27,13" stroke="#222" stroke-width="3"/><ellipse cx="21" cy="32" rx="14" ry="4" fill="#111"/><rect x="17" y="23" width="8" height="8" fill="#bbb"/><polygon points="34,28 41,33 34,38" fill="#9a9a9a"/></svg>
<svg style="position:absolute;left:1976px;top:842px;" width="42" height="38" viewBox="0 0 42 38"><polygon points="20,2 36,10 36,28 20,36 4,28 4,10" fill="#999" stroke="#222"/><path d="M4,10 L20,18 L36,10 M20,18 L20,36" stroke="#222"/><rect x="8" y="14" width="7" height="7" fill="#eee"/><rect x="24" y="20" width="7" height="7" fill="#eee"/><rect x="16" y="4" width="7" height="5" fill="#eee"/><polygon points="34,28 41,33 34,38" fill="#9a9a9a"/></svg>
<svg style="position:absolute;left:1976px;top:889px;" width="42" height="38" viewBox="0 0 42 38"><path d="M2,10 Q18,6 38,18" stroke="#eee" stroke-width="3" fill="none"/><ellipse cx="14" cy="20" rx="8" ry="6" fill="#111" stroke="#eee" stroke-width="2"/><ellipse cx="30" cy="26" rx="8" ry="6" fill="#111" stroke="#eee" stroke-width="2"/><polygon points="30,34 40,34 35,38" fill="#8a8a8a"/></svg>
<svg style="position:absolute;left:1976px;top:940px;" width="42" height="38" viewBox="0 0 42 38"><path d="M8,6 Q22,4 38,14" stroke="#eee" stroke-width="3" fill="none"/><ellipse cx="18" cy="14" rx="7" ry="5" fill="#111" stroke="#eee" stroke-width="2"/><ellipse cx="32" cy="20" rx="7" ry="5" fill="#111" stroke="#eee" stroke-width="2"/><rect x="2" y="22" width="20" height="14" fill="#888"/><polygon points="8,25 16,29 8,33" fill="#eee"/><polygon points="34,28 41,33 34,38" fill="#9a9a9a"/></svg>
<svg style="position:absolute;left:1976px;top:1001px;" width="42" height="38" viewBox="0 0 42 38"><circle cx="20" cy="19" r="7" fill="#ddd" stroke="#222"/></svg>
<svg style="position:absolute;left:1976px;top:1048px;" width="42" height="38" viewBox="0 0 42 38"><circle cx="14" cy="26" r="7" fill="#ddd" stroke="#222" stroke-width="2"/><path d="M18,22 L34,6" stroke="#ddd" stroke-width="3"/></svg>
<svg style="position:absolute;left:1976px;top:1096px;" width="42" height="38" viewBox="0 0 42 38"><circle cx="30" cy="8" r="6" fill="#ddd" stroke="#222"/><path d="M26,12 L8,32" stroke="#ccc" stroke-width="4" stroke-dasharray="3,2"/></svg>
<svg style="position:absolute;left:1976px;top:1149px;" width="42" height="38" viewBox="0 0 42 38"><circle cx="12" cy="28" r="7" fill="#ddd" stroke="#222" stroke-width="2"/><text x="26" y="22" font-family="Liberation Sans" font-weight="bold" font-size="20" fill="#eee" stroke="#222" stroke-width="1" text-anchor="middle">12</text><polygon points="34,28 41,33 34,38" fill="#9a9a9a"/></svg>
<svg style="position:absolute;left:1976px;top:1201px;" width="42" height="38" viewBox="0 0 42 38"><circle cx="12" cy="28" r="6" fill="#ddd" stroke="#222"/><polygon points="12,22 28,10 34,22 20,32" fill="#ddd" stroke="#333"/><path d="M26,12 L32,2" stroke="#ddd" stroke-width="3"/></svg>
<svg style="position:absolute;left:1976px;top:1245px;" width="42" height="38" viewBox="0 0 42 38"><polygon points="4,30 22,14 34,22 20,36" fill="#ddd" stroke="#333"/><text x="26" y="18" font-family="Liberation Sans" font-weight="bold" font-size="18" fill="#eee" stroke="#222" stroke-width="1" text-anchor="middle">12</text></svg>
<svg style="position:absolute;left:1976px;top:1298px;" width="42" height="38" viewBox="0 0 42 38"><path d="M6,34 L6,14 Q8,6 34,4" stroke="#ddd" stroke-width="3" fill="none"/><circle cx="6" cy="34" r="4" fill="#ddd"/><circle cx="34" cy="4" r="4" fill="#ddd"/><circle cx="6" cy="14" r="3" fill="#ddd"/></svg>
<svg style="position:absolute;left:1976px;top:1351px;" width="42" height="38" viewBox="0 0 42 38"><polygon points="6,28 20,8 36,14 30,32" fill="#e0e0e0" stroke="#333"/><polygon points="20,8 36,14 30,32" fill="#3a70c0"/></svg>
<svg style="position:absolute;left:1976px;top:1401px;" width="42" height="38" viewBox="0 0 42 38"><rect x="4" y="4" width="32" height="30" fill="#ddd" stroke="#333"/><rect x="4" y="4.0" width="8" height="7.5" fill="#a8c8e8"/><rect x="4" y="11.5" width="8" height="7.5" fill="#e8a8b8"/><rect x="4" y="19.0" width="8" height="7.5" fill="#a8c8e8"/><rect x="4" y="26.5" width="8" height="7.5" fill="#e8a8b8"/><rect x="12" y="4.0" width="8" height="7.5" fill="#e8a8b8"/><rect x="12" y="11.5" width="8" height="7.5" fill="#a8c8e8"/><rect x="12" y="19.0" width="8" height="7.5" fill="#e8a8b8"/><rect x="12" y="26.5" width="8" height="7.5" fill="#a8c8e8"/><rect x="20" y="4.0" width="8" height="7.5" fill="#a8c8e8"/><rect x="20" y="11.5" width="8" height="7.5" fill="#e8a8b8"/><rect x="20" y="19.0" width="8" height="7.5" fill="#a8c8e8"/><rect x="20" y="26.5" width="8" height="7.5" fill="#e8a8b8"/><rect x="28" y="4.0" width="8" height="7.5" fill="#e8a8b8"/><rect x="28" y="11.5" width="8" height="7.5" fill="#a8c8e8"/><rect x="28" y="19.0" width="8" height="7.5" fill="#e8a8b8"/><rect x="28" y="26.5" width="8" height="7.5" fill="#a8c8e8"/><polygon points="34,28 41,33 34,38" fill="#9a9a9a"/></svg>
<svg style="position:absolute;left:1976px;top:1451px;" width="42" height="38" viewBox="0 0 42 38"><polygon points="20,2 38,18 20,34 2,18" fill="#2a5aa0" stroke="#8ac0f0" stroke-width="3"/><polygon points="20,6 32,18 20,28 8,18" fill="#ddd"/></svg>
<svg style="position:absolute;left:1976px;top:1501px;" width="42" height="38" viewBox="0 0 42 38"><polygon points="4,6 36,4 34,34 6,32" fill="#888" stroke="#5ad030" stroke-width="3"/><rect x="10" y="10" width="10" height="10" fill="#ddd"/><rect x="20" y="20" width="10" height="10" fill="#ddd"/></svg>
<svg style="position:absolute;left:1976px;top:1551px;" width="42" height="38" viewBox="0 0 42 38"><circle cx="22" cy="20" r="6" fill="#ddd" stroke="#222"/><path d="M18,20 L4,22 M24,16 L32,4 M24,24 L32,34" stroke="#ddd" stroke-width="4"/></svg>
<svg style="position:absolute;left:1976px;top:1601px;" width="42" height="38" viewBox="0 0 42 38"><circle cx="20" cy="19" r="16" fill="none" stroke="#888" stroke-width="2" stroke-dasharray="3,2"/><rect x="10" y="11" width="20" height="7" fill="#ddd"/><rect x="10" y="21" width="20" height="7" fill="#ddd"/></svg>
<svg style="position:absolute;left:1976px;top:1651px;" width="42" height="38" viewBox="0 0 42 38"><rect x="3" y="3" width="34" height="32" fill="#1c1c2c" stroke="#ddd" stroke-width="2"/><polygon points="6,32 16,14 24,24 30,16 36,32" fill="#ccc"/><ellipse cx="28" cy="10" rx="6" ry="4" fill="#eee"/><polygon points="34,28 41,33 34,38" fill="#9a9a9a"/></svg>
<svg style="position:absolute;left:1976px;top:1723px;" width="42" height="38" viewBox="0 0 42 38"><path d="M20,36 L10,18 A11,11 0 1 1 30,18 Z" fill="#e8e8e8" stroke="#333" stroke-width="2"/><circle cx="20" cy="13" r="4" fill="#888"/><polygon points="34,28 41,33 34,38" fill="#9a9a9a"/></svg>
<div style="position:absolute;left:1975px;top:1705px;width:43px;height:2px;background:#2e2e2e;"></div>
<div style="position:absolute;left:1975px;top:1855px;width:43px;height:2px;background:#2e2e2e;"></div>
<svg style="position:absolute;left:1976px;top:1868px;" width="42" height="38" viewBox="0 0 42 38"><circle cx="20" cy="19" r="15" fill="#1e2a2a" stroke="#eee" stroke-width="3"/><text x="20" y="27" font-family="Liberation Serif" font-style="italic" font-weight="bold" font-size="22" fill="#eee" text-anchor="middle">i</text></svg>
<svg style="position:absolute;left:1976px;top:1915px;" width="42" height="38" viewBox="0 0 42 38"><rect x="4" y="14" width="10" height="9" fill="#ddd"/><rect x="4" y="25" width="10" height="9" fill="#ddd"/><rect x="16" y="25" width="10" height="9" fill="#ddd"/><rect x="16" y="4" width="20" height="19" fill="#eee" stroke="#e8c820" stroke-width="4"/></svg>
<svg style="position:absolute;left:1976px;top:1965px;" width="42" height="38" viewBox="0 0 42 38"><rect x="2" y="2" width="36" height="34" fill="#f0f0f0" stroke="#333" stroke-width="2"/><path d="M4,19 Q20,4 36,19 Q20,32 4,19Z" fill="#fff" stroke="#111" stroke-width="3"/><circle cx="20" cy="19" r="6" fill="#111"/><polygon points="34,28 41,33 34,38" fill="#9a9a9a"/></svg>
<div style="position:absolute;left:2035px;top:246px;width:1677px;height:39px;background:#2c2c2c;"></div>
<div style="position:absolute;left:2035px;top:247px;width:174px;height:38px;background:#474747;"></div>
<div style="position:absolute;top:253.5px;height:25px;line-height:25px;font-family:'Liberation Sans', sans-serif;font-size:19.5px;color:#d2d2d2;font-weight:normal;font-style:italic;white-space:pre;left:2048.0px;">Set_Orient2</div>
<svg style="position:absolute;left:2186.5px;top:259.5px;" width="13" height="13" viewBox="0 0 13 13"><path d="M2,2 L11,11 M11,2 L2,11" stroke="#e6e6e6" stroke-width="3.2" stroke-linecap="round"/></svg>
<div style="position:absolute;left:2209px;top:247px;width:151px;height:38px;background:#2e2e2e;border-right:2px solid #1c1c1c;box-sizing:border-box;"></div>
<div style="position:absolute;top:253.5px;height:25px;line-height:25px;font-family:'Liberation Sans', sans-serif;font-size:19.5px;color:#d2d2d2;font-weight:normal;font-style:normal;white-space:pre;left:2222.0px;">Take List</div>
<svg style="position:absolute;left:2336.5px;top:259.5px;" width="13" height="13" viewBox="0 0 13 13"><path d="M2,2 L11,11 M11,2 L2,11" stroke="#e6e6e6" stroke-width="3.2" stroke-linecap="round"/></svg>
<div style="position:absolute;left:2360px;top:247px;width:248px;height:38px;background:#2e2e2e;border-right:2px solid #1c1c1c;box-sizing:border-box;"></div>
<div style="position:absolute;top:253.5px;height:25px;line-height:25px;font-family:'Liberation Sans', sans-serif;font-size:19.5px;color:#d2d2d2;font-weight:normal;font-style:normal;white-space:pre;left:2373.0px;">Performance Monitor</div>
<svg style="position:absolute;left:2584.5px;top:259.5px;" width="13" height="13" viewBox="0 0 13 13"><path d="M2,2 L11,11 M11,2 L2,11" stroke="#e6e6e6" stroke-width="3.2" stroke-linecap="round"/></svg>
<div style="position:absolute;left:2621.0px;top:263.75px;width:20.0px;height:4.5px;background:#e8e8e8;"></div>
<div style="position:absolute;left:2628.75px;top:256.0px;width:4.5px;height:20.0px;background:#e8e8e8;"></div>
<div style="position:absolute;left:3646px;top:253px;width:24px;height:24px;background:#1c1c28;"></div>
<div style="position:absolute;left:3648px;top:257px;width:20px;height:19px;background:#d8d8d8;background:linear-gradient(135deg,#f0f0f0,#c8c8c8);"></div>
<svg style="position:absolute;left:3686.5px;top:259.5px;" width="15" height="11" viewBox="0 0 15 11"><polygon points="0,0 15,0 7.5,11" fill="#e0e0e0"/></svg>
<div style="position:absolute;left:2035px;top:285px;width:1677px;height:68px;background:#3b3b3b;background:linear-gradient(#4a4a4a 0px,#404040 10px,#3b3b3b 30px);"></div>
<svg style="position:absolute;left:2038px;top:295px;" width="48" height="46" viewBox="0 0 48 46"><polygon points="2,20 20,4 20,13 38,13 38,28 20,28 20,38" fill="#d0d0d0" stroke="#1c1c2c" stroke-width="3"/><polygon points="34,36 42,42 34,46" fill="#9a9a9a"/></svg>
<svg style="position:absolute;left:2086px;top:295px;" width="48" height="46" viewBox="0 0 48 46"><polygon points="44,20 26,4 26,13 8,13 8,28 26,28 26,38" fill="#555" stroke="#333" stroke-width="2"/></svg>
<div style="position:absolute;left:2144px;top:294px;width:1460px;height:48px;background:#2f2f2f;border:2px solid #141414;box-sizing:border-box;"></div>
<svg style="position:absolute;left:2150px;top:299px;" width="38" height="36" viewBox="0 0 38 36"><rect x="2" y="14" width="34" height="21" fill="#4a5258" stroke="#1a1a1a"/><polygon points="2,12 34,4 35,9 3,17" fill="#e8e8e8" stroke="#222"/><path d="M8,10 L12,15 M16,8 L20,13 M24,6 L28,11" stroke="#111" stroke-width="3"/><path d="M6,24 L30,24 M6,29 L26,29" stroke="#d0d0d0" stroke-width="1.5"/></svg>
<div style="position:absolute;top:304.0px;height:28px;line-height:28px;font-family:'Liberation Sans', sans-serif;font-size:22px;color:#e0e0e0;font-weight:normal;font-style:normal;white-space:pre;left:2195.0px;">obj</div>
<svg style="position:absolute;left:2233px;top:296px;" width="14" height="44" viewBox="0 0 14 44"><path d="M2,0 L12,22.0 L2,44" stroke="#191919" stroke-width="2" fill="none"/></svg>
<svg style="position:absolute;left:2250px;top:298px;" width="42" height="40" viewBox="0 0 42 40"><rect x="3" y="6" width="12" height="24" fill="#4a78c8"/><ellipse cx="9" cy="6" rx="6" ry="3" fill="#a0c0f0"/><circle cx="30" cy="20" r="10" fill="#d82020"/><polygon points="20,12 32,36 8,36" fill="#f0d020"/></svg>
<div style="position:absolute;top:303.5px;height:29px;line-height:29px;font-family:'Liberation Sans', sans-serif;font-size:22.5px;color:#e0e0e0;font-weight:normal;font-style:normal;white-space:pre;left:2299.0px;">01_Create_Flower</div>
<div style="position:absolute;left:3584px;top:296px;width:18px;height:44px;background:#262626;"></div>
<svg style="position:absolute;left:3587.5px;top:312.5px;" width="11" height="11" viewBox="0 0 11 11"><polygon points="0,0 11,0 5.5,11" fill="#8a8a8a"/></svg>
<svg style="position:absolute;left:3619px;top:301px;" width="40" height="36" viewBox="0 0 40 36"><polygon points="0,18 14,14 14,22" fill="#e0e0e0"/><polygon points="14,6 22,10 30,12 30,24 22,26 14,30" fill="#d8d8d8" stroke="#333"/><rect x="30" y="8" width="6" height="20" fill="#bbb" stroke="#333"/></svg>
<svg style="position:absolute;left:3665px;top:298px;" width="42" height="42" viewBox="0 0 42 42"><circle cx="21" cy="21" r="19" fill="none" stroke="#5a80c0" stroke-width="3.5"/><circle cx="21" cy="21" r="12" fill="none" stroke="#4a70b0" stroke-width="2"/><circle cx="21" cy="21" r="5" fill="#3a70d0"/></svg>
<div style="position:absolute;left:2035px;top:353px;width:1677px;height:50px;background:#3c3c3c;"></div>
<svg style="position:absolute;left:2040px;top:356px;transform:scale(1.0);transform-origin:0 0;" width="46" height="44" viewBox="0 0 46 44"><path d="M4,30 Q2,22 12,20 Q16,6 30,8 Q40,10 40,20 Q44,26 38,32 Q20,40 4,30Z" fill="#e0c030" stroke="#6a5010" stroke-width="1.5"/><ellipse cx="20" cy="28" rx="9" ry="4" fill="#111"/><polygon points="14,6 18,12 24,8 20,14 24,18 18,16 14,20 16,14 10,12 16,12" fill="#eee"/><rect x="26" y="26" width="14" height="10" fill="#ddd"/><polygon points="28,36 22,42 32,36" fill="#ddd"/></svg>
<div style="position:absolute;top:364.0px;height:28px;line-height:28px;font-family:'Liberation Sans', sans-serif;font-size:22px;color:#dcdcdc;font-weight:bold;font-style:normal;white-space:pre;left:2088.0px;">Attribute Wrangle</div>
<div style="position:absolute;left:2285px;top:360px;width:1212px;height:37px;background:#121212;"></div>
<div style="position:absolute;top:364.0px;height:29px;line-height:29px;font-family:'Liberation Mono', monospace;font-size:23px;color:#f4f4f4;font-weight:normal;font-style:normal;white-space:pre;left:2290.0px;">Set_Orient2</div>
<svg style="position:absolute;left:3508px;top:356px;" width="44" height="44" viewBox="0 0 44 44"><g transform="translate(20,20)" fill="#ddd" stroke="#222" stroke-width="1"><rect x="-4" y="-17" width="8" height="12" rx="3" transform="rotate(0)"/><rect x="-4" y="-17" width="8" height="12" rx="3" transform="rotate(45)"/><rect x="-4" y="-17" width="8" height="12" rx="3" transform="rotate(90)"/><rect x="-4" y="-17" width="8" height="12" rx="3" transform="rotate(135)"/><rect x="-4" y="-17" width="8" height="12" rx="3" transform="rotate(180)"/><rect x="-4" y="-17" width="8" height="12" rx="3" transform="rotate(225)"/><rect x="-4" y="-17" width="8" height="12" rx="3" transform="rotate(270)"/><rect x="-4" y="-17" width="8" height="12" rx="3" transform="rotate(315)"/><circle r="11"/></g><circle cx="20" cy="20" r="5" fill="#333"/><polygon points="28,36 40,36 34,42" fill="#8a8a8a"/></svg>
<svg style="position:absolute;left:3560px;top:358px;" width="40" height="40" viewBox="0 0 40 40"><circle cx="16" cy="16" r="12" fill="#4a5a64" stroke="#ccc" stroke-width="4"/><line x1="25" y1="25" x2="36" y2="36" stroke="#ccc" stroke-width="5" stroke-linecap="round"/></svg>
<svg style="position:absolute;left:3614px;top:359px;" width="38" height="38" viewBox="0 0 38 38"><circle cx="19" cy="19" r="16" fill="#1e2a2a" stroke="#eee" stroke-width="3"/><text x="19" y="28" font-family="Liberation Serif" font-style="italic" font-weight="bold" font-size="24" fill="#eee" text-anchor="middle">i</text></svg>
<svg style="position:absolute;left:3666px;top:359px;" width="38" height="38" viewBox="0 0 38 38"><circle cx="19" cy="19" r="16" fill="#1e2a2a" stroke="#eee" stroke-width="3"/><text x="19" y="27" font-family="Liberation Sans" font-weight="bold" font-size="24" fill="#eee" text-anchor="middle">?</text></svg>
<div style="position:absolute;left:2040px;top:401px;width:1641px;height:2px;background:#1a1a1a;"></div>
<div style="position:absolute;left:2035px;top:403px;width:1646px;height:909px;background:#3c3c3c;"></div>
<div style="position:absolute;left:2035px;top:1170px;width:1646px;height:142px;background:#3a3a3a;"></div>
<div style="position:absolute;top:408.0px;height:28px;line-height:28px;font-family:'Liberation Sans', sans-serif;font-size:21.7px;color:#cfcfcf;font-weight:normal;font-style:normal;white-space:pre;left:319.0px;width:2000px;text-align:right;">Group</div>
<div style="position:absolute;left:2343px;top:404px;width:1229px;height:37px;background:#131313;border-top:1px solid #0a0a0a;border-bottom:1px solid #474747;box-sizing:border-box;"></div>
<div style="position:absolute;left:3573px;top:404px;width:41px;height:37px;background:#2e2e2e;background:linear-gradient(#343434,#282828);"></div>
<svg style="position:absolute;left:3587.5px;top:416.5px;" width="11" height="11" viewBox="0 0 11 11"><polygon points="0,0 11,0 5.5,11" fill="#8a8a8a"/></svg>
<svg style="position:absolute;left:3628px;top:404px;" width="30" height="38" viewBox="0 0 30 38"><polygon points="2,2 2,36 8,30 24,26" fill="#d8d8d0" stroke="#333" stroke-width="1"/></svg>
<div style="position:absolute;top:458.5px;height:28px;line-height:28px;font-family:'Liberation Sans', sans-serif;font-size:21.7px;color:#cfcfcf;font-weight:normal;font-style:normal;white-space:pre;left:319.0px;width:2000px;text-align:right;">Group Type</div>
<div style="position:absolute;left:2343px;top:450px;width:241px;height:45px;background:#444;background:linear-gradient(#515151,#3e3e3e);border:1px solid #202020;box-sizing:border-box;border-radius:2px;"></div>
<div style="position:absolute;left:2561px;top:451px;width:22px;height:43px;background:#2e2e2e;background:linear-gradient(#363636,#2a2a2a);"></div>
<svg style="position:absolute;left:2565.5px;top:455.5px;" width="14" height="34" viewBox="0 0 14 34"><polygon points="1,14 13,14 7,3" fill="#aaa"/><polygon points="1,20 13,20 7,31" fill="#aaa"/></svg>
<div style="position:absolute;top:459.0px;height:27px;line-height:27px;font-family:'Liberation Sans', sans-serif;font-size:21.5px;color:#d4d4d4;font-weight:normal;font-style:normal;white-space:pre;left:2369.0px;">Guess from Group</div>
<div style="position:absolute;top:511.0px;height:28px;line-height:28px;font-family:'Liberation Sans', sans-serif;font-size:21.7px;color:#cfcfcf;font-weight:normal;font-style:normal;white-space:pre;left:319.0px;width:2000px;text-align:right;">Run Over</div>
<div style="position:absolute;left:2343px;top:502px;width:236px;height:45px;background:#444;background:linear-gradient(#515151,#3e3e3e);border:1px solid #202020;box-sizing:border-box;border-radius:2px;"></div>
<div style="position:absolute;left:2556px;top:503px;width:22px;height:43px;background:#2e2e2e;background:linear-gradient(#363636,#2a2a2a);"></div>
<svg style="position:absolute;left:2560.5px;top:507.5px;" width="14" height="34" viewBox="0 0 14 34"><polygon points="1,14 13,14 7,3" fill="#aaa"/><polygon points="1,20 13,20 7,31" fill="#aaa"/></svg>
<div style="position:absolute;top:511.0px;height:27px;line-height:27px;font-family:'Liberation Sans', sans-serif;font-size:21.5px;color:#d4d4d4;font-weight:normal;font-style:normal;white-space:pre;left:2369.0px;">Points</div>
<div style="position:absolute;top:568.5px;height:27px;line-height:27px;font-family:'Liberation Sans', sans-serif;font-size:21.5px;color:#cfcfcf;font-weight:normal;font-style:normal;white-space:pre;left:2075.0px;">VEXpression</div>
<svg style="position:absolute;left:3572px;top:556px;" width="48" height="44" viewBox="0 0 48 44"><rect x="4" y="10" width="36" height="7" fill="#ccc"/><rect x="14" y="2" width="8" height="22" fill="#eee" stroke="#555"/><path d="M30,24 L30,40 M22,32 L38,32" stroke="#fff" stroke-width="5"/></svg>
<div style="position:absolute;left:3622px;top:555px;width:39px;height:40px;background:#333;background:linear-gradient(#3a3a3a,#2c2c2c);border:1px solid #222;box-sizing:border-box;"></div>
<svg style="position:absolute;left:3635.5px;top:569.5px;" width="11" height="11" viewBox="0 0 11 11"><polygon points="0,0 11,0 5.5,11" fill="#9a9a9a"/></svg>
<div style="position:absolute;left:2071px;top:601px;width:1565px;height:363px;background:#121212;"></div>
<div style="position:absolute;left:2071px;top:601px;width:56px;height:363px;background:#161616;"></div>
<div style="position:absolute;top:603.0px;height:30px;line-height:30px;font-family:'Liberation Sans', sans-serif;font-size:23.5px;color:#bdbdbd;font-weight:normal;font-style:normal;white-space:pre;left:119.0px;width:2000px;text-align:right;">1</div>
<div style="position:absolute;left:2131px;top:603.0px;height:30px;line-height:30px;font-family:'Liberation Mono',monospace;font-size:23.5px;font-weight:bold;white-space:pre;"><span style="color:#e87ae8">matrix3</span><span style="color:#f4f4f4"> xform = </span><span style="color:#5cc8c8">ident</span><span style="color:#f4f4f4">();</span></div>
<div style="position:absolute;top:633.0px;height:30px;line-height:30px;font-family:'Liberation Sans', sans-serif;font-size:23.5px;color:#bdbdbd;font-weight:normal;font-style:normal;white-space:pre;left:119.0px;width:2000px;text-align:right;">2</div>
<div style="position:absolute;left:2131px;top:633.0px;height:30px;line-height:30px;font-family:'Liberation Mono',monospace;font-size:23.5px;font-weight:bold;white-space:pre;"><span style="color:#e8e070">//rotate(xform, 1, set(0,1,0));</span></div>
<div style="position:absolute;top:663.0px;height:30px;line-height:30px;font-family:'Liberation Sans', sans-serif;font-size:23.5px;color:#bdbdbd;font-weight:normal;font-style:normal;white-space:pre;left:119.0px;width:2000px;text-align:right;">3</div>
<div style="position:absolute;left:2131px;top:663.0px;height:30px;line-height:30px;font-family:'Liberation Mono',monospace;font-size:23.5px;font-weight:bold;white-space:pre;"><span style="color:#f4f4f4">xform *= </span><span style="color:#5cc8c8">qconvert</span><span style="color:#f4f4f4">(</span><span style="color:#e0b478">p@orient</span><span style="color:#f4f4f4">);</span></div>
<div style="position:absolute;top:693.0px;height:30px;line-height:30px;font-family:'Liberation Sans', sans-serif;font-size:23.5px;color:#bdbdbd;font-weight:normal;font-style:normal;white-space:pre;left:119.0px;width:2000px;text-align:right;">4</div>
<div style="position:absolute;left:2131px;top:693.0px;height:30px;line-height:30px;font-family:'Liberation Mono',monospace;font-size:23.5px;font-weight:bold;white-space:pre;"><span style="color:#e0b478">p@orient</span><span style="color:#f4f4f4"> = </span><span style="color:#5cc8c8">quaternion</span><span style="color:#f4f4f4">(xform);</span></div>
<div style="position:absolute;top:723.0px;height:30px;line-height:30px;font-family:'Liberation Sans', sans-serif;font-size:23.5px;color:#bdbdbd;font-weight:normal;font-style:normal;white-space:pre;left:119.0px;width:2000px;text-align:right;">5</div>
<div style="position:absolute;top:753.0px;height:30px;line-height:30px;font-family:'Liberation Sans', sans-serif;font-size:23.5px;color:#bdbdbd;font-weight:normal;font-style:normal;white-space:pre;left:119.0px;width:2000px;text-align:right;">6</div>
<div style="position:absolute;left:2131px;top:753.0px;height:30px;line-height:30px;font-family:'Liberation Mono',monospace;font-size:23.5px;font-weight:bold;white-space:pre;"><span style="color:#e87ae8">float</span><span style="color:#f4f4f4"> angle = </span><span style="color:#5cc8c8">radians</span><span style="color:#f4f4f4">(</span><span style="color:#5cc8c8">chf</span><span style="color:#f4f4f4">(</span><span style="color:#78d078">&#x27;angle&#x27;</span><span style="color:#f4f4f4">));</span></div>
<div style="position:absolute;top:783.0px;height:30px;line-height:30px;font-family:'Liberation Sans', sans-serif;font-size:23.5px;color:#bdbdbd;font-weight:normal;font-style:normal;white-space:pre;left:119.0px;width:2000px;text-align:right;">7</div>
<div style="position:absolute;left:2131px;top:783.0px;height:30px;line-height:30px;font-family:'Liberation Mono',monospace;font-size:23.5px;font-weight:bold;white-space:pre;"><span style="color:#e87ae8">vector</span><span style="color:#f4f4f4"> axis = </span><span style="color:#5cc8c8">normalize</span><span style="color:#f4f4f4">(</span><span style="color:#5cc8c8">chv</span><span style="color:#f4f4f4">(</span><span style="color:#78d078">&#x27;axis&#x27;</span><span style="color:#f4f4f4">));</span></div>
<div style="position:absolute;top:813.0px;height:30px;line-height:30px;font-family:'Liberation Sans', sans-serif;font-size:23.5px;color:#bdbdbd;font-weight:normal;font-style:normal;white-space:pre;left:119.0px;width:2000px;text-align:right;">8</div>
<div style="position:absolute;top:843.0px;height:30px;line-height:30px;font-family:'Liberation Sans', sans-serif;font-size:23.5px;color:#bdbdbd;font-weight:normal;font-style:normal;white-space:pre;left:119.0px;width:2000px;text-align:right;">9</div>
<div style="position:absolute;left:2131px;top:843.0px;height:30px;line-height:30px;font-family:'Liberation Mono',monospace;font-size:23.5px;font-weight:bold;white-space:pre;"><span style="color:#e87ae8">vector4</span><span style="color:#f4f4f4"> rotation = </span><span style="color:#5cc8c8">quaternion</span><span style="color:#f4f4f4">(angle, axis);</span></div>
<div style="position:absolute;top:873.0px;height:30px;line-height:30px;font-family:'Liberation Sans', sans-serif;font-size:23.5px;color:#bdbdbd;font-weight:normal;font-style:normal;white-space:pre;left:119.0px;width:2000px;text-align:right;">10</div>
<div style="position:absolute;top:903.0px;height:30px;line-height:30px;font-family:'Liberation Sans', sans-serif;font-size:23.5px;color:#bdbdbd;font-weight:normal;font-style:normal;white-space:pre;left:119.0px;width:2000px;text-align:right;">11</div>
<div style="position:absolute;left:2131px;top:903.0px;height:30px;line-height:30px;font-family:'Liberation Mono',monospace;font-size:23.5px;font-weight:bold;white-space:pre;"><span style="color:#e0b478">p@orient</span><span style="color:#f4f4f4"> = </span><span style="color:#5cc8c8">qmultiply</span><span style="color:#f4f4f4">(</span><span style="color:#e0b478">p@orient</span><span style="color:#f4f4f4">, rotation);</span></div>
<div style="position:absolute;left:3636px;top:601px;width:28px;height:290px;background:#2d2d2d;border-left:1px solid #1a1a1a;box-sizing:border-box;"></div>
<svg style="position:absolute;left:3643px;top:740px;" width="14" height="14" viewBox="0 0 14 14"><rect x="0" y="0" width="2" height="2" fill="#111"/><rect x="0" y="4" width="2" height="2" fill="#111"/><rect x="0" y="8" width="2" height="2" fill="#111"/><rect x="0" y="12" width="2" height="2" fill="#111"/><rect x="4" y="0" width="2" height="2" fill="#111"/><rect x="4" y="4" width="2" height="2" fill="#111"/><rect x="4" y="8" width="2" height="2" fill="#111"/><rect x="4" y="12" width="2" height="2" fill="#111"/><rect x="8" y="0" width="2" height="2" fill="#111"/><rect x="8" y="4" width="2" height="2" fill="#111"/><rect x="8" y="8" width="2" height="2" fill="#111"/><rect x="8" y="12" width="2" height="2" fill="#111"/><rect x="12" y="0" width="2" height="2" fill="#111"/><rect x="12" y="4" width="2" height="2" fill="#111"/><rect x="12" y="8" width="2" height="2" fill="#111"/><rect x="12" y="12" width="2" height="2" fill="#111"/></svg>
<div style="position:absolute;left:3636px;top:891px;width:28px;height:36px;background:#3a3a3a;border:1px solid #2e2e2e;box-sizing:border-box;"></div>
<svg style="position:absolute;left:3643.5px;top:905.0px;" width="13" height="10" viewBox="0 0 13 10"><polygon points="0,10 13,10 6.5,0" fill="#555"/></svg>
<div style="position:absolute;left:3636px;top:927px;width:28px;height:37px;background:#373737;"></div>
<svg style="position:absolute;left:3643.5px;top:940.0px;" width="13" height="10" viewBox="0 0 13 10"><polygon points="0,0 13,0 6.5,10" fill="#4a4a4a"/></svg>
<div style="position:absolute;left:3636px;top:964px;width:28px;height:28px;background:#3a3a3a;"></div>
<svg style="position:absolute;left:3577.0px;top:972.0px;" width="10" height="12" viewBox="0 0 10 12"><polygon points="10,0 10,12 0,6.0" fill="#4a4a4a"/></svg>
<svg style="position:absolute;left:3612.0px;top:972.0px;" width="10" height="12" viewBox="0 0 10 12"><polygon points="0,0 0,12 10,6.0" fill="#4a4a4a"/></svg>
<div style="position:absolute;left:3564px;top:964px;width:72px;height:28px;background:#383838;"></div>
<div style="position:absolute;left:2071px;top:993px;width:1593px;height:43px;background:#3a3a3a;border:2px solid #adadad;box-sizing:border-box;"></div>
<div style="position:absolute;left:3453px;top:993px;width:3px;height:43px;background:#adadad;"></div>
<div style="position:absolute;top:1001.5px;height:27px;line-height:27px;font-family:'Liberation Sans', sans-serif;font-size:21.5px;color:#d8d8d8;font-weight:normal;font-style:normal;white-space:pre;left:2556.0px;width:2000px;text-align:center;">Ln 1, Col 1</div>
<div style="position:absolute;top:1080.0px;height:28px;line-height:28px;font-family:'Liberation Sans', sans-serif;font-size:21.7px;color:#cfcfcf;font-weight:normal;font-style:normal;white-space:pre;left:319.0px;width:2000px;text-align:right;">Attributes to Create</div>
<div style="position:absolute;left:2343px;top:1076px;width:1321px;height:36px;background:#131313;border-top:1px solid #0a0a0a;border-bottom:1px solid #474747;box-sizing:border-box;"></div>
<div style="position:absolute;top:1076.5px;height:31px;line-height:31px;font-family:'Liberation Mono', monospace;font-size:24px;color:#eee;font-weight:normal;font-style:normal;white-space:pre;left:2349.0px;">*</div>
<div style="position:absolute;left:2341px;top:1124px;width:27px;height:26px;background:#151515;border:1px solid #2a2a2a;box-sizing:border-box;"></div>
<div style="position:absolute;top:1123.0px;height:28px;line-height:28px;font-family:'Liberation Sans', sans-serif;font-size:21.7px;color:#d4d4d4;font-weight:normal;font-style:normal;white-space:pre;left:2384.0px;">Enforce Prototypes</div>
<div style="position:absolute;top:1183.0px;height:28px;line-height:28px;font-family:'Liberation Sans', sans-serif;font-size:21.7px;color:#cfcfcf;font-weight:normal;font-style:normal;white-space:pre;left:319.0px;width:2000px;text-align:right;">Edge Mult</div>
<div style="position:absolute;left:2343px;top:1176px;width:147px;height:42px;background:#131313;border-top:1px solid #0a0a0a;border-bottom:1px solid #474747;box-sizing:border-box;"></div>
<div style="position:absolute;top:1181.5px;height:31px;line-height:31px;font-family:'Liberation Mono', monospace;font-size:24px;color:#eee;font-weight:normal;font-style:normal;white-space:pre;left:2348.0px;">0</div>
<div style="position:absolute;left:2500px;top:1195px;width:1162px;height:4px;background:#050505;border-radius:2px;"></div>
<div style="position:absolute;left:2494px;top:1177px;width:7px;height:41px;background:#bbb;background:linear-gradient(90deg,#888,#ddd,#888);border-radius:2px;"></div>
<div style="position:absolute;top:1230.0px;height:28px;line-height:28px;font-family:'Liberation Sans', sans-serif;font-size:21.7px;color:#cfcfcf;font-weight:normal;font-style:normal;white-space:pre;left:319.0px;width:2000px;text-align:right;">Angle</div>
<div style="position:absolute;left:2343px;top:1223px;width:147px;height:42px;background:#131313;border-top:1px solid #0a0a0a;border-bottom:1px solid #474747;box-sizing:border-box;"></div>
<div style="position:absolute;top:1228.5px;height:31px;line-height:31px;font-family:'Liberation Mono', monospace;font-size:24px;color:#eee;font-weight:normal;font-style:normal;white-space:pre;left:2348.0px;">0</div>
<div style="position:absolute;left:2497px;top:1242px;width:582px;height:4px;background:#1a5ab8;border-top:1px solid #0a2a5a;border-bottom:1px solid #0a2a5a;box-sizing:border-box;"></div>
<div style="position:absolute;left:3083px;top:1242px;width:579px;height:4px;background:#050505;border-radius:2px;"></div>
<div style="position:absolute;left:3076px;top:1223px;width:7px;height:41px;background:#bbb;background:linear-gradient(90deg,#888,#ddd,#888);border-radius:2px;"></div>
<div style="position:absolute;top:1274.0px;height:28px;line-height:28px;font-family:'Liberation Sans', sans-serif;font-size:21.7px;color:#cfcfcf;font-weight:normal;font-style:normal;white-space:pre;left:319.0px;width:2000px;text-align:right;">Axis</div>
<div style="position:absolute;left:2343px;top:1270px;width:436px;height:36px;background:#131313;border-top:1px solid #0a0a0a;border-bottom:1px solid #474747;box-sizing:border-box;"></div>
<div style="position:absolute;left:2784px;top:1270px;width:438px;height:36px;background:#131313;border-top:1px solid #0a0a0a;border-bottom:1px solid #474747;box-sizing:border-box;"></div>
<div style="position:absolute;left:3227px;top:1270px;width:437px;height:36px;background:#131313;border-top:1px solid #0a0a0a;border-bottom:1px solid #474747;box-sizing:border-box;"></div>
<div style="position:absolute;top:1273.5px;height:31px;line-height:31px;font-family:'Liberation Mono', monospace;font-size:24px;color:#fff;font-weight:bold;font-style:normal;white-space:pre;left:2348.0px;">1</div>
<div style="position:absolute;top:1273.5px;height:31px;line-height:31px;font-family:'Liberation Mono', monospace;font-size:24px;color:#eee;font-weight:normal;font-style:normal;white-space:pre;left:2789.0px;">0</div>
<div style="position:absolute;top:1273.5px;height:31px;line-height:31px;font-family:'Liberation Mono', monospace;font-size:24px;color:#eee;font-weight:normal;font-style:normal;white-space:pre;left:3232.0px;">0</div>
<div style="position:absolute;left:3681px;top:403px;width:31px;height:903px;background:#2a2a2a;"></div>
<div style="position:absolute;left:3682px;top:420px;width:29px;height:814px;background:#3d3d3d;background:linear-gradient(90deg,#373737,#424242);border:1px solid #2c2c2c;box-sizing:border-box;"></div>
<svg style="position:absolute;left:3689px;top:840px;" width="14" height="14" viewBox="0 0 14 14"><rect x="0" y="0" width="2" height="2" fill="#111"/><rect x="0" y="4" width="2" height="2" fill="#111"/><rect x="0" y="8" width="2" height="2" fill="#111"/><rect x="0" y="12" width="2" height="2" fill="#111"/><rect x="4" y="0" width="2" height="2" fill="#111"/><rect x="4" y="4" width="2" height="2" fill="#111"/><rect x="4" y="8" width="2" height="2" fill="#111"/><rect x="4" y="12" width="2" height="2" fill="#111"/><rect x="8" y="0" width="2" height="2" fill="#111"/><rect x="8" y="4" width="2" height="2" fill="#111"/><rect x="8" y="8" width="2" height="2" fill="#111"/><rect x="8" y="12" width="2" height="2" fill="#111"/><rect x="12" y="0" width="2" height="2" fill="#111"/><rect x="12" y="4" width="2" height="2" fill="#111"/><rect x="12" y="8" width="2" height="2" fill="#111"/><rect x="12" y="12" width="2" height="2" fill="#111"/></svg>
<div style="position:absolute;left:3682px;top:1235px;width:29px;height:35px;background:#3a3a3a;border:1px solid #2c2c2c;box-sizing:border-box;"></div>
<svg style="position:absolute;left:3689.5px;top:1248.0px;" width="13" height="10" viewBox="0 0 13 10"><polygon points="0,10 13,10 6.5,0" fill="#777"/></svg>
<svg style="position:absolute;left:3689.5px;top:1283.0px;" width="13" height="10" viewBox="0 0 13 10"><polygon points="0,0 13,0 6.5,10" fill="#3a3a3a"/></svg>
<div style="position:absolute;left:2035px;top:1312px;width:1677px;height:13px;background:#4a4a4a;border-top:1px solid #5c5c5c;border-bottom:1px solid #2a2a2a;box-sizing:border-box;"></div>
<svg style="position:absolute;left:2806.0px;top:1315.5px;" width="12" height="7" viewBox="0 0 12 7"><polygon points="0,7 12,7 6.0,0" fill="#8a8a8a"/></svg>
<svg style="position:absolute;left:2857px;top:1315px;" width="42" height="6" viewBox="0 0 42 6"><rect x="0" y="0" width="1.5" height="1.5" fill="#222"/><rect x="0" y="3" width="1.5" height="1.5" fill="#222"/><rect x="3" y="0" width="1.5" height="1.5" fill="#222"/><rect x="3" y="3" width="1.5" height="1.5" fill="#222"/><rect x="6" y="0" width="1.5" height="1.5" fill="#222"/><rect x="6" y="3" width="1.5" height="1.5" fill="#222"/><rect x="9" y="0" width="1.5" height="1.5" fill="#222"/><rect x="9" y="3" width="1.5" height="1.5" fill="#222"/><rect x="12" y="0" width="1.5" height="1.5" fill="#222"/><rect x="12" y="3" width="1.5" height="1.5" fill="#222"/><rect x="15" y="0" width="1.5" height="1.5" fill="#222"/><rect x="15" y="3" width="1.5" height="1.5" fill="#222"/><rect x="18" y="0" width="1.5" height="1.5" fill="#222"/><rect x="18" y="3" width="1.5" height="1.5" fill="#222"/><rect x="21" y="0" width="1.5" height="1.5" fill="#222"/><rect x="21" y="3" width="1.5" height="1.5" fill="#222"/><rect x="24" y="0" width="1.5" height="1.5" fill="#222"/><rect x="24" y="3" width="1.5" height="1.5" fill="#222"/><rect x="27" y="0" width="1.5" height="1.5" fill="#222"/><rect x="27" y="3" width="1.5" height="1.5" fill="#222"/><rect x="30" y="0" width="1.5" height="1.5" fill="#222"/><rect x="30" y="3" width="1.5" height="1.5" fill="#222"/><rect x="33" y="0" width="1.5" height="1.5" fill="#222"/><rect x="33" y="3" width="1.5" height="1.5" fill="#222"/><rect x="36" y="0" width="1.5" height="1.5" fill="#222"/><rect x="36" y="3" width="1.5" height="1.5" fill="#222"/><rect x="39" y="0" width="1.5" height="1.5" fill="#222"/><rect x="39" y="3" width="1.5" height="1.5" fill="#222"/></svg>
<svg style="position:absolute;left:2931.0px;top:1315.5px;" width="12" height="7" viewBox="0 0 12 7"><polygon points="0,0 12,0 6.0,7" fill="#8a8a8a"/></svg>
<div style="position:absolute;left:2035px;top:1325px;width:1677px;height:38px;background:#2c2c2c;"></div>
<div style="position:absolute;left:2035px;top:1325px;width:262px;height:38px;background:#474747;"></div>
<div style="position:absolute;top:1331.5px;height:25px;line-height:25px;font-family:'Liberation Sans', sans-serif;font-size:19.5px;color:#d2d2d2;font-weight:normal;font-style:italic;white-space:pre;left:2048.0px;">/obj/01_Create_Flower</div>
<svg style="position:absolute;left:2274.5px;top:1337.5px;" width="13" height="13" viewBox="0 0 13 13"><path d="M2,2 L11,11 M11,2 L2,11" stroke="#e6e6e6" stroke-width="3.2" stroke-linecap="round"/></svg>
<div style="position:absolute;left:2297px;top:1325px;width:157px;height:38px;background:#2e2e2e;border-right:2px solid #1c1c1c;box-sizing:border-box;"></div>
<div style="position:absolute;top:1331.5px;height:25px;line-height:25px;font-family:'Liberation Sans', sans-serif;font-size:19.5px;color:#d2d2d2;font-weight:normal;font-style:normal;white-space:pre;left:2310.0px;">Tree View</div>
<svg style="position:absolute;left:2430.5px;top:1337.5px;" width="13" height="13" viewBox="0 0 13 13"><path d="M2,2 L11,11 M11,2 L2,11" stroke="#e6e6e6" stroke-width="3.2" stroke-linecap="round"/></svg>
<div style="position:absolute;left:2454px;top:1325px;width:204px;height:38px;background:#2e2e2e;border-right:2px solid #1c1c1c;box-sizing:border-box;"></div>
<div style="position:absolute;top:1331.5px;height:25px;line-height:25px;font-family:'Liberation Sans', sans-serif;font-size:19.5px;color:#d2d2d2;font-weight:normal;font-style:normal;white-space:pre;left:2467.0px;">Material Palette</div>
<svg style="position:absolute;left:2634.5px;top:1337.5px;" width="13" height="13" viewBox="0 0 13 13"><path d="M2,2 L11,11 M11,2 L2,11" stroke="#e6e6e6" stroke-width="3.2" stroke-linecap="round"/></svg>
<div style="position:absolute;left:2658px;top:1325px;width:190px;height:38px;background:#2e2e2e;border-right:2px solid #1c1c1c;box-sizing:border-box;"></div>
<div style="position:absolute;top:1331.5px;height:25px;line-height:25px;font-family:'Liberation Sans', sans-serif;font-size:19.5px;color:#d2d2d2;font-weight:normal;font-style:normal;white-space:pre;left:2671.0px;">Asset Browser</div>
<svg style="position:absolute;left:2824.5px;top:1337.5px;" width="13" height="13" viewBox="0 0 13 13"><path d="M2,2 L11,11 M11,2 L2,11" stroke="#e6e6e6" stroke-width="3.2" stroke-linecap="round"/></svg>
<div style="position:absolute;left:2861.0px;top:1341.75px;width:20.0px;height:4.5px;background:#e8e8e8;"></div>
<div style="position:absolute;left:2868.75px;top:1334.0px;width:4.5px;height:20.0px;background:#e8e8e8;"></div>
<div style="position:absolute;left:3646px;top:1332px;width:24px;height:24px;background:#1c1c28;"></div>
<div style="position:absolute;left:3648px;top:1336px;width:20px;height:19px;background:#d8d8d8;background:linear-gradient(135deg,#f0f0f0,#c8c8c8);"></div>
<svg style="position:absolute;left:3686.5px;top:1338.5px;" width="15" height="11" viewBox="0 0 15 11"><polygon points="0,0 15,0 7.5,11" fill="#e0e0e0"/></svg>
<div style="position:absolute;left:2035px;top:1363px;width:1677px;height:68px;background:#3b3b3b;background:linear-gradient(#4a4a4a 0px,#404040 10px,#3b3b3b 30px);"></div>
<svg style="position:absolute;left:2038px;top:1375px;" width="48" height="46" viewBox="0 0 48 46"><polygon points="2,20 20,4 20,13 38,13 38,28 20,28 20,38" fill="#d0d0d0" stroke="#1c1c2c" stroke-width="3"/><polygon points="34,36 42,42 34,46" fill="#9a9a9a"/></svg>
<svg style="position:absolute;left:2086px;top:1375px;" width="48" height="46" viewBox="0 0 48 46"><polygon points="44,20 26,4 26,13 8,13 8,28 26,28 26,38" fill="#555" stroke="#333" stroke-width="2"/></svg>
<div style="position:absolute;left:2144px;top:1374px;width:1460px;height:47px;background:#2f2f2f;border:2px solid #141414;box-sizing:border-box;"></div>
<svg style="position:absolute;left:2150px;top:1379px;" width="38" height="36" viewBox="0 0 38 36"><rect x="2" y="14" width="34" height="21" fill="#4a5258" stroke="#1a1a1a"/><polygon points="2,12 34,4 35,9 3,17" fill="#e8e8e8" stroke="#222"/><path d="M8,10 L12,15 M16,8 L20,13 M24,6 L28,11" stroke="#111" stroke-width="3"/><path d="M6,24 L30,24 M6,29 L26,29" stroke="#d0d0d0" stroke-width="1.5"/></svg>
<div style="position:absolute;top:1383.5px;height:28px;line-height:28px;font-family:'Liberation Sans', sans-serif;font-size:22px;color:#e0e0e0;font-weight:normal;font-style:normal;white-space:pre;left:2195.0px;">obj</div>
<svg style="position:absolute;left:2233px;top:1376px;" width="14" height="43" viewBox="0 0 14 43"><path d="M2,0 L12,21.5 L2,43" stroke="#191919" stroke-width="2" fill="none"/></svg>
<svg style="position:absolute;left:2250px;top:1378px;" width="42" height="40" viewBox="0 0 42 40"><rect x="3" y="6" width="12" height="24" fill="#4a78c8"/><ellipse cx="9" cy="6" rx="6" ry="3" fill="#a0c0f0"/><circle cx="30" cy="20" r="10" fill="#d82020"/><polygon points="20,12 32,36 8,36" fill="#f0d020"/></svg>
<div style="position:absolute;top:1383.0px;height:29px;line-height:29px;font-family:'Liberation Sans', sans-serif;font-size:22.5px;color:#e0e0e0;font-weight:normal;font-style:normal;white-space:pre;left:2299.0px;">01_Create_Flower</div>
<div style="position:absolute;left:3584px;top:1376px;width:18px;height:43px;background:#262626;"></div>
<svg style="position:absolute;left:3587.5px;top:1392.0px;" width="11" height="11" viewBox="0 0 11 11"><polygon points="0,0 11,0 5.5,11" fill="#8a8a8a"/></svg>
<svg style="position:absolute;left:3618px;top:1380px;" width="40" height="36" viewBox="0 0 40 36"><polygon points="0,18 14,14 14,22" fill="#e0e0e0"/><polygon points="14,6 22,10 30,12 30,24 22,26 14,30" fill="#d8d8d8" stroke="#333"/><rect x="30" y="8" width="6" height="20" fill="#bbb" stroke="#333"/></svg>
<svg style="position:absolute;left:3665px;top:1377px;" width="42" height="42" viewBox="0 0 42 42"><circle cx="21" cy="21" r="19" fill="none" stroke="#5a80c0" stroke-width="3.5"/><circle cx="21" cy="21" r="12" fill="none" stroke="#4a70b0" stroke-width="2"/><circle cx="21" cy="21" r="5" fill="#3a70d0"/></svg>
<div style="position:absolute;left:2035px;top:1431px;width:1677px;height:53px;background:#2f2f2f;border-top:2px solid #1a1a1a;box-sizing:border-box;"></div>
<div style="position:absolute;left:2035px;top:1432px;width:21px;height:52px;background:#444;background:linear-gradient(#4e4e4e,#3a3a3a);border-right:2px solid #1a1a1a;box-sizing:border-box;"></div>
<svg style="position:absolute;left:2040.0px;top:1438.0px;" width="12" height="10" viewBox="0 0 12 10"><polygon points="0,10 12,10 6.0,0" fill="#0a0a0a"/></svg>
<div style="position:absolute;top:1443.0px;height:30px;line-height:30px;font-family:'Liberation Sans', sans-serif;font-size:23.5px;color:#d4d4d4;font-weight:normal;font-style:normal;white-space:pre;left:2073.0px;">Add</div>
<div style="position:absolute;top:1443.0px;height:30px;line-height:30px;font-family:'Liberation Sans', sans-serif;font-size:23.5px;color:#d4d4d4;font-weight:normal;font-style:normal;white-space:pre;left:2146.0px;">Edit</div>
<div style="position:absolute;top:1443.0px;height:30px;line-height:30px;font-family:'Liberation Sans', sans-serif;font-size:23.5px;color:#d4d4d4;font-weight:normal;font-style:normal;white-space:pre;left:2219.0px;">Go</div>
<div style="position:absolute;top:1443.0px;height:30px;line-height:30px;font-family:'Liberation Sans', sans-serif;font-size:23.5px;color:#d4d4d4;font-weight:normal;font-style:normal;white-space:pre;left:2279.0px;">View</div>
<div style="position:absolute;top:1443.0px;height:30px;line-height:30px;font-family:'Liberation Sans', sans-serif;font-size:23.5px;color:#d4d4d4;font-weight:normal;font-style:normal;white-space:pre;left:2360.0px;">Tools</div>
<div style="position:absolute;top:1443.0px;height:30px;line-height:30px;font-family:'Liberation Sans', sans-serif;font-size:23.5px;color:#d4d4d4;font-weight:normal;font-style:normal;white-space:pre;left:2451.0px;">Layout</div>
<div style="position:absolute;top:1443.0px;height:30px;line-height:30px;font-family:'Liberation Sans', sans-serif;font-size:23.5px;color:#d4d4d4;font-weight:normal;font-style:normal;white-space:pre;left:2556.0px;">Help</div>
<svg style="position:absolute;left:3085px;top:1436px;" width="44" height="44" viewBox="0 0 44 44"><path d="M6,38 L26,18" stroke="#ccc" stroke-width="6"/><circle cx="30" cy="12" r="8" fill="none" stroke="#ccc" stroke-width="5"/><path d="M6,6 L38,38" stroke="#bbb" stroke-width="5"/><circle cx="36" cy="36" r="3" fill="#444"/></svg>
<svg style="position:absolute;left:3138px;top:1436px;" width="34" height="44" viewBox="0 0 34 44"><rect x="2" y="2" width="8" height="8" fill="#eee"/><path d="M6,10 L6,38 M6,18 L16,18 M6,28 L16,28 M6,38 L16,38" stroke="#bbb" stroke-width="2"/><rect x="16" y="14" width="10" height="8" fill="#bcc"/><rect x="16" y="24" width="10" height="8" fill="#bcc"/><rect x="16" y="34" width="10" height="8" fill="#bcc"/></svg>
<svg style="position:absolute;left:3178px;top:1434px;" width="46" height="48" viewBox="0 0 46 48"><rect x="3" y="3" width="40" height="42" fill="#ccd8cc" stroke="#222" stroke-width="2"/><rect x="5" y="6" width="36" height="4" fill="#eee"/><rect x="5" y="14" width="36" height="4" fill="#eee"/><rect x="5" y="22" width="36" height="4" fill="#eee"/><rect x="5" y="30" width="36" height="4" fill="#eee"/><rect x="5" y="38" width="36" height="4" fill="#eee"/></svg>
<svg style="position:absolute;left:3259px;top:1435px;" width="46" height="46" viewBox="0 0 46 46"><rect x="2" y="2" width="42" height="42" fill="#eee" stroke="#222" stroke-width="2"/><rect x="5" y="5" width="10" height="10" fill="#d02020"/><rect x="18" y="5" width="10" height="10" fill="#e87020"/><rect x="31" y="5" width="10" height="10" fill="#e0c020"/><rect x="5" y="18" width="10" height="10" fill="#2050a0"/><rect x="18" y="18" width="10" height="10" fill="#40b040"/><rect x="31" y="18" width="10" height="10" fill="#6a9ad8"/><rect x="5" y="31" width="10" height="10" fill="#111"/><rect x="18" y="31" width="10" height="10" fill="#888"/><rect x="31" y="31" width="10" height="10" fill="#cdc"/></svg>
<svg style="position:absolute;left:3309px;top:1435px;" width="46" height="46" viewBox="0 0 46 46"><rect x="2" y="2" width="42" height="42" fill="#333" stroke="#aaa" stroke-width="2"/><rect x="8" y="10" width="12" height="6" fill="#bbb"/><ellipse cx="32" cy="13" rx="6" ry="4" fill="#bbb"/><polygon points="8,28 20,22 18,30" fill="#bbb"/><polygon points="28,30 36,22 40,30" fill="#bbb"/><path d="M8,38 L20,34 L20,40Z M26,36 L40,36 L40,40Z" fill="#bbb"/></svg>
<svg style="position:absolute;left:3388px;top:1435px;" width="48" height="46" viewBox="0 0 48 46"><rect x="2" y="2" width="44" height="42" fill="#e8e8e8" stroke="#222" stroke-width="2"/><rect x="2" y="2" width="44" height="6" fill="#bbb"/><rect x="10" y="14" width="18" height="10" fill="none" stroke="#111" stroke-width="3"/><rect x="20" y="28" width="20" height="10" fill="none" stroke="#111" stroke-width="3"/></svg>
<svg style="position:absolute;left:3437px;top:1433px;" width="48" height="50" viewBox="0 0 48 50"><path d="M4,4 L44,4 L44,34 L32,46 L4,46 Z" fill="#e8d050" stroke="#a08020" stroke-width="2"/><path d="M10,12 L36,12 M10,20 L30,20 M10,28 L26,28" stroke="#222" stroke-width="4"/></svg>
<svg style="position:absolute;left:3485px;top:1433px;" width="50" height="50" viewBox="0 0 50 50"><rect x="3" y="3" width="40" height="40" fill="#6ab0e0" stroke="#2a60a0" stroke-width="2"/><circle cx="14" cy="14" r="5" fill="#e8e020"/><polygon points="4,42 18,22 28,32 42,18 42,42" fill="#e8f0f8"/><path d="M38,36 L38,50 M31,43 L45,43" stroke="#fff" stroke-width="5"/><path d="M38,36 L38,50 M31,43 L45,43" stroke="#111" stroke-width="2"/></svg>
<svg style="position:absolute;left:3534px;top:1436px;" width="48" height="44" viewBox="0 0 48 44"><polygon points="4,14 24,4 44,14 24,22" fill="#f0a050"/><polygon points="6,16 42,16 40,38 8,38" fill="#d88030" stroke="#7a4010" stroke-width="2"/><rect x="14" y="22" width="20" height="6" fill="#f0c080"/></svg>
<svg style="position:absolute;left:3618px;top:1435px;" width="46" height="46" viewBox="0 0 46 46"><circle cx="18" cy="18" r="13" fill="#3a4a50" stroke="#ccc" stroke-width="4"/><line x1="28" y1="28" x2="42" y2="42" stroke="#ccc" stroke-width="5" stroke-linecap="round"/></svg>
<svg style="position:absolute;left:3664px;top:1435px;" width="46" height="46" viewBox="0 0 46 46"><rect x="2" y="2" width="42" height="42" fill="#f0f0f0" stroke="#333" stroke-width="2"/><path d="M4,24 Q23,6 42,24 Q23,38 4,24Z" fill="#fff" stroke="#111" stroke-width="3"/><circle cx="23" cy="23" r="7" fill="#111"/></svg>
<div style="position:absolute;left:2035px;top:1484px;width:1288px;height:526px;background:#7b9a64;"></div>
<div style="position:absolute;left:3323px;top:1484px;width:389px;height:526px;background:#2e2e2e;"></div>
<div style="position:absolute;top:1513.5px;height:59px;line-height:59px;font-family:'Liberation Sans', sans-serif;font-size:46px;color:#4b4b4b;font-weight:bold;font-style:normal;white-space:pre;left:1691.0px;width:2000px;text-align:right;">Geometry</div>
<div style="position:absolute;left:2035px;top:2008px;width:1677px;height:2px;background:#444;"></div>
<div style="position:absolute;left:2035px;top:1483px;width:1677px;height:3px;background:#121212;"></div>
<div style="position:absolute;left:3321px;top:1486px;width:2px;height:522px;background:#98c080;"></div>
<div style="position:absolute;left:2563px;top:1482px;width:16px;height:12px;background:#c8c8c8;border-radius:0 0 8px 8px;"></div>
<div style="position:absolute;left:2658px;top:1484px;width:22px;height:12px;background:#5a6a68;border-radius:0 0 3px 3px;"></div>
<div style="position:absolute;top:1508.0px;height:52px;line-height:52px;font-family:'Liberation Sans', sans-serif;font-size:40px;color:#8ea67c;font-weight:normal;font-style:normal;white-space:pre;opacity:0.8;left:2655.0px;">Non-Commercial Edition</div>
<div style="position:absolute;left:2447px;top:1511px;width:387px;height:446px;background:rgba(132,128,132,0.42);border:3.5px solid #e0e620;border-radius:16px;box-sizing:border-box;"></div>
<div style="position:absolute;left:2451px;top:1515px;width:379px;height:40px;background:rgba(140,140,140,0.22);border-radius:12px 12px 0 0;"></div>
<div style="position:absolute;left:2463px;top:1532px;width:22px;height:5px;background:#111;"></div>
<div style="position:absolute;left:2489px;top:1515px;width:1px;height:40px;background:rgba(90,90,90,0.5);"></div>
<div style="position:absolute;top:1516.0px;height:36px;line-height:36px;font-family:'Liberation Sans', sans-serif;font-size:28.4px;color:#121212;font-weight:normal;font-style:normal;white-space:pre;left:2497.0px;">3 p@orients</div>
<svg style="position:absolute;left:2035px;top:1484px;" width="1288" height="526" viewBox="0 0 1288 526"><line x1="82" y1="283" x2="82" y2="355" stroke="rgba(170,220,205,0.55)" stroke-width="1.4"/><line x1="82" y1="420" x2="82" y2="492" stroke="rgba(170,220,205,0.55)" stroke-width="1.4"/><line x1="536" y1="8" x2="495" y2="86" stroke="rgba(170,220,205,0.55)" stroke-width="1.4"/><line x1="536" y1="157" x2="495" y2="234" stroke="rgba(170,220,205,0.55)" stroke-width="1.4"/><line x1="536" y1="305" x2="495" y2="382" stroke="rgba(170,220,205,0.55)" stroke-width="1.4"/><line x1="536" y1="452" x2="536" y2="526" stroke="rgba(170,220,205,0.55)" stroke-width="1.4"/></svg>
<div style="position:absolute;left:2507px;top:1545px;width:128px;height:128px;background:rgba(140,190,185,0.35);border-radius:50%;"></div>
<div style="position:absolute;left:2532px;top:1562px;width:78px;height:94px;background:rgba(190,190,190,0.28);border-radius:50%;"></div>
<div style="position:absolute;left:2049px;top:1715px;width:137px;height:40px;background:#d2d2d2;border-radius:7px;border:1px solid #b0b0b0;box-sizing:border-box;"></div>
<svg style="position:absolute;left:2049px;top:1715px;" width="137" height="40" viewBox="0 0 137 40"><line x1="22" y1="2" x2="16" y2="38" stroke="#999" stroke-width="1"/><line x1="42" y1="2" x2="36" y2="38" stroke="#999" stroke-width="1"/><line x1="98" y1="2" x2="92" y2="38" stroke="#999" stroke-width="1"/><line x1="118" y1="2" x2="112" y2="38" stroke="#999" stroke-width="1"/></svg>
<svg style="position:absolute;left:2100px;top:1717px;" width="36" height="36" viewBox="0 0 36 36"><line x1="6" y1="4" x2="6" y2="34" stroke="#888"/><line x1="4" y1="32" x2="34" y2="32" stroke="#888"/><line x1="8" y1="30" x2="26" y2="6" stroke="#111" stroke-width="3"/><path d="M6,28 L24,4" stroke="#d02020" stroke-width="1.5" stroke-dasharray="2,2"/></svg>
<div style="position:absolute;top:1717.0px;height:36px;line-height:36px;font-family:'Liberation Sans', sans-serif;font-size:28px;color:#dcdcdc;font-weight:normal;font-style:normal;white-space:pre;left:2200.0px;">line1</div>
<div style="position:absolute;left:2049px;top:1852px;width:137px;height:40px;background:#d2d2d2;border-radius:7px;border:1px solid #b0b0b0;box-sizing:border-box;"></div>
<svg style="position:absolute;left:2049px;top:1852px;" width="137" height="40" viewBox="0 0 137 40"><line x1="22" y1="2" x2="16" y2="38" stroke="#999" stroke-width="1"/><line x1="42" y1="2" x2="36" y2="38" stroke="#999" stroke-width="1"/><line x1="98" y1="2" x2="92" y2="38" stroke="#999" stroke-width="1"/><line x1="118" y1="2" x2="112" y2="38" stroke="#999" stroke-width="1"/></svg>
<svg style="position:absolute;left:2100px;top:1856px;" width="36" height="32" viewBox="0 0 36 32"><path d="M4,10 Q12,2 18,10 Q24,18 32,10 M4,24 Q12,16 18,24 Q24,32 32,24" stroke="#d03030" stroke-width="2" stroke-dasharray="3,2" fill="none"/></svg>
<div style="position:absolute;top:1854.0px;height:36px;line-height:36px;font-family:'Liberation Sans', sans-serif;font-size:28px;color:#dcdcdc;font-weight:normal;font-style:normal;white-space:pre;left:2200.0px;">resample3</div>
<div style="position:absolute;left:2049px;top:1988px;width:137px;height:40px;background:#d2d2d2;border-radius:7px;border:1px solid #b0b0b0;box-sizing:border-box;"></div>
<svg style="position:absolute;left:2049px;top:1988px;" width="137" height="40" viewBox="0 0 137 40"><line x1="22" y1="2" x2="16" y2="38" stroke="#999" stroke-width="1"/><line x1="42" y1="2" x2="36" y2="38" stroke="#999" stroke-width="1"/><line x1="98" y1="2" x2="92" y2="38" stroke="#999" stroke-width="1"/><line x1="118" y1="2" x2="112" y2="38" stroke="#999" stroke-width="1"/></svg>
<svg style="position:absolute;left:2104px;top:1992px;" width="28" height="22" viewBox="0 0 28 22"><rect x="2" y="6" width="24" height="16" fill="#d02020"/><rect x="10" y="0" width="8" height="6" fill="#4a70c0"/></svg>
<div style="position:absolute;top:1990.0px;height:36px;line-height:36px;font-family:'Liberation Sans', sans-serif;font-size:28px;color:#dcdcdc;font-weight:normal;font-style:normal;white-space:pre;left:2200.0px;">rigdoctor1</div>
<div style="position:absolute;left:2110.5px;top:1760.5px;width:13px;height:13px;background:#c0c0c0;border-radius:50%;"></div>
<div style="position:absolute;left:2110.5px;top:1832.5px;width:13px;height:13px;background:#c0c0c0;border-radius:50%;"></div>
<div style="position:absolute;left:2110.5px;top:1897.5px;width:13px;height:13px;background:#c0c0c0;border-radius:50%;"></div>
<div style="position:absolute;left:2110.5px;top:1969.5px;width:13px;height:13px;background:#c0c0c0;border-radius:50%;"></div>
<svg style="position:absolute;left:2500px;top:1573px;" width="148" height="62" viewBox="0 0 148 62"><path d="M2.0,12.0 C25.0,5.0 60.0,9.0 90.0,16.0 C110.0,19.0 125.0,17.0 140.5,11.5 L140.5,57.0 C125.0,60.0 105.0,61.0 85.0,58.5 C55.0,53.0 30.0,49.0 2.0,56.0 Z" fill="none" stroke="#e8a4a4" stroke-width="6"/><path d="M2.0,12.0 C25.0,5.0 60.0,9.0 90.0,16.0 C110.0,19.0 125.0,17.0 140.5,11.5 L140.5,57.0 C125.0,60.0 105.0,61.0 85.0,58.5 C55.0,53.0 30.0,49.0 2.0,56.0 Z" fill="#f54848" stroke="#111" stroke-width="1.6"/><line x1="23" y1="10" x2="18" y2="57" stroke="#8a1a1a" stroke-width="1"/><line x1="42" y1="10" x2="36.5" y2="57" stroke="#8a1a1a" stroke-width="1"/><line x1="106" y1="10" x2="101" y2="57" stroke="#8a1a1a" stroke-width="1"/><path d="M126.0,15.5 L140.5,11.5 L140.5,57.0 L121.0,59.0 Z" fill="#08a8ec" stroke="#111" stroke-width="1.2"/></svg>
<svg style="position:absolute;left:2553px;top:1589px;transform:scale(0.82);transform-origin:0 0;" width="46" height="44" viewBox="0 0 46 44"><path d="M4,30 Q2,22 12,20 Q16,6 30,8 Q40,10 40,20 Q44,26 38,32 Q20,40 4,30Z" fill="#e0c030" stroke="#6a5010" stroke-width="1.5"/><ellipse cx="20" cy="28" rx="9" ry="4" fill="#111"/><polygon points="14,6 18,12 24,8 20,14 24,18 18,16 14,20 16,14 10,12 16,12" fill="#eee"/><rect x="26" y="26" width="14" height="10" fill="#ddd"/><polygon points="28,36 22,42 32,36" fill="#ddd"/></svg>
<div style="position:absolute;left:2523.9px;top:1563.5px;width:13px;height:13px;background:#c8c8c8;border-radius:50%;"></div>
<div style="position:absolute;left:2551.2px;top:1566.6px;width:13px;height:13px;background:#c8c8c8;border-radius:50%;"></div>
<div style="position:absolute;left:2578.5px;top:1569.7px;width:13px;height:13px;background:#c8c8c8;border-radius:50%;"></div>
<div style="position:absolute;left:2605.9px;top:1572.8px;width:13px;height:13px;background:#c8c8c8;border-radius:50%;"></div>
<div style="position:absolute;left:2564.5px;top:1634.5px;width:13px;height:13px;background:#c8c8c8;border-radius:50%;"></div>
<div style="position:absolute;top:1561.5px;height:33px;line-height:33px;font-family:'Liberation Sans', sans-serif;font-size:25.8px;color:#66666c;font-weight:normal;font-style:normal;white-space:pre;left:2654.0px;">Attribute Wrangle</div>
<div style="position:absolute;top:1590.0px;height:36px;line-height:36px;font-family:'Liberation Sans', sans-serif;font-size:28.4px;color:#e6e6e6;font-weight:normal;font-style:normal;white-space:pre;left:2654.0px;">Set_Orient2</div>
<svg style="position:absolute;left:2658px;top:1631px;" width="22" height="22" viewBox="0 0 22 22"><path d="M6,10 L6,7 A5,5 0 0 1 16,7 L16,10" stroke="#5a6a68" stroke-width="3" fill="none"/><rect x="3" y="10" width="16" height="11" rx="2" fill="#5a6a68"/></svg>
<svg style="position:absolute;left:2500px;top:1721px;" width="148" height="62" viewBox="0 0 148 62"><path d="M2.0,12.0 C25.0,5.0 60.0,9.0 90.0,16.0 C110.0,19.0 125.0,17.0 140.5,11.5 L140.5,57.0 C125.0,60.0 105.0,61.0 85.0,58.5 C55.0,53.0 30.0,49.0 2.0,56.0 Z" fill="#f54848" stroke="#9a2a2a" stroke-width="1"/><line x1="23" y1="10" x2="18" y2="57" stroke="#8a1a1a" stroke-width="1"/><line x1="42" y1="10" x2="36.5" y2="57" stroke="#8a1a1a" stroke-width="1"/><line x1="106" y1="10" x2="101" y2="57" stroke="#8a1a1a" stroke-width="1"/></svg>
<svg style="position:absolute;left:2553px;top:1737px;transform:scale(0.82);transform-origin:0 0;" width="46" height="44" viewBox="0 0 46 44"><path d="M4,30 Q2,22 12,20 Q16,6 30,8 Q40,10 40,20 Q44,26 38,32 Q20,40 4,30Z" fill="#e0c030" stroke="#6a5010" stroke-width="1.5"/><ellipse cx="20" cy="28" rx="9" ry="4" fill="#111"/><polygon points="14,6 18,12 24,8 20,14 24,18 18,16 14,20 16,14 10,12 16,12" fill="#eee"/><rect x="26" y="26" width="14" height="10" fill="#ddd"/><polygon points="28,36 22,42 32,36" fill="#ddd"/></svg>
<div style="position:absolute;left:2523.9px;top:1711.5px;width:13px;height:13px;background:#c8c8c8;border-radius:50%;"></div>
<div style="position:absolute;left:2551.2px;top:1714.6px;width:13px;height:13px;background:#c8c8c8;border-radius:50%;"></div>
<div style="position:absolute;left:2578.5px;top:1717.7px;width:13px;height:13px;background:#c8c8c8;border-radius:50%;"></div>
<div style="position:absolute;left:2605.9px;top:1720.8px;width:13px;height:13px;background:#c8c8c8;border-radius:50%;"></div>
<div style="position:absolute;left:2564.5px;top:1782.5px;width:13px;height:13px;background:#c8c8c8;border-radius:50%;"></div>
<div style="position:absolute;top:1709.5px;height:33px;line-height:33px;font-family:'Liberation Sans', sans-serif;font-size:25.8px;color:#66666c;font-weight:normal;font-style:normal;white-space:pre;left:2654.0px;">Attribute Wrangle</div>
<div style="position:absolute;top:1738.0px;height:36px;line-height:36px;font-family:'Liberation Sans', sans-serif;font-size:28.4px;color:#e6e6e6;font-weight:normal;font-style:normal;white-space:pre;left:2654.0px;">Set_Orient3</div>
<svg style="position:absolute;left:2658px;top:1779px;" width="22" height="22" viewBox="0 0 22 22"><path d="M6,10 L6,7 A5,5 0 0 1 16,7 L16,10" stroke="#5a6a68" stroke-width="3" fill="none"/><rect x="3" y="10" width="16" height="11" rx="2" fill="#5a6a68"/></svg>
<svg style="position:absolute;left:2500px;top:1869px;" width="148" height="62" viewBox="0 0 148 62"><path d="M2.0,12.0 C25.0,5.0 60.0,9.0 90.0,16.0 C110.0,19.0 125.0,17.0 140.5,11.5 L140.5,57.0 C125.0,60.0 105.0,61.0 85.0,58.5 C55.0,53.0 30.0,49.0 2.0,56.0 Z" fill="#f54848" stroke="#9a2a2a" stroke-width="1"/><line x1="23" y1="10" x2="18" y2="57" stroke="#8a1a1a" stroke-width="1"/><line x1="42" y1="10" x2="36.5" y2="57" stroke="#8a1a1a" stroke-width="1"/><line x1="106" y1="10" x2="101" y2="57" stroke="#8a1a1a" stroke-width="1"/></svg>
<svg style="position:absolute;left:2553px;top:1885px;transform:scale(0.82);transform-origin:0 0;" width="46" height="44" viewBox="0 0 46 44"><path d="M4,30 Q2,22 12,20 Q16,6 30,8 Q40,10 40,20 Q44,26 38,32 Q20,40 4,30Z" fill="#e0c030" stroke="#6a5010" stroke-width="1.5"/><ellipse cx="20" cy="28" rx="9" ry="4" fill="#111"/><polygon points="14,6 18,12 24,8 20,14 24,18 18,16 14,20 16,14 10,12 16,12" fill="#eee"/><rect x="26" y="26" width="14" height="10" fill="#ddd"/><polygon points="28,36 22,42 32,36" fill="#ddd"/></svg>
<div style="position:absolute;left:2523.9px;top:1859.5px;width:13px;height:13px;background:#c8c8c8;border-radius:50%;"></div>
<div style="position:absolute;left:2551.2px;top:1862.6px;width:13px;height:13px;background:#c8c8c8;border-radius:50%;"></div>
<div style="position:absolute;left:2578.5px;top:1865.7px;width:13px;height:13px;background:#c8c8c8;border-radius:50%;"></div>
<div style="position:absolute;left:2605.9px;top:1868.8px;width:13px;height:13px;background:#c8c8c8;border-radius:50%;"></div>
<div style="position:absolute;left:2564.5px;top:1930.5px;width:13px;height:13px;background:#c8c8c8;border-radius:50%;"></div>
<div style="position:absolute;top:1857.5px;height:33px;line-height:33px;font-family:'Liberation Sans', sans-serif;font-size:25.8px;color:#66666c;font-weight:normal;font-style:normal;white-space:pre;left:2654.0px;">Attribute Wrangle</div>
<div style="position:absolute;top:1886.0px;height:36px;line-height:36px;font-family:'Liberation Sans', sans-serif;font-size:28.4px;color:#e6e6e6;font-weight:normal;font-style:normal;white-space:pre;left:2654.0px;">Set_Orient4</div>
<svg style="position:absolute;left:2658px;top:1927px;" width="22" height="22" viewBox="0 0 22 22"><path d="M6,10 L6,7 A5,5 0 0 1 16,7 L16,10" stroke="#5a6a68" stroke-width="3" fill="none"/><rect x="3" y="10" width="16" height="11" rx="2" fill="#5a6a68"/></svg>
<div style="position:absolute;left:112px;top:2010px;width:3600px;height:141px;background:#303030;border-top:2px solid #575757;box-sizing:border-box;"></div>
<div style="position:absolute;left:112px;top:2012px;width:19px;height:139px;background:#444;background:linear-gradient(90deg,#3a3a3a,#4a4a4a);border-right:2px solid #222;box-sizing:border-box;"></div>
<svg style="position:absolute;left:115.5px;top:2135.5px;" width="13" height="11" viewBox="0 0 13 11"><polygon points="0,0 13,0 6.5,11" fill="#0a0a0a"/></svg>
<div style="position:absolute;left:138px;top:2029px;width:52px;height:54px;background:#454545;background:linear-gradient(#555,#3e3e3e);border:1px solid #222;box-sizing:border-box;"></div>
<div style="position:absolute;left:191px;top:2029px;width:53px;height:54px;background:#454545;background:linear-gradient(#555,#3e3e3e);border:1px solid #222;box-sizing:border-box;"></div>
<div style="position:absolute;left:245px;top:2029px;width:53px;height:54px;background:#62788f;background:linear-gradient(#5a708a,#6f88a4);border:1px solid #222;box-sizing:border-box;"></div>
<div style="position:absolute;left:299px;top:2029px;width:53px;height:54px;background:#454545;background:linear-gradient(#555,#3e3e3e);border:1px solid #222;box-sizing:border-box;"></div>
<div style="position:absolute;left:353px;top:2029px;width:53px;height:54px;background:#454545;background:linear-gradient(#555,#3e3e3e);border:1px solid #222;box-sizing:border-box;"></div>
<svg style="position:absolute;left:140px;top:2035px;" width="50" height="42" viewBox="0 0 50 42"><rect x="6" y="8" width="7" height="24" fill="#e0e0e0" stroke="#333"/><polygon points="14,20 28,8 28,32" fill="#e0e0e0" stroke="#333"/><polygon points="30,20 44,8 44,32" fill="#e0e0e0" stroke="#333"/></svg>
<svg style="position:absolute;left:193px;top:2035px;" width="50" height="42" viewBox="0 0 50 42"><polygon points="12,20 34,6 34,34" fill="#e0e0e0" stroke="#333" stroke-width="1.5"/></svg>
<svg style="position:absolute;left:247px;top:2035px;" width="50" height="42" viewBox="0 0 50 42"><rect x="10" y="8" width="30" height="29" fill="#dde8dd" stroke="#222" stroke-width="2"/></svg>
<svg style="position:absolute;left:301px;top:2035px;" width="50" height="42" viewBox="0 0 50 42"><polygon points="16,6 38,20 16,34" fill="#e0e0e0" stroke="#333" stroke-width="1.5"/></svg>
<svg style="position:absolute;left:355px;top:2035px;" width="50" height="42" viewBox="0 0 50 42"><polygon points="6,8 20,20 6,32" fill="#e0e0e0" stroke="#333"/><polygon points="22,8 36,20 22,32" fill="#e0e0e0" stroke="#333"/><rect x="38" y="8" width="7" height="24" fill="#e0e0e0" stroke="#333"/></svg>
<div style="position:absolute;left:411px;top:2028px;width:93px;height:55px;background:#121212;"></div>
<div style="position:absolute;top:2040.5px;height:31px;line-height:31px;font-family:'Liberation Mono', monospace;font-size:24px;color:#f0f0f0;font-weight:normal;font-style:normal;white-space:pre;left:415.0px;">1</div>
<div style="position:absolute;left:507px;top:2030px;width:26px;height:54px;background:#454545;background:linear-gradient(#555,#3e3e3e);border:1px solid #222;box-sizing:border-box;"></div>
<div style="position:absolute;left:533px;top:2030px;width:27px;height:54px;background:#454545;background:linear-gradient(#555,#3e3e3e);border:1px solid #222;box-sizing:border-box;"></div>
<svg style="position:absolute;left:510px;top:2048px;" width="22" height="18" viewBox="0 0 22 18"><polygon points="2,9 10,2 10,16" fill="#ddd"/><rect x="13" y="2" width="4" height="14" fill="#ddd"/></svg>
<svg style="position:absolute;left:536px;top:2048px;" width="22" height="18" viewBox="0 0 22 18"><rect x="3" y="2" width="4" height="14" fill="#ddd"/><polygon points="10,2 18,9 10,16" fill="#ddd"/></svg>
<div style="position:absolute;left:568px;top:2037px;width:265px;height:19px;background:#c0650f;"></div>
<div style="position:absolute;left:568px;top:2055px;width:2644px;height:2px;background:#bdbdbd;"></div>
<svg style="position:absolute;left:560px;top:2037px;" width="2670" height="34" viewBox="0 0 2670 34"><line x1="45.3" y1="9" x2="45.3" y2="27" stroke="#a8a8a8" stroke-width="2"/><line x1="89.4" y1="9" x2="89.4" y2="27" stroke="#a8a8a8" stroke-width="2"/><line x1="133.6" y1="9" x2="133.6" y2="27" stroke="#a8a8a8" stroke-width="2"/><line x1="177.7" y1="9" x2="177.7" y2="27" stroke="#a8a8a8" stroke-width="2"/><line x1="221.8" y1="9" x2="221.8" y2="27" stroke="#a8a8a8" stroke-width="2"/><line x1="266.0" y1="0" x2="266.0" y2="32" stroke="#bdbdbd" stroke-width="2.5"/><line x1="310.1" y1="9" x2="310.1" y2="27" stroke="#a8a8a8" stroke-width="2"/><line x1="354.3" y1="9" x2="354.3" y2="27" stroke="#a8a8a8" stroke-width="2"/><line x1="398.4" y1="9" x2="398.4" y2="27" stroke="#a8a8a8" stroke-width="2"/><line x1="442.5" y1="9" x2="442.5" y2="27" stroke="#a8a8a8" stroke-width="2"/><line x1="486.7" y1="9" x2="486.7" y2="27" stroke="#a8a8a8" stroke-width="2"/><line x1="530.8" y1="0" x2="530.8" y2="32" stroke="#bdbdbd" stroke-width="2.5"/><line x1="574.9" y1="9" x2="574.9" y2="27" stroke="#a8a8a8" stroke-width="2"/><line x1="619.1" y1="9" x2="619.1" y2="27" stroke="#a8a8a8" stroke-width="2"/><line x1="663.2" y1="9" x2="663.2" y2="27" stroke="#a8a8a8" stroke-width="2"/><line x1="707.3" y1="9" x2="707.3" y2="27" stroke="#a8a8a8" stroke-width="2"/><line x1="751.5" y1="9" x2="751.5" y2="27" stroke="#a8a8a8" stroke-width="2"/><line x1="795.6" y1="0" x2="795.6" y2="32" stroke="#bdbdbd" stroke-width="2.5"/><line x1="839.7" y1="9" x2="839.7" y2="27" stroke="#a8a8a8" stroke-width="2"/><line x1="883.9" y1="9" x2="883.9" y2="27" stroke="#a8a8a8" stroke-width="2"/><line x1="928.0" y1="9" x2="928.0" y2="27" stroke="#a8a8a8" stroke-width="2"/><line x1="972.1" y1="9" x2="972.1" y2="27" stroke="#a8a8a8" stroke-width="2"/><line x1="1016.3" y1="9" x2="1016.3" y2="27" stroke="#a8a8a8" stroke-width="2"/><line x1="1060.4" y1="0" x2="1060.4" y2="32" stroke="#bdbdbd" stroke-width="2.5"/><line x1="1104.5" y1="9" x2="1104.5" y2="27" stroke="#a8a8a8" stroke-width="2"/><line x1="1148.7" y1="9" x2="1148.7" y2="27" stroke="#a8a8a8" stroke-width="2"/><line x1="1192.8" y1="9" x2="1192.8" y2="27" stroke="#a8a8a8" stroke-width="2"/><line x1="1237.0" y1="9" x2="1237.0" y2="27" stroke="#a8a8a8" stroke-width="2"/><line x1="1281.1" y1="9" x2="1281.1" y2="27" stroke="#a8a8a8" stroke-width="2"/><line x1="1325.2" y1="0" x2="1325.2" y2="32" stroke="#bdbdbd" stroke-width="2.5"/><line x1="1369.4" y1="9" x2="1369.4" y2="27" stroke="#a8a8a8" stroke-width="2"/><line x1="1413.5" y1="9" x2="1413.5" y2="27" stroke="#a8a8a8" stroke-width="2"/><line x1="1457.6" y1="9" x2="1457.6" y2="27" stroke="#a8a8a8" stroke-width="2"/><line x1="1501.8" y1="9" x2="1501.8" y2="27" stroke="#a8a8a8" stroke-width="2"/><line x1="1545.9" y1="9" x2="1545.9" y2="27" stroke="#a8a8a8" stroke-width="2"/><line x1="1590.0" y1="0" x2="1590.0" y2="32" stroke="#bdbdbd" stroke-width="2.5"/><line x1="1634.2" y1="9" x2="1634.2" y2="27" stroke="#a8a8a8" stroke-width="2"/><line x1="1678.3" y1="9" x2="1678.3" y2="27" stroke="#a8a8a8" stroke-width="2"/><line x1="1722.4" y1="9" x2="1722.4" y2="27" stroke="#a8a8a8" stroke-width="2"/><line x1="1766.6" y1="9" x2="1766.6" y2="27" stroke="#a8a8a8" stroke-width="2"/><line x1="1810.7" y1="9" x2="1810.7" y2="27" stroke="#a8a8a8" stroke-width="2"/><line x1="1854.8" y1="0" x2="1854.8" y2="32" stroke="#bdbdbd" stroke-width="2.5"/><line x1="1899.0" y1="9" x2="1899.0" y2="27" stroke="#a8a8a8" stroke-width="2"/><line x1="1943.1" y1="9" x2="1943.1" y2="27" stroke="#a8a8a8" stroke-width="2"/><line x1="1987.2" y1="9" x2="1987.2" y2="27" stroke="#a8a8a8" stroke-width="2"/><line x1="2031.4" y1="9" x2="2031.4" y2="27" stroke="#a8a8a8" stroke-width="2"/><line x1="2075.5" y1="9" x2="2075.5" y2="27" stroke="#a8a8a8" stroke-width="2"/><line x1="2119.7" y1="0" x2="2119.7" y2="32" stroke="#bdbdbd" stroke-width="2.5"/><line x1="2163.8" y1="9" x2="2163.8" y2="27" stroke="#a8a8a8" stroke-width="2"/><line x1="2207.9" y1="9" x2="2207.9" y2="27" stroke="#a8a8a8" stroke-width="2"/><line x1="2252.1" y1="9" x2="2252.1" y2="27" stroke="#a8a8a8" stroke-width="2"/><line x1="2296.2" y1="9" x2="2296.2" y2="27" stroke="#a8a8a8" stroke-width="2"/><line x1="2340.3" y1="9" x2="2340.3" y2="27" stroke="#a8a8a8" stroke-width="2"/><line x1="2384.5" y1="0" x2="2384.5" y2="32" stroke="#bdbdbd" stroke-width="2.5"/><line x1="2428.6" y1="9" x2="2428.6" y2="27" stroke="#a8a8a8" stroke-width="2"/><line x1="2472.7" y1="9" x2="2472.7" y2="27" stroke="#a8a8a8" stroke-width="2"/><line x1="2516.9" y1="9" x2="2516.9" y2="27" stroke="#a8a8a8" stroke-width="2"/><line x1="2561.0" y1="9" x2="2561.0" y2="27" stroke="#a8a8a8" stroke-width="2"/><line x1="2605.1" y1="9" x2="2605.1" y2="27" stroke="#a8a8a8" stroke-width="2"/><line x1="2649.3" y1="0" x2="2649.3" y2="32" stroke="#bdbdbd" stroke-width="2.5"/></svg>
<div style="position:absolute;top:2010.0px;height:26px;line-height:26px;font-family:'Liberation Sans', sans-serif;font-size:20.5px;color:#a8a8a8;font-weight:normal;font-style:normal;white-space:pre;left:825.0px;">30</div>
<div style="position:absolute;top:2010.0px;height:26px;line-height:26px;font-family:'Liberation Sans', sans-serif;font-size:20.5px;color:#a8a8a8;font-weight:normal;font-style:normal;white-space:pre;left:1089.8px;">60</div>
<div style="position:absolute;top:2010.0px;height:26px;line-height:26px;font-family:'Liberation Sans', sans-serif;font-size:20.5px;color:#a8a8a8;font-weight:normal;font-style:normal;white-space:pre;left:1354.6px;">90</div>
<div style="position:absolute;top:2010.0px;height:26px;line-height:26px;font-family:'Liberation Sans', sans-serif;font-size:20.5px;color:#a8a8a8;font-weight:normal;font-style:normal;white-space:pre;left:1619.4px;">120</div>
<div style="position:absolute;top:2010.0px;height:26px;line-height:26px;font-family:'Liberation Sans', sans-serif;font-size:20.5px;color:#a8a8a8;font-weight:normal;font-style:normal;white-space:pre;left:1884.2px;">150</div>
<div style="position:absolute;top:2010.0px;height:26px;line-height:26px;font-family:'Liberation Sans', sans-serif;font-size:20.5px;color:#a8a8a8;font-weight:normal;font-style:normal;white-space:pre;left:2149.0px;">180</div>
<div style="position:absolute;top:2010.0px;height:26px;line-height:26px;font-family:'Liberation Sans', sans-serif;font-size:20.5px;color:#a8a8a8;font-weight:normal;font-style:normal;white-space:pre;left:2413.8px;">210</div>
<div style="position:absolute;top:2010.0px;height:26px;line-height:26px;font-family:'Liberation Sans', sans-serif;font-size:20.5px;color:#a8a8a8;font-weight:normal;font-style:normal;white-space:pre;left:2678.7px;">240</div>
<div style="position:absolute;top:2010.0px;height:26px;line-height:26px;font-family:'Liberation Sans', sans-serif;font-size:20.5px;color:#a8a8a8;font-weight:normal;font-style:normal;white-space:pre;left:2943.5px;">270</div>
<div style="position:absolute;top:2010.0px;height:26px;line-height:26px;font-family:'Liberation Sans', sans-serif;font-size:20.5px;color:#a8a8a8;font-weight:normal;font-style:normal;white-space:pre;left:3209.0px;">3</div>
<div style="position:absolute;left:568px;top:2016px;width:47px;height:27px;background:#080808;border:2px solid #e8e8e8;box-sizing:border-box;"></div>
<div style="position:absolute;top:2016.0px;height:28px;line-height:28px;font-family:'Liberation Sans', sans-serif;font-size:22px;color:#fff;font-weight:normal;font-style:normal;white-space:pre;left:-409.0px;width:2000px;text-align:center;">1</div>
<svg style="position:absolute;left:568px;top:2041px;" width="14" height="14" viewBox="0 0 14 14"><polygon points="0,14 0,2 12,2" fill="#080808" stroke="#e8e8e8" stroke-width="1.5"/></svg>
<div style="position:absolute;left:138px;top:2099px;width:52px;height:46px;background:#454545;background:linear-gradient(#555,#3e3e3e);border:1px solid #222;box-sizing:border-box;"></div>
<div style="position:absolute;left:191px;top:2099px;width:53px;height:46px;background:#454545;background:linear-gradient(#555,#3e3e3e);border:1px solid #222;box-sizing:border-box;"></div>
<div style="position:absolute;left:245px;top:2099px;width:53px;height:46px;background:#454545;background:linear-gradient(#555,#3e3e3e);border:1px solid #222;box-sizing:border-box;"></div>
<div style="position:absolute;left:299px;top:2099px;width:53px;height:46px;background:#62788f;background:linear-gradient(#5a708a,#6f88a4);border:1px solid #222;box-sizing:border-box;"></div>
<div style="position:absolute;left:353px;top:2099px;width:53px;height:46px;background:#454545;background:linear-gradient(#555,#3e3e3e);border:1px solid #222;box-sizing:border-box;"></div>
<div style="position:absolute;left:407px;top:2099px;width:53px;height:46px;background:#454545;background:linear-gradient(#555,#3e3e3e);border:1px solid #222;box-sizing:border-box;"></div>
<svg style="position:absolute;left:142px;top:2102px;" width="48" height="42" viewBox="0 0 48 42"><rect x="14" y="4" width="26" height="28" fill="#eee" stroke="#1c1c2c" stroke-width="2"/><rect x="16" y="6" width="22" height="5" fill="#999"/><polygon points="26,22 26,40 31,35 40,34" fill="#111" stroke="#eee" stroke-width="2"/></svg>
<svg style="position:absolute;left:195px;top:2102px;" width="48" height="42" viewBox="0 0 48 42"><ellipse cx="30" cy="20" rx="12" ry="17" fill="#1c1c2c" stroke="#ddd" stroke-width="2"/><rect x="12" y="14" width="10" height="12" fill="#ccc"/><ellipse cx="30" cy="20" rx="4" ry="6" fill="#999"/></svg>
<svg style="position:absolute;left:249px;top:2102px;" width="48" height="42" viewBox="0 0 48 42"><path d="M8,28 Q8,10 26,10 Q40,12 40,28 Z" fill="none" stroke="#111" stroke-width="6"/><path d="M8,28 Q8,10 26,10 Q40,12 40,28 Z" fill="none" stroke="#eee" stroke-width="3"/><polygon points="6,14 16,6 16,20" fill="#eee" stroke="#111"/><polygon points="36,36 44,36 40,40" fill="#8a8a8a"/></svg>
<svg style="position:absolute;left:303px;top:2102px;" width="48" height="42" viewBox="0 0 48 42"><circle cx="24" cy="21" r="16" fill="#ddd" stroke="#1c1c2c" stroke-width="4"/><circle cx="24" cy="21" r="11" fill="none" stroke="#1c1c2c" stroke-width="3"/><path d="M24,13 L24,29 M16,21 L32,21" stroke="#1c1c2c" stroke-width="3"/></svg>
<svg style="position:absolute;left:357px;top:2102px;" width="48" height="42" viewBox="0 0 48 42"><rect x="6" y="8" width="6" height="26" fill="#eee" stroke="#1c1c2c" stroke-width="2"/><rect x="20" y="8" width="6" height="18" fill="#eee" stroke="#1c1c2c" stroke-width="2"/><rect x="34" y="8" width="6" height="26" fill="#eee" stroke="#1c1c2c" stroke-width="2"/><polygon points="40,30 46,36 40,40" fill="#8a8a8a"/></svg>
<svg style="position:absolute;left:411px;top:2102px;" width="48" height="42" viewBox="0 0 48 42"><path d="M10,6 L4,10 L10,14 M38,6 L44,10 L38,14" stroke="#ccc" stroke-width="1.5" fill="none"/><rect x="6" y="22" width="36" height="4" fill="#ddd"/><circle cx="24" cy="24" r="5" fill="#ccc" stroke="#333"/></svg>
<div style="position:absolute;left:466px;top:2098px;width:46px;height:47px;background:#454545;background:linear-gradient(#555,#3e3e3e);border:1px solid #222;box-sizing:border-box;"></div>
<div style="position:absolute;left:512px;top:2098px;width:46px;height:47px;background:#454545;background:linear-gradient(#555,#3e3e3e);border:1px solid #222;box-sizing:border-box;"></div>
<svg style="position:absolute;left:468px;top:2104px;" width="42" height="34" viewBox="0 0 42 34"><rect x="10" y="8" width="4" height="18" fill="#4a7a3a"/><polygon points="16,17 28,8 28,26" fill="#888"/></svg>
<svg style="position:absolute;left:514px;top:2104px;" width="42" height="34" viewBox="0 0 42 34"><polygon points="14,8 26,17 14,26" fill="#888"/><rect x="28" y="8" width="4" height="18" fill="#4a7a3a"/></svg>
<div style="position:absolute;left:569px;top:2098px;width:83px;height:42px;background:#1a1a1a;"></div>
<div style="position:absolute;top:2104.5px;height:31px;line-height:31px;font-family:'Liberation Mono', monospace;font-size:24px;color:#f0f0f0;font-weight:normal;font-style:normal;white-space:pre;left:575.0px;">1</div>
<div style="position:absolute;left:658px;top:2098px;width:82px;height:42px;background:#131313;"></div>
<div style="position:absolute;top:2104.5px;height:31px;line-height:31px;font-family:'Liberation Mono', monospace;font-size:24px;color:#f0f0f0;font-weight:normal;font-style:normal;white-space:pre;left:663.0px;">1</div>
<div style="position:absolute;left:752px;top:2115px;width:2288px;height:11px;background:#7a7a7a;"></div>
<svg style="position:absolute;left:744px;top:2104px;" width="18" height="32" viewBox="0 0 18 32"><polygon points="2,2 16,16 2,30" fill="#9a9a9a"/></svg>
<svg style="position:absolute;left:3028px;top:2104px;" width="18" height="32" viewBox="0 0 18 32"><polygon points="16,2 2,16 16,30" fill="#9a9a9a"/></svg>
<div style="position:absolute;left:3047px;top:2098px;width:83px;height:42px;background:#131313;"></div>
<div style="position:absolute;top:2104.5px;height:31px;line-height:31px;font-family:'Liberation Mono', monospace;font-size:24px;color:#f0f0f0;font-weight:normal;font-style:normal;white-space:pre;left:3050.0px;">300</div>
<div style="position:absolute;left:3135px;top:2098px;width:83px;height:42px;background:#1a1a1a;"></div>
<div style="position:absolute;top:2104.5px;height:31px;line-height:31px;font-family:'Liberation Mono', monospace;font-size:24px;color:#f0f0f0;font-weight:normal;font-style:normal;white-space:pre;left:3138.0px;">300</div>
<div style="position:absolute;left:3299px;top:2058px;width:36px;height:42px;background:#363636;border:1px solid #262626;box-sizing:border-box;"></div>
<svg style="position:absolute;left:3310.0px;top:2074.5px;" width="10" height="9" viewBox="0 0 10 9"><polygon points="0,0 10,0 5.0,9" fill="#aaa"/></svg>
<div style="position:absolute;left:3225px;top:2040px;width:80px;height:80px;background:#2e2e2e;border-radius:50%;border:1px solid #262626;box-sizing:border-box;"></div>
<svg style="position:absolute;left:3245px;top:2058px;" width="42" height="42" viewBox="0 0 42 42"><circle cx="28" cy="14" r="9" fill="none" stroke="#666" stroke-width="5"/><path d="M22,20 L6,36 M10,32 L14,36 M14,28 L18,32" stroke="#666" stroke-width="5"/></svg>
<div style="position:absolute;left:3345px;top:2031px;width:45px;height:45px;background:#3a3a3a;border:2px solid #222;box-sizing:border-box;"></div>
<svg style="position:absolute;left:3349px;top:2035px;" width="38" height="38" viewBox="0 0 38 38"><rect x="4" y="4" width="28" height="30" fill="#888"/><rect x="4" y="10" width="5" height="6" fill="#d02020"/><rect x="4" y="16" width="5" height="6" fill="#40b040"/><rect x="4" y="22" width="5" height="6" fill="#4a80d0"/><circle cx="22" cy="19" r="10" fill="none" stroke="#111" stroke-width="5"/><circle cx="22" cy="19" r="10" fill="none" stroke="#eee" stroke-width="2.5"/></svg>
<div style="position:absolute;left:3345px;top:2083px;width:45px;height:45px;background:#3a3a3a;border:2px solid #222;box-sizing:border-box;"></div>
<svg style="position:absolute;left:3350px;top:2088px;" width="36" height="36" viewBox="0 0 36 36"><rect x="0" y="0" width="36" height="36" fill="#0a0a0a"/><path d="M2,18 Q9,-6 18,18 Q27,42 34,18" stroke="#5a90d8" stroke-width="2.5" fill="none"/><path d="M2,20 Q12,10 18,20 Q26,30 34,18" stroke="#f0a030" stroke-width="2.5" fill="none"/><line x1="2" y1="19" x2="34" y2="19" stroke="#eee" stroke-width="1"/></svg>
<div style="position:absolute;left:3398px;top:2031px;width:306px;height:45px;background:#454545;background:linear-gradient(#525252,#3e3e3e);border:1px solid #222;box-sizing:border-box;"></div>
<div style="position:absolute;top:2039.5px;height:27px;line-height:27px;font-family:'Liberation Sans', sans-serif;font-size:21.5px;color:#d6d6d6;font-weight:normal;font-style:normal;white-space:pre;left:2529.0px;width:2000px;text-align:center;">0 keys, 0/0 channels</div>
<svg style="position:absolute;left:3676.0px;top:2047.0px;" width="14" height="12" viewBox="0 0 14 12"><polygon points="0,12 14,12 7.0,0" fill="#999"/></svg>
<div style="position:absolute;left:3398px;top:2083px;width:306px;height:45px;background:#454545;background:linear-gradient(#525252,#3e3e3e);border:1px solid #222;box-sizing:border-box;"></div>
<div style="position:absolute;left:3682px;top:2084px;width:21px;height:43px;background:#333;"></div>
<svg style="position:absolute;left:3685px;top:2090px;" width="16" height="32" viewBox="0 0 16 32"><polygon points="1,13 15,13 8,2" fill="#999"/><polygon points="1,19 15,19 8,30" fill="#999"/></svg>
<div style="position:absolute;top:2092.0px;height:28px;line-height:28px;font-family:'Liberation Sans', sans-serif;font-size:22px;color:#d6d6d6;font-weight:normal;font-style:normal;white-space:pre;left:3424.0px;">Key All Channels</div>
<div style="position:absolute;left:112px;top:2151px;width:3600px;height:50px;background:#1c1c1c;border-top:1px solid #2a2a2a;box-sizing:border-box;"></div>
<div style="position:absolute;top:2163.0px;height:28px;line-height:28px;font-family:'Liberation Sans', sans-serif;font-size:21.6px;color:#d6d6d6;font-weight:normal;font-style:normal;white-space:pre;left:116.0px;">Successfully saved Procedural_Flower_Setup (1).hipnc (Mon Apr 22 00:13:08 2024)</div>
<div style="position:absolute;left:3107px;top:2152px;width:50px;height:48px;background:#3a3a3a;"></div>
<svg style="position:absolute;left:3110px;top:2156px;" width="44" height="42" viewBox="0 0 44 42"><ellipse cx="20" cy="20" rx="18" ry="14" fill="#f0b0b0" stroke="#c05050" stroke-width="1.5"/><path d="M8,16 Q14,10 20,16 Q26,22 32,14 M10,24 Q18,20 28,26" stroke="#c05050" stroke-width="1.5" fill="none"/><polygon points="36,30 42,36 36,42" fill="#999"/></svg>
<div style="position:absolute;left:3157px;top:2152px;width:256px;height:48px;background:#444;background:linear-gradient(#4e4e4e,#3a3a3a);"></div>
<div style="position:absolute;left:3389px;top:2152px;width:24px;height:48px;background:#333;"></div>
<svg style="position:absolute;left:3393px;top:2160px;" width="16" height="32" viewBox="0 0 16 32"><polygon points="1,13 15,13 8,2" fill="#999"/><polygon points="1,19 15,19 8,30" fill="#999"/></svg>
<div style="position:absolute;top:2162.0px;height:28px;line-height:28px;font-family:'Liberation Sans', sans-serif;font-size:22px;color:#cfcfcf;font-weight:normal;font-style:normal;white-space:pre;left:3185.0px;">/obj/01_Create_Fl...</div>
<div style="position:absolute;left:3413px;top:2152px;width:54px;height:48px;background:#3a3a3a;"></div>
<svg style="position:absolute;left:3418px;top:2156px;" width="44" height="40" viewBox="0 0 44 40"><path d="M8,20 A14,14 0 0 1 34,12" stroke="#5a5a5a" stroke-width="6" fill="none"/><path d="M36,20 A14,14 0 0 1 10,28" stroke="#5a5a5a" stroke-width="6" fill="none"/></svg>
<div style="position:absolute;left:3467px;top:2152px;width:200px;height:48px;background:#444;background:linear-gradient(#4e4e4e,#3a3a3a);"></div>
<div style="position:absolute;left:3642px;top:2152px;width:25px;height:48px;background:#333;"></div>
<svg style="position:absolute;left:3647px;top:2160px;" width="16" height="32" viewBox="0 0 16 32"><polygon points="1,13 15,13 8,2" fill="#999"/><polygon points="1,19 15,19 8,30" fill="#999"/></svg>
<div style="position:absolute;top:2162.0px;height:28px;line-height:28px;font-family:'Liberation Sans', sans-serif;font-size:22px;color:#d6d6d6;font-weight:normal;font-style:normal;white-space:pre;left:2556.0px;width:2000px;text-align:center;">Auto Update</div></div></div></div></body></html>
